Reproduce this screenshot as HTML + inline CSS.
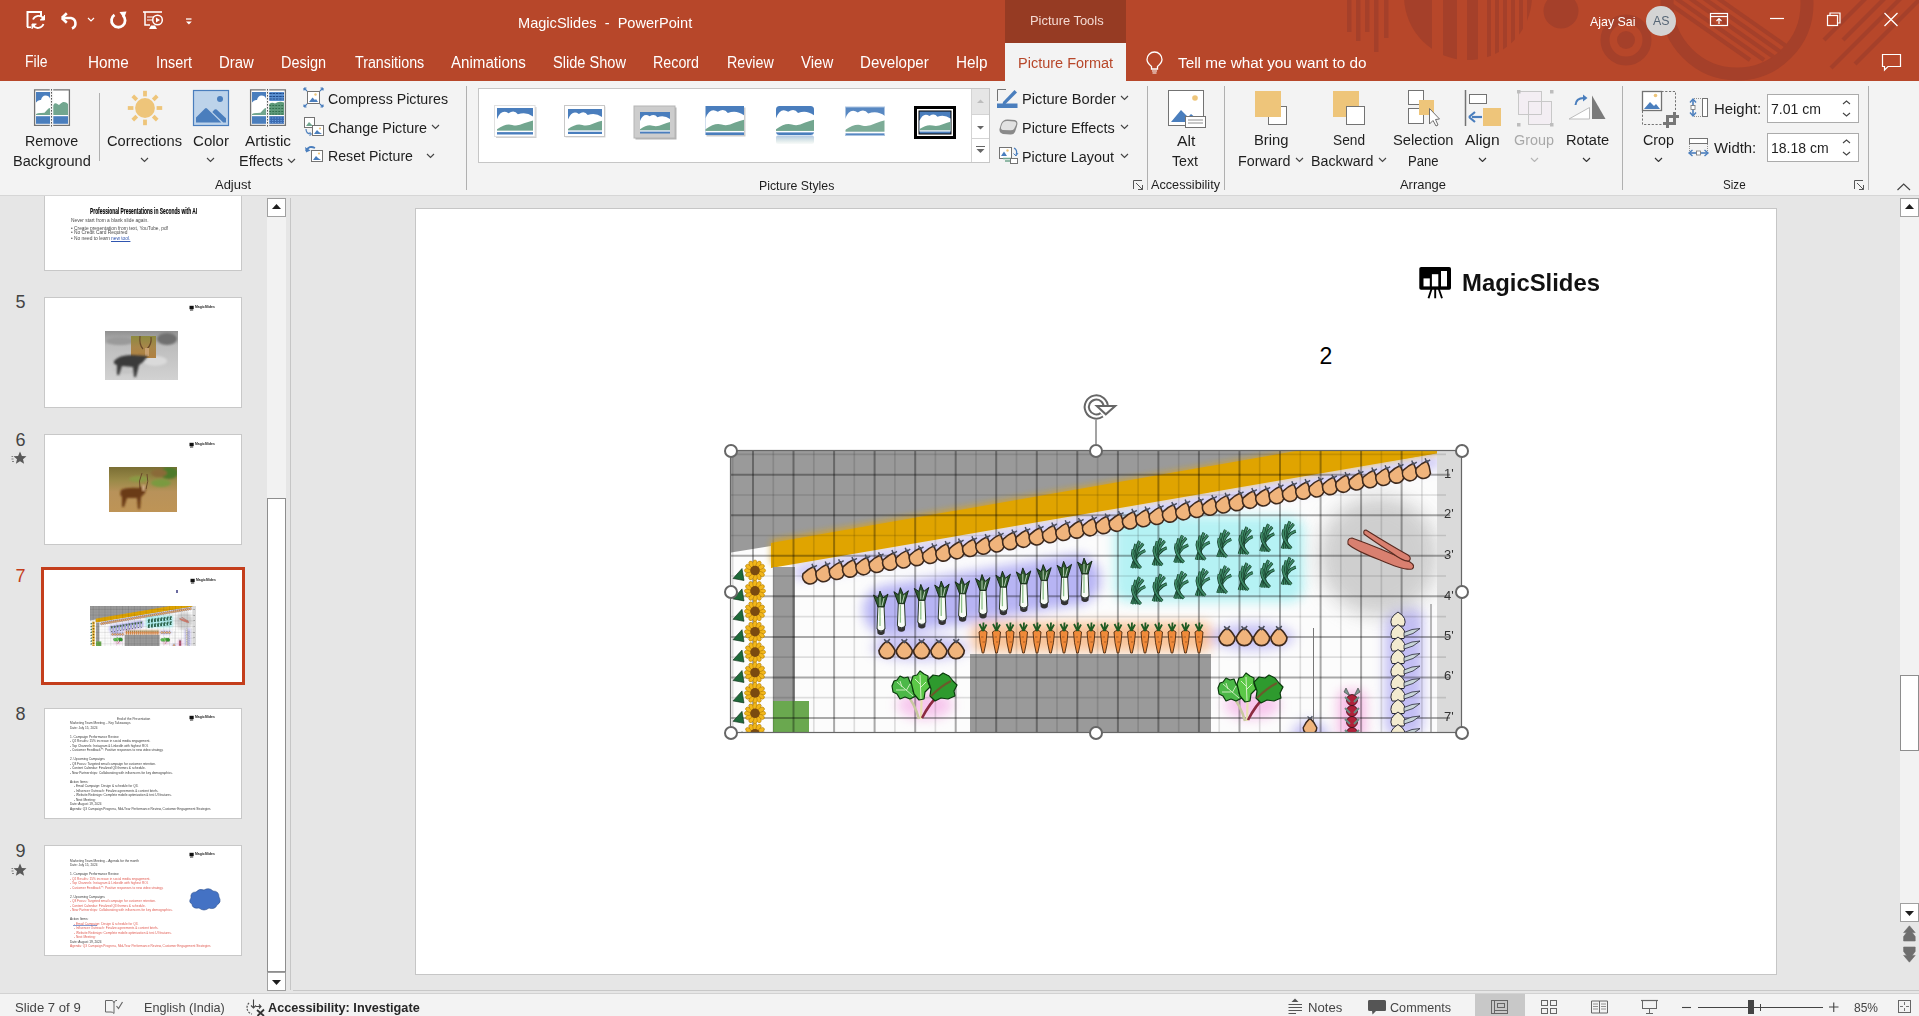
<!DOCTYPE html><html><head><meta charset="utf-8"><style>html,body{margin:0;padding:0;}body{width:1919px;height:1016px;position:relative;overflow:hidden;background:#E6E6E6;font-family:"Liberation Sans",sans-serif;}.t,.u{position:absolute;white-space:pre;font-family:"Liberation Sans",sans-serif;}</style></head><body><div style="position:absolute;left:0px;top:0px;width:1919px;height:81px;background:#B7472A;"></div><svg style="position:absolute;left:0px;top:0px;" width="1919" height="81" viewBox="0 0 1919 81"><rect x="1347" y="0" width="4.5" height="32" fill="#A5402A"/><rect x="1356" y="0" width="4.5" height="41" fill="#A5402A"/><rect x="1365" y="0" width="4.5" height="32" fill="#A5402A"/><rect x="1374" y="0" width="4.5" height="52" fill="#A5402A"/><rect x="1384" y="0" width="4.5" height="38" fill="#A5402A"/><clipPath id="semi"><circle cx="1468" cy="-4" r="64"/></clipPath><g clip-path="url(#semi)"><rect x="1400" y="0" width="32" height="70" fill="#A5402A"/><rect x="1443" y="0" width="14" height="70" fill="#A5402A"/><rect x="1467" y="0" width="11" height="70" fill="#A5402A"/><rect x="1487" y="0" width="4" height="70" fill="#A5402A"/><rect x="1495" y="0" width="4" height="70" fill="#A5402A"/><rect x="1503" y="0" width="4" height="70" fill="#A5402A"/><rect x="1511" y="0" width="4" height="70" fill="#A5402A"/><rect x="1519" y="0" width="4" height="70" fill="#A5402A"/><rect x="1527" y="0" width="5" height="70" fill="#A5402A"/></g><circle cx="1561" cy="11" r="17.5" fill="#A5402A"/><circle cx="1626" cy="40" r="21" fill="none" stroke="#A5402A" stroke-width="9"/><circle cx="1626" cy="40" r="9" fill="#A5402A"/><circle cx="1737" cy="4" r="70" fill="none" stroke="#A5402A" stroke-width="13"/><clipPath id="bigc"><circle cx="1737" cy="4" r="64"/></clipPath><g clip-path="url(#bigc)"><line x1="1650" y1="-10" x2="1750" y2="60" stroke="#A5402A" stroke-width="4.2"/><line x1="1664" y1="-10" x2="1764" y2="60" stroke="#A5402A" stroke-width="4.2"/><line x1="1678" y1="-10" x2="1778" y2="60" stroke="#A5402A" stroke-width="4.2"/><line x1="1692" y1="-10" x2="1792" y2="60" stroke="#A5402A" stroke-width="4.2"/><line x1="1706" y1="-10" x2="1806" y2="60" stroke="#A5402A" stroke-width="4.2"/></g><line x1="1824" y1="40" x2="1868" y2="-4" stroke="#A5402A" stroke-width="4.2"/><line x1="1843" y1="40" x2="1887" y2="-4" stroke="#A5402A" stroke-width="4.2"/><line x1="1831" y1="68" x2="1925" y2="-26" stroke="#A5402A" stroke-width="4.2"/><line x1="1855" y1="64" x2="1925" y2="-6" stroke="#A5402A" stroke-width="4.2"/></svg><div style="position:absolute;left:1005px;top:0px;width:121px;height:43px;background:#963B23;"></div><div style="position:absolute;left:1005px;top:43px;width:121px;height:38px;background:#F3F3F3;"></div><svg style="position:absolute;left:0px;top:0px;" width="240" height="40" viewBox="0 0 240 40"><path d="M27.5 27 V12 H41 V16" fill="none" stroke="#fff" stroke-width="2"/><path d="M27 27.3 H31" stroke="#fff" stroke-width="1.6"/><path d="M33 19.5 A6 6 0 0 1 43.5 18.5" fill="none" stroke="#fff" stroke-width="1.8"/><path d="M44.5 15 V20 H40" fill="#fff" stroke="#fff" stroke-width="1"/><path d="M43.5 24 A6 6 0 0 1 33 25.5" fill="none" stroke="#fff" stroke-width="1.8"/><path d="M32 29 V24 H36.5" fill="#fff" stroke="#fff" stroke-width="1"/><path d="M63.5 18 H71 A5.5 5.5 0 0 1 72 28.5" fill="none" stroke="#fff" stroke-width="2.6"/><path d="M61.8 18 L66.8 13.2 M61.8 18 L66.8 22.8" stroke="#fff" stroke-width="2.6" fill="none"/><path d="M88 18 L91 21 L94 18" fill="none" stroke="#fff" stroke-width="1.2"/><path d="M114.5 14.8 A6.8 6.8 0 1 0 123 15.5" fill="none" stroke="#fff" stroke-width="2.8"/><path d="M119.5 12 L126.5 11.5 L124 18.5 Z" fill="#fff"/><path d="M143 12 H162" stroke="#fff" stroke-width="1.6"/><path d="M145 12 V25 H150" fill="none" stroke="#fff" stroke-width="1.5"/><path d="M147 17 H154 M147 20 H152" stroke="#fff" stroke-width="1.2"/><circle cx="157.5" cy="20" r="4.8" fill="none" stroke="#fff" stroke-width="1.5"/><path d="M156 17.5 L160 20 L156 22.5Z" fill="#fff"/><path d="M149 29 L151 25.5 H155 L157 29 Z" fill="#fff"/><path d="M186 19 H191.5" stroke="#fff" stroke-width="1.3"/><path d="M186 21.5 H191.8 L188.9 24.5 Z" fill="#fff"/></svg><div class="t" style="left:517.50px;top:15.00px;font-size:15px;line-height:15px;color:#FFFFFF;font-weight:normal;transform:scaleX(0.9718);transform-origin:0 0;white-space:pre;">MagicSlides  -  PowerPoint</div><div class="t" style="left:1030.00px;top:14.00px;font-size:13px;line-height:13px;color:#F4DAD2;font-weight:normal;transform:scaleX(0.9921);transform-origin:0 0;">Picture Tools</div><div class="t" style="left:1590.00px;top:14.80px;font-size:13px;line-height:13px;color:#FFFFFF;font-weight:normal;transform:scaleX(0.9538);transform-origin:0 0;">Ajay Sai</div><div style="position:absolute;left:1646px;top:6px;width:30px;height:30px;border-radius:50%;background:#D4D4D4"></div><div class="t" style="left:1653.00px;top:14.72px;font-size:12.5px;line-height:12.5px;color:#556575;font-weight:normal;transform:scaleX(0.9888);transform-origin:0 0;">AS</div><svg style="position:absolute;left:0px;top:0px;" width="1919" height="81" viewBox="0 0 1919 81"><rect x="1710.5" y="13.5" width="17" height="12" fill="none" stroke="#fff" stroke-width="1.2"/><path d="M1710.5 16.5 H1727.5" stroke="#fff" stroke-width="1.2"/><path d="M1719 24 V18.5 M1716.5 21 L1719 18.5 L1721.5 21" fill="none" stroke="#fff" stroke-width="1.2"/><path d="M1770 18.5 H1784" stroke="#fff" stroke-width="1.2"/><rect x="1827.5" y="15.5" width="10" height="10" fill="none" stroke="#fff" stroke-width="1.2"/><path d="M1830 15.5 V13 H1840 V23 H1837.5" fill="none" stroke="#fff" stroke-width="1.2"/><path d="M1884.5 13 L1897.5 26 M1897.5 13 L1884.5 26" stroke="#fff" stroke-width="1.3"/><path d="M1882.5 54.5 H1900.5 V66.5 H1888 L1884.5 70 V66.5 H1882.5 Z" fill="none" stroke="#fff" stroke-width="1.2"/></svg><div class="t" style="left:25.00px;top:54.16px;font-size:16px;line-height:16px;color:#FFFFFF;font-weight:normal;transform:scaleX(0.8727);transform-origin:0 0;">File</div><div class="t" style="left:88.00px;top:54.66px;font-size:16px;line-height:16px;color:#FFFFFF;font-weight:normal;transform:scaleX(0.9546);transform-origin:0 0;">Home</div><div class="t" style="left:156.00px;top:54.66px;font-size:16px;line-height:16px;color:#FFFFFF;font-weight:normal;transform:scaleX(0.8996);transform-origin:0 0;">Insert</div><div class="t" style="left:219.00px;top:54.66px;font-size:16px;line-height:16px;color:#FFFFFF;font-weight:normal;transform:scaleX(0.9305);transform-origin:0 0;">Draw</div><div class="t" style="left:281.00px;top:54.66px;font-size:16px;line-height:16px;color:#FFFFFF;font-weight:normal;transform:scaleX(0.9034);transform-origin:0 0;">Design</div><div class="t" style="left:354.50px;top:54.66px;font-size:16px;line-height:16px;color:#FFFFFF;font-weight:normal;transform:scaleX(0.8918);transform-origin:0 0;">Transitions</div><div class="t" style="left:451.00px;top:54.66px;font-size:16px;line-height:16px;color:#FFFFFF;font-weight:normal;transform:scaleX(0.9443);transform-origin:0 0;">Animations</div><div class="t" style="left:553.00px;top:54.66px;font-size:16px;line-height:16px;color:#FFFFFF;font-weight:normal;transform:scaleX(0.9120);transform-origin:0 0;">Slide Show</div><div class="t" style="left:653.00px;top:54.66px;font-size:16px;line-height:16px;color:#FFFFFF;font-weight:normal;transform:scaleX(0.8919);transform-origin:0 0;">Record</div><div class="t" style="left:727.00px;top:54.66px;font-size:16px;line-height:16px;color:#FFFFFF;font-weight:normal;transform:scaleX(0.8910);transform-origin:0 0;">Review</div><div class="t" style="left:800.75px;top:54.66px;font-size:16px;line-height:16px;color:#FFFFFF;font-weight:normal;transform:scaleX(0.9378);transform-origin:0 0;">View</div><div class="t" style="left:860.00px;top:54.66px;font-size:16px;line-height:16px;color:#FFFFFF;font-weight:normal;transform:scaleX(0.9433);transform-origin:0 0;">Developer</div><div class="t" style="left:956.00px;top:54.66px;font-size:16px;line-height:16px;color:#FFFFFF;font-weight:normal;transform:scaleX(0.9573);transform-origin:0 0;">Help</div><div class="t" style="left:1017.60px;top:55.08px;font-size:15.5px;line-height:15.5px;color:#B7472A;font-weight:normal;transform:scaleX(0.9356);transform-origin:0 0;">Picture Format</div><svg style="position:absolute;left:1140px;top:50px;" width="30" height="28" viewBox="0 0 30 28"><path d="M11.5 16.5 C8.5 14 7 12 7 9.5 A7.5 7.5 0 0 1 22 9.5 C22 12 20.5 14 17.5 16.5 V19 H11.5 Z" fill="none" stroke="#fff" stroke-width="1.3"/><path d="M12 21 H17 M12.5 23 H16.5" stroke="#fff" stroke-width="1.2"/></svg><div class="t" style="left:1178.00px;top:54.88px;font-size:15.5px;line-height:15.5px;color:#FFFFFF;font-weight:normal;transform:scaleX(0.9860);transform-origin:0 0;">Tell me what you want to do</div><div style="position:absolute;left:0px;top:81px;width:1919px;height:114px;background:#F3F3F3;"></div><div style="position:absolute;left:0px;top:195px;width:1919px;height:1px;background:#D6D6D6;"></div><div style="position:absolute;left:99px;top:93px;width:1px;height:68px;background:#B0B0B0;"></div><div style="position:absolute;left:466px;top:86px;width:1px;height:104px;background:#B0B0B0;"></div><div style="position:absolute;left:1147px;top:86px;width:1px;height:104px;background:#B0B0B0;"></div><div style="position:absolute;left:1224px;top:86px;width:1px;height:104px;background:#B0B0B0;"></div><div style="position:absolute;left:1622px;top:86px;width:1px;height:104px;background:#B0B0B0;"></div><div style="position:absolute;left:1868px;top:86px;width:1px;height:104px;background:#B0B0B0;"></div><svg style="position:absolute;left:0px;top:81px;" width="470" height="114" viewBox="0 81 470 114"><path d="M49.8 89.9 H34.6 V125.3 H49.8 M53.2 89.9 H69.4 V125.3 H53.2" fill="#fff" stroke="#737373" stroke-width="1.3"/><rect x="36" y="92" width="14" height="23" fill="#4A7EBD"/><path d="M36 102.5 Q38 99.5 41 100 Q42 95.5 45.5 95.5 Q49 95.5 50 98.5 V115 H36 Z" fill="#fff"/><path d="M36 115 V114 Q38 112.8 41 113 L44.5 112.8 Q46 111 47 110 Q48.5 108 50 108 V115 Z" fill="#72A68F"/><rect x="36" y="116.2" width="14" height="7.6" fill="#4A7EBD"/><path d="M51.5 89 V127" stroke="#555" stroke-width="1" stroke-dasharray="1.6 1.4"/><path d="M53.3 115 V105.5 Q54 102.5 56.5 103.5 L59 105 Q61 103 63 102 Q66 101.5 68 104 V115 Z" fill="#72A68F"/><rect x="53.3" y="116.2" width="14.7" height="7.6" fill="#4A7EBD"/><circle cx="145" cy="108" r="9.9" fill="#EEC57A"/><line x1="156.6" y1="108.0" x2="162.2" y2="108.0" stroke="#EEC57A" stroke-width="3.8"/><line x1="153.2" y1="116.2" x2="157.2" y2="120.2" stroke="#EEC57A" stroke-width="3.8"/><line x1="145.0" y1="119.6" x2="145.0" y2="125.2" stroke="#EEC57A" stroke-width="3.8"/><line x1="136.8" y1="116.2" x2="132.8" y2="120.2" stroke="#EEC57A" stroke-width="3.8"/><line x1="133.4" y1="108.0" x2="127.8" y2="108.0" stroke="#EEC57A" stroke-width="3.8"/><line x1="136.8" y1="99.8" x2="132.8" y2="95.8" stroke="#EEC57A" stroke-width="3.8"/><line x1="145.0" y1="96.4" x2="145.0" y2="90.8" stroke="#EEC57A" stroke-width="3.8"/><line x1="153.2" y1="99.8" x2="157.2" y2="95.8" stroke="#EEC57A" stroke-width="3.8"/><rect x="193.5" y="90.5" width="35" height="35" fill="#BDD3EA" stroke="#4A7EBD" stroke-width="1.2"/><path d="M196 117.5 L205 108.5 Q206 107.5 207 108.5 L221.3 122.6 H196 Z" fill="#4A7EBD"/><path d="M212.3 112 L214.6 109.6 Q215.6 108.8 216.6 109.6 L226 118.2 V122.6 H223.2 Z" fill="#4A7EBD"/><circle cx="220" cy="99" r="3" fill="#4A7EBD"/><path d="M265.8 89.9 H250.6 V125.3 H265.8 M269.2 89.9 H285.4 V125.3 H269.2" fill="#fff" stroke="#737373" stroke-width="1.3"/><rect x="252" y="92" width="14" height="23" fill="#4A7EBD"/><path d="M252 102.5 Q254 99.5 257 100 Q258 95.5 261.5 95.5 Q265 95.5 266 98.5 V115 H252 Z" fill="#fff"/><path d="M252 115 V114 Q254 112.8 257 113 L260.5 112.8 Q262 111 263 110 Q264.5 108 266 108 V115 Z" fill="#72A68F"/><rect x="252" y="116.2" width="14" height="7.6" fill="#4A7EBD"/><path d="M267.5 89 V127" stroke="#555" stroke-width="1" stroke-dasharray="1.6 1.4"/><rect x="269.3" y="92" width="14.7" height="9" fill="#5A8FD0"/><path d="M269.3 93.5 H284" stroke="#1F4A8A" stroke-width="1" stroke-dasharray="2.5 0.8"/><path d="M269.3 96.5 H284" stroke="#1F4A8A" stroke-width="1" stroke-dasharray="2.5 0.8"/><path d="M269.3 99 H284" stroke="#1F4A8A" stroke-width="1" stroke-dasharray="2.5 0.8"/><path d="M269.3 115 V104 Q272 102 275 103.5 Q279 100.5 284 102.5 V115 Z" fill="#5E9A7A"/><path d="M269.3 105.5 H284" stroke="#2E6A4A" stroke-width="0.9" stroke-dasharray="1.8 1.2"/><path d="M269.3 108.5 H284" stroke="#2E6A4A" stroke-width="0.9" stroke-dasharray="1.8 1.2"/><path d="M269.3 111.5 H284" stroke="#2E6A4A" stroke-width="0.9" stroke-dasharray="1.8 1.2"/><path d="M269.3 114 H284" stroke="#2E6A4A" stroke-width="0.9" stroke-dasharray="1.8 1.2"/><rect x="269.3" y="116.2" width="14.7" height="7.6" fill="#3A6AB0"/><path d="M269.3 118 H284" stroke="#7AB0F0" stroke-width="0.8" stroke-dasharray="1.2 1.6"/><path d="M269.3 120.5 H284" stroke="#7AB0F0" stroke-width="0.8" stroke-dasharray="1.2 1.6"/><path d="M269.3 122.5 H284" stroke="#7AB0F0" stroke-width="0.8" stroke-dasharray="1.2 1.6"/><rect x="307.5" y="91.5" width="12" height="12" fill="#fff" stroke="#737373" stroke-width="1"/><path d="M309 102 L312.5 97.5 L315 100 L316 99 L318 102 Z" fill="#4A7EBD"/><circle cx="315.5" cy="94.5" r="1.2" fill="#EEC57A"/><path d="M304 88 L307 91 M304 88 V90.5 M304 88 H306.5" stroke="#4A7EBD" stroke-width="1.2"/><path d="M323 88 L320 91 M323 88 V90.5 M323 88 H320.5" stroke="#4A7EBD" stroke-width="1.2"/><path d="M304 107 L307 104 M304 107 V104.5 M304 107 H306.5" stroke="#4A7EBD" stroke-width="1.2"/><path d="M323 107 L320 104 M323 107 V104.5 M323 107 H320.5" stroke="#4A7EBD" stroke-width="1.2"/><rect x="304.5" y="117.5" width="10" height="10" fill="#fff" stroke="#737373" stroke-width="1"/><path d="M306 126 L309 122 L313 126 Z" fill="#72A68F"/><rect x="312.5" y="125.5" width="11" height="10" fill="#fff" stroke="#737373" stroke-width="1"/><path d="M314 134 L317 130 L319 132 L322 134 Z" fill="#4A7EBD"/><circle cx="320" cy="128.5" r="1.1" fill="#EEC57A"/><path d="M306 129 Q306 134 311 134" fill="none" stroke="#4A7EBD" stroke-width="1.2"/><path d="M309.5 132 L311.5 134 L309.5 136" fill="none" stroke="#4A7EBD" stroke-width="1"/><rect x="311.5" y="150.5" width="11" height="11" fill="#fff" stroke="#737373" stroke-width="1"/><path d="M313 160 L316 156 L318 158 L321 160 Z" fill="#4A7EBD"/><circle cx="319" cy="153.5" r="1.1" fill="#EEC57A"/><path d="M306 151 Q309 145 315 148" fill="none" stroke="#4A7EBD" stroke-width="1.8"/><path d="M305 147 L306 152.5 L310.5 150.5" fill="#4A7EBD"/></svg><div class="t" style="left:25.30px;top:133.28px;font-size:15.5px;line-height:15.5px;color:#1E1E1E;font-weight:normal;transform:scaleX(0.9200);transform-origin:0 0;">Remove</div><div class="t" style="left:12.50px;top:153.38px;font-size:15.5px;line-height:15.5px;color:#1E1E1E;font-weight:normal;transform:scaleX(0.9404);transform-origin:0 0;">Background</div><div class="t" style="left:107.00px;top:133.28px;font-size:15.5px;line-height:15.5px;color:#1E1E1E;font-weight:normal;transform:scaleX(0.9464);transform-origin:0 0;">Corrections</div><svg style="position:absolute;left:139.5px;top:157.25px;" width="9" height="5.5" viewBox="0 0 9 5.5"><path d="M1 1 L4.5 4.5 L8 1" fill="none" stroke="#444" stroke-width="1.15"/></svg><div class="t" style="left:193.00px;top:133.28px;font-size:15.5px;line-height:15.5px;color:#1E1E1E;font-weight:normal;transform:scaleX(0.9717);transform-origin:0 0;">Color</div><svg style="position:absolute;left:205.5px;top:157.25px;" width="9" height="5.5" viewBox="0 0 9 5.5"><path d="M1 1 L4.5 4.5 L8 1" fill="none" stroke="#444" stroke-width="1.15"/></svg><div class="t" style="left:245.00px;top:133.28px;font-size:15.5px;line-height:15.5px;color:#1E1E1E;font-weight:normal;transform:scaleX(0.9892);transform-origin:0 0;">Artistic</div><div class="t" style="left:239.00px;top:153.38px;font-size:15.5px;line-height:15.5px;color:#1E1E1E;font-weight:normal;transform:scaleX(0.9340);transform-origin:0 0;">Effects</div><svg style="position:absolute;left:286.5px;top:158.25px;" width="9" height="5.5" viewBox="0 0 9 5.5"><path d="M1 1 L4.5 4.5 L8 1" fill="none" stroke="#444" stroke-width="1.15"/></svg><div class="t" style="left:215.00px;top:178.40px;font-size:13px;line-height:13px;color:#1E1E1E;font-weight:normal;transform:scaleX(0.9961);transform-origin:0 0;">Adjust</div><div class="t" style="left:328.00px;top:91.08px;font-size:15.5px;line-height:15.5px;color:#1E1E1E;font-weight:normal;transform:scaleX(0.9165);transform-origin:0 0;">Compress Pictures</div><div class="t" style="left:328.00px;top:119.68px;font-size:15.5px;line-height:15.5px;color:#1E1E1E;font-weight:normal;transform:scaleX(0.9266);transform-origin:0 0;">Change Picture</div><svg style="position:absolute;left:430.5px;top:124.25px;" width="9" height="5.5" viewBox="0 0 9 5.5"><path d="M1 1 L4.5 4.5 L8 1" fill="none" stroke="#444" stroke-width="1.15"/></svg><div class="t" style="left:328.00px;top:148.38px;font-size:15.5px;line-height:15.5px;color:#1E1E1E;font-weight:normal;transform:scaleX(0.9135);transform-origin:0 0;">Reset Picture</div><svg style="position:absolute;left:425.5px;top:153.25px;" width="9" height="5.5" viewBox="0 0 9 5.5"><path d="M1 1 L4.5 4.5 L8 1" fill="none" stroke="#444" stroke-width="1.15"/></svg><div style="position:absolute;left:478px;top:88px;width:510px;height:73px;background:#fff;border:1px solid #C6C6C6"></div><div style="position:absolute;left:971px;top:89px;width:1px;height:73px;background:#D4D4D4;"></div><div style="position:absolute;left:972px;top:89px;width:17px;height:25px;background:#E6E6E6;"></div><div style="position:absolute;left:972px;top:114px;width:17px;height:1px;background:#D4D4D4;"></div><div style="position:absolute;left:972px;top:138px;width:17px;height:1px;background:#D4D4D4;"></div><svg style="position:absolute;left:470px;top:81px;" width="1449" height="114" viewBox="470 81 1449 114"><path d="M977 103 L980.5 99.5 L984 103 Z" fill="#BDBDBD"/><path d="M977 126 L980.5 129.5 L984 126 Z" fill="#666"/><path d="M976 146.5 H985" stroke="#666" stroke-width="1"/><path d="M976.5 149 L980.5 153 L984.5 149 Z" fill="#666"/><rect x="496" y="107" width="40.5" height="31" fill="#000" opacity="0.18"/><rect x="494.5" y="105.5" width="40.5" height="31" fill="#fff" stroke="#E0E0E0" stroke-width="1"/><rect x="497" y="108" width="36" height="26.5" fill="#4A7EBD"/><path d="M497 119.13 Q501.32 108.53 508.52 113.3 Q514.28 109.325 517.88 114.36 Q525.8 111.18 533 116.48 V130.79 H497 Z" fill="#fff"/><path d="M497 130.79 V129.2 Q506.0 122.84 512.12 124.96000000000001 Q517.88 126.55 524.0 123.37 Q529.4 121.25 533 120.455 V130.79 Z" fill="#72A68F"/><rect x="497" y="130.79" width="36" height="1.3250000000000002" fill="#fff"/><rect x="565.5" y="106.5" width="40" height="31" fill="#000" opacity="0.15"/><rect x="564.5" y="105.5" width="40" height="31" fill="#fff" stroke="#C8C8C8" stroke-width="1"/><rect x="568" y="109" width="34" height="25" fill="#4A7EBD"/><path d="M568 119.5 Q572.08 109.5 578.88 114.0 Q584.32 110.25 587.72 115.0 Q595.2 112.0 602 117.0 V130.5 H568 Z" fill="#fff"/><path d="M568 130.5 V129.0 Q576.5 123.0 582.28 125.0 Q587.72 126.5 593.5 123.5 Q598.6 121.5 602 120.75 V130.5 Z" fill="#72A68F"/><rect x="568" y="130.5" width="34" height="1.25" fill="#fff"/><rect x="635.5" y="107.5" width="41" height="32" fill="#000" opacity="0.3"/><rect x="634" y="106" width="41" height="32" fill="#CDCDCD" stroke="#B5B5B5" stroke-width="1"/><rect x="640" y="112" width="30" height="21.5" fill="#4A7EBD"/><path d="M640 121.03 Q643.6 112.43 649.6 116.3 Q654.4 113.075 657.4 117.16 Q664.0 114.58 670 118.88 V130.49 H640 Z" fill="#fff"/><path d="M640 130.49 V129.2 Q647.5 124.04 652.6 125.76 Q657.4 127.05 662.5 124.47 Q667.0 122.75 670 122.105 V130.49 Z" fill="#72A68F"/><rect x="640" y="130.49" width="30" height="1.075" fill="#fff"/><rect x="706.5" y="107.5" width="39" height="29" fill="#000" opacity="0.2"/><rect x="705.5" y="106" width="38.5" height="29" fill="#4A7EBD"/><path d="M705.5 118.18 Q710.12 106.58 717.82 111.8 Q723.98 107.45 727.83 112.96 Q736.3 109.48 744.0 115.28 V130.94 H705.5 Z" fill="#fff"/><path d="M705.5 130.94 V129.2 Q715.125 122.24000000000001 721.67 124.56 Q727.83 126.3 734.375 122.82 Q740.15 120.5 744.0 119.63 V130.94 Z" fill="#72A68F"/><rect x="705.5" y="130.94" width="38.5" height="1.4500000000000002" fill="#fff"/><clipPath id="r5"><rect x="776" y="106" width="38" height="29" rx="3.5"/></clipPath><g clip-path="url(#r5)"><rect x="776" y="106" width="38" height="29" fill="#4A7EBD"/><path d="M776 118.18 Q780.56 106.58 788.16 111.8 Q794.24 107.45 798.04 112.96 Q806.4 109.48 814 115.28 V130.94 H776 Z" fill="#fff"/><path d="M776 130.94 V129.2 Q785.5 122.24000000000001 791.96 124.56 Q798.04 126.3 804.5 122.82 Q810.2 120.5 814 119.63 V130.94 Z" fill="#72A68F"/><rect x="776" y="130.94" width="38" height="1.4500000000000002" fill="#fff"/></g><defs><linearGradient id="refl" x1="0" y1="0" x2="0" y2="1"><stop offset="0" stop-color="#4A7EBD" stop-opacity="0.45"/><stop offset="1" stop-color="#72A68F" stop-opacity="0.05"/></linearGradient></defs><rect x="776" y="135.5" width="38" height="8.5" fill="url(#refl)" rx="2"/><g opacity="0.92"><rect x="845" y="106.5" width="40" height="29.5" fill="#4A7EBD"/><path d="M845 118.89 Q849.8 107.09 857.8 112.4 Q864.2 107.975 868.2 113.58 Q877.0 110.04 885 115.94 V131.87 H845 Z" fill="#fff"/><path d="M845 131.87 V130.1 Q855.0 123.02000000000001 861.8 125.38 Q868.2 127.15 875.0 123.61 Q881.0 121.25 885 120.365 V131.87 Z" fill="#72A68F"/><rect x="845" y="131.87" width="40" height="1.475" fill="#fff"/></g><rect x="845" y="106.5" width="40" height="29.5" fill="none" stroke="#fff" stroke-opacity="0.5" stroke-width="2"/><rect x="914" y="106" width="42" height="33" fill="#000"/><rect x="917" y="109" width="36" height="27" fill="#fff"/><rect x="918.5" y="110.5" width="33" height="24" fill="#000"/><rect x="919.5" y="111.5" width="31" height="22" fill="#4A7EBD"/><path d="M919.5 120.74 Q923.22 111.94 929.42 115.9 Q934.38 112.6 937.48 116.78 Q944.3 114.14 950.5 118.54 V130.42 H919.5 Z" fill="#fff"/><path d="M919.5 130.42 V129.1 Q927.25 123.82 932.52 125.58 Q937.48 126.9 942.75 124.26 Q947.4 122.5 950.5 121.84 V130.42 Z" fill="#72A68F"/><rect x="919.5" y="130.42" width="31" height="1.1" fill="#fff"/><path d="M997.5 101 V89.5 H1006" fill="none" stroke="#737373" stroke-width="1"/><path d="M1003 102 L1014.5 90 L1017 92.5 L1005.5 104 L1002.5 104.8 Z" fill="#4A7EBD"/><rect x="997" y="103.5" width="20.5" height="4.5" fill="#4A7EBD"/><path d="M1001 124 Q1003 119 1008 119.5 L1015 120 Q1018.5 121 1017 126 L1015 132 Q1013.5 135 1010 134.5 L1003 134 Q999 133 999.5 129 Z" fill="#8A8A8A"/><path d="M1002 124 Q1003.5 120.5 1008 121 L1014.5 121.5 Q1017 122 1016 125 L1014 129 Q1013 130.5 1010 130.3 L1003 130 Q1000.5 129.5 1001 127 Z" fill="#E2E2E2"/><rect x="999.5" y="147.5" width="12" height="11" fill="#fff" stroke="#737373" stroke-width="1"/><path d="M1001 156 L1004 151.5 L1007 156 Z" fill="#4A7EBD"/><circle cx="1007.5" cy="150.5" r="1.2" fill="#EEC57A"/><path d="M1003 158.5 H1011 M1005 161 H1010" stroke="#72A68F" stroke-width="1.6"/><rect x="1010.5" y="158.5" width="7" height="5" fill="#fff" stroke="#737373" stroke-width="1"/><path d="M1014 148 Q1018 150 1016 155" fill="none" stroke="#4A7EBD" stroke-width="1.2"/><path d="M1013.5 153.5 L1016 156 L1018 153" fill="none" stroke="#4A7EBD" stroke-width="1"/><rect x="1168.5" y="90.5" width="35" height="35" fill="#fff" stroke="#737373" stroke-width="1"/><path d="M1171 122 L1181 110 L1188 117 L1191 114 L1197 119 V122 Z" fill="#4A7EBD"/><circle cx="1195" cy="98" r="2.8" fill="#EEC57A"/><rect x="1185.5" y="116.5" width="20" height="11" fill="#fff" stroke="#737373" stroke-width="1"/><path d="M1188 120 H1203 M1188 123 H1203" stroke="#737373" stroke-width="0.8"/><rect x="1268.5" y="106.5" width="18" height="18" fill="#fff" stroke="#737373" stroke-width="1"/><rect x="1255" y="91" width="26" height="26" fill="#EEC57A"/><rect x="1333" y="91" width="26" height="26" fill="#EEC57A"/><rect x="1346.5" y="106.5" width="18" height="18" fill="#fff" stroke="#737373" stroke-width="1"/><rect x="1408.5" y="90.5" width="15" height="14" fill="#fff" stroke="#737373" stroke-width="1"/><rect x="1408.5" y="108.5" width="15" height="15" fill="#fff" stroke="#737373" stroke-width="1"/><rect x="1419" y="100" width="15" height="15" fill="#EEC57A"/><path d="M1429.5 108.5 V124 L1433 120.5 L1436 126 L1438 125 L1435.5 119.5 L1439.5 119 Z" fill="#fff" stroke="#6E6E6E" stroke-width="1"/><path d="M1465.5 90 V126" stroke="#737373" stroke-width="1.5"/><rect x="1469.5" y="94.5" width="17" height="9" fill="#fff" stroke="#737373" stroke-width="1"/><rect x="1483" y="108" width="18" height="18" fill="#EEC57A"/><path d="M1482 117 H1472" stroke="#4A7EBD" stroke-width="2.2"/><path d="M1469 117 L1475 112 M1469 117 L1475 122" stroke="#4A7EBD" stroke-width="2.2"/><rect x="1518.5" y="91.5" width="23" height="23" fill="#F3EEF3" stroke="#C8C8C8" stroke-width="1"/><rect x="1528.5" y="101.5" width="23" height="23" fill="#F3EEF3" stroke="#C8C8C8" stroke-width="1"/><path d="M1528.5 101.5 H1541.5 V114.5 H1528.5 Z" fill="none" stroke="#C8C8C8" stroke-width="1"/><rect x="1517" y="90" width="3.5" height="3.5" fill="#BDBDBD"/><rect x="1550" y="90" width="3.5" height="3.5" fill="#BDBDBD"/><rect x="1517" y="123" width="3.5" height="3.5" fill="#BDBDBD"/><rect x="1550" y="123" width="3.5" height="3.5" fill="#BDBDBD"/><path d="M1569 119 L1589.5 107.5 V119 Z" fill="#fff" stroke="#BDBDBD" stroke-width="1"/><path d="M1592 95.5 L1605.5 119 H1592 Z" fill="#7A7A7A"/><path d="M1575.5 105 Q1576 97.5 1585 98" fill="none" stroke="#4A7EBD" stroke-width="2"/><path d="M1583 94.5 L1587.5 98 L1583 101.5 Z" fill="#4A7EBD"/><path d="M1661.5 124.5 H1642.5 V110 M1675.5 110 V91.5 H1661" fill="none" stroke="#737373" stroke-width="1" stroke-dasharray="2.2 1.6"/><rect x="1642.5" y="91.5" width="19" height="19" fill="#fff" stroke="#737373" stroke-width="1.3"/><path d="M1644 109 L1650 102 L1654 106 L1656 104 L1660 109 Z" fill="#4A7EBD"/><circle cx="1655.5" cy="95.5" r="1.8" fill="#EEC57A"/><path fill-rule="evenodd" d="M1666 115 H1676 V125 H1666 Z M1669 118 V122 H1673 V118 Z" fill="#777"/><path d="M1673 112 h3 v3 h-3 Z M1676 115 h3 v3 h-3 Z M1663 122 h3 v3 h-3 Z M1666 125 h3 v3 h-3 Z" fill="#777"/><path d="M1693 100 V115" stroke="#4A7EBD" stroke-width="1.6"/><path d="M1690 102.5 L1693 99 L1696 102.5 M1690 112.5 L1693 116 L1696 112.5" fill="none" stroke="#4A7EBD" stroke-width="1.4"/><rect x="1691" y="105.5" width="4" height="4" fill="#fff" stroke="#737373" stroke-width="0.8"/><path d="M1694 98.5 H1702 M1694 116.5 H1702" stroke="#777" stroke-width="0.8" stroke-dasharray="1 1"/><rect x="1702.5" y="98.5" width="5" height="18" fill="#fff" stroke="#737373" stroke-width="1"/><rect x="1689.5" y="138.5" width="18" height="5" fill="#fff" stroke="#737373" stroke-width="1"/><path d="M1689.5 144 V153 M1707.5 144 V153" stroke="#777" stroke-width="0.8" stroke-dasharray="1 1"/><path d="M1690 153 H1707" stroke="#4A7EBD" stroke-width="1.6"/><path d="M1692.5 150 L1689 153 L1692.5 156 M1704.5 150 L1708 153 L1704.5 156" fill="none" stroke="#4A7EBD" stroke-width="1.4"/><rect x="1696.5" y="151" width="4" height="4" fill="#fff" stroke="#737373" stroke-width="0.8"/><path d="M1133.5 189 V180.5 H1142" fill="none" stroke="#555" stroke-width="1"/><path d="M1136 183 L1142.5 189.5 M1142.5 185 V189.5 H1138" fill="none" stroke="#555" stroke-width="1"/><path d="M1854.5 189 V180.5 H1863" fill="none" stroke="#555" stroke-width="1"/><path d="M1857 183 L1863.5 189.5 M1863.5 185 V189.5 H1859" fill="none" stroke="#555" stroke-width="1"/><path d="M1897.5 190 L1903.7 184 L1910 190" fill="none" stroke="#444" stroke-width="1.2"/></svg><div class="t" style="left:759.00px;top:179.00px;font-size:13px;line-height:13px;color:#1E1E1E;font-weight:normal;transform:scaleX(0.9474);transform-origin:0 0;">Picture Styles</div><div class="t" style="left:1022.00px;top:91.08px;font-size:15.5px;line-height:15.5px;color:#1E1E1E;font-weight:normal;transform:scaleX(0.9467);transform-origin:0 0;">Picture Border</div><svg style="position:absolute;left:1120.0px;top:95.25px;" width="9" height="5.5" viewBox="0 0 9 5.5"><path d="M1 1 L4.5 4.5 L8 1" fill="none" stroke="#444" stroke-width="1.15"/></svg><div class="t" style="left:1022.00px;top:119.88px;font-size:15.5px;line-height:15.5px;color:#1E1E1E;font-weight:normal;transform:scaleX(0.9312);transform-origin:0 0;">Picture Effects</div><svg style="position:absolute;left:1119.7px;top:124.25px;" width="9" height="5.5" viewBox="0 0 9 5.5"><path d="M1 1 L4.5 4.5 L8 1" fill="none" stroke="#444" stroke-width="1.15"/></svg><div class="t" style="left:1022.00px;top:148.88px;font-size:15.5px;line-height:15.5px;color:#1E1E1E;font-weight:normal;transform:scaleX(0.9284);transform-origin:0 0;">Picture Layout</div><svg style="position:absolute;left:1119.7px;top:153.25px;" width="9" height="5.5" viewBox="0 0 9 5.5"><path d="M1 1 L4.5 4.5 L8 1" fill="none" stroke="#444" stroke-width="1.15"/></svg><div class="t" style="left:1176.50px;top:132.58px;font-size:15.5px;line-height:15.5px;color:#1E1E1E;font-weight:normal;transform:scaleX(1.0114);transform-origin:0 0;">Alt</div><div class="t" style="left:1172.40px;top:152.88px;font-size:15.5px;line-height:15.5px;color:#1E1E1E;font-weight:normal;transform:scaleX(0.9143);transform-origin:0 0;">Text</div><div class="t" style="left:1151.00px;top:178.40px;font-size:13px;line-height:13px;color:#1E1E1E;font-weight:normal;transform:scaleX(0.9746);transform-origin:0 0;">Accessibility</div><div class="t" style="left:1254.00px;top:132.48px;font-size:15.5px;line-height:15.5px;color:#1E1E1E;font-weight:normal;transform:scaleX(0.9534);transform-origin:0 0;">Bring</div><div class="t" style="left:1237.50px;top:152.98px;font-size:15.5px;line-height:15.5px;color:#1E1E1E;font-weight:normal;transform:scaleX(0.9233);transform-origin:0 0;">Forward</div><svg style="position:absolute;left:1294.5px;top:157.25px;" width="9" height="5.5" viewBox="0 0 9 5.5"><path d="M1 1 L4.5 4.5 L8 1" fill="none" stroke="#444" stroke-width="1.15"/></svg><div class="t" style="left:1333.00px;top:132.48px;font-size:15.5px;line-height:15.5px;color:#1E1E1E;font-weight:normal;transform:scaleX(0.8839);transform-origin:0 0;">Send</div><div class="t" style="left:1310.60px;top:152.98px;font-size:15.5px;line-height:15.5px;color:#1E1E1E;font-weight:normal;transform:scaleX(0.9168);transform-origin:0 0;">Backward</div><svg style="position:absolute;left:1378.0px;top:157.25px;" width="9" height="5.5" viewBox="0 0 9 5.5"><path d="M1 1 L4.5 4.5 L8 1" fill="none" stroke="#444" stroke-width="1.15"/></svg><div class="t" style="left:1393.00px;top:132.48px;font-size:15.5px;line-height:15.5px;color:#1E1E1E;font-weight:normal;transform:scaleX(0.9488);transform-origin:0 0;">Selection</div><div class="t" style="left:1408.00px;top:152.98px;font-size:15.5px;line-height:15.5px;color:#1E1E1E;font-weight:normal;transform:scaleX(0.8425);transform-origin:0 0;">Pane</div><div class="t" style="left:1400.00px;top:178.40px;font-size:13px;line-height:13px;color:#1E1E1E;font-weight:normal;transform:scaleX(0.9946);transform-origin:0 0;">Arrange</div><div class="t" style="left:1465.00px;top:132.48px;font-size:15.5px;line-height:15.5px;color:#1E1E1E;font-weight:normal;transform:scaleX(1.0082);transform-origin:0 0;">Align</div><svg style="position:absolute;left:1477.5px;top:156.75px;" width="9" height="5.5" viewBox="0 0 9 5.5"><path d="M1 1 L4.5 4.5 L8 1" fill="none" stroke="#333" stroke-width="1.15"/></svg><div class="t" style="left:1514.00px;top:132.48px;font-size:15.5px;line-height:15.5px;color:#A8A8A8;font-weight:normal;transform:scaleX(0.9282);transform-origin:0 0;">Group</div><svg style="position:absolute;left:1529.5px;top:156.75px;" width="9" height="5.5" viewBox="0 0 9 5.5"><path d="M1 1 L4.5 4.5 L8 1" fill="none" stroke="#B5B5B5" stroke-width="1.15"/></svg><div class="t" style="left:1565.60px;top:132.48px;font-size:15.5px;line-height:15.5px;color:#1E1E1E;font-weight:normal;transform:scaleX(0.9437);transform-origin:0 0;">Rotate</div><svg style="position:absolute;left:1581.5px;top:156.75px;" width="9" height="5.5" viewBox="0 0 9 5.5"><path d="M1 1 L4.5 4.5 L8 1" fill="none" stroke="#333" stroke-width="1.15"/></svg><div class="t" style="left:1643.00px;top:132.48px;font-size:15.5px;line-height:15.5px;color:#1E1E1E;font-weight:normal;transform:scaleX(0.9224);transform-origin:0 0;">Crop</div><svg style="position:absolute;left:1653.5px;top:156.75px;" width="9" height="5.5" viewBox="0 0 9 5.5"><path d="M1 1 L4.5 4.5 L8 1" fill="none" stroke="#333" stroke-width="1.15"/></svg><div class="t" style="left:1713.75px;top:100.63px;font-size:15.5px;line-height:15.5px;color:#1E1E1E;font-weight:normal;transform:scaleX(0.9618);transform-origin:0 0;">Height:</div><div class="t" style="left:1713.75px;top:139.63px;font-size:15.5px;line-height:15.5px;color:#1E1E1E;font-weight:normal;transform:scaleX(0.9616);transform-origin:0 0;">Width:</div><div style="position:absolute;left:1767px;top:94px;width:90px;height:27px;background:#fff;border:1px solid #ABABAB"></div><div style="position:absolute;left:1767px;top:133px;width:90px;height:27px;background:#fff;border:1px solid #ABABAB"></div><div class="t" style="left:1770.60px;top:100.63px;font-size:15.5px;line-height:15.5px;color:#1E1E1E;font-weight:normal;transform:scaleX(0.9068);transform-origin:0 0;">7.01 cm</div><div class="t" style="left:1771.25px;top:139.63px;font-size:15.5px;line-height:15.5px;color:#1E1E1E;font-weight:normal;transform:scaleX(0.9057);transform-origin:0 0;">18.18 cm</div><svg style="position:absolute;left:1760px;top:81px;" width="159" height="114" viewBox="1760 81 159 114"><path d="M1843 104 L1846.5 101 L1850 104" fill="none" stroke="#444" stroke-width="1.1"/><path d="M1843 113 L1846.5 116 L1850 113" fill="none" stroke="#444" stroke-width="1.1"/><path d="M1843 143 L1846.5 140 L1850 143" fill="none" stroke="#444" stroke-width="1.1"/><path d="M1843 152 L1846.5 155 L1850 152" fill="none" stroke="#444" stroke-width="1.1"/></svg><div class="t" style="left:1723.00px;top:178.40px;font-size:13px;line-height:13px;color:#1E1E1E;font-weight:normal;transform:scaleX(0.8934);transform-origin:0 0;">Size</div><div style="position:absolute;left:0px;top:196px;width:291px;height:794px;background:#E6E6E6;"></div><div style="position:absolute;left:291px;top:196px;width:1609px;height:794px;background:#E6E6E6;"></div><div style="position:absolute;left:44px;top:196px;width:196px;height:74px;background:#fff;border:1px solid #C8C8C8;border-top:none"></div><div class="t" style="left:89.50px;top:205.76px;font-size:9.5px;line-height:9.5px;color:#0A0A0A;font-weight:bold;transform:scaleX(0.5123);transform-origin:0 0;-webkit-text-stroke:0.2px #0A0A0A;">Professional Presentations in Seconds with AI</div><div class="u" style="left:71.00px;top:217.57px;font-size:5px;line-height:5px;color:#4A4A4A;font-weight:normal;transform:scaleX(0.9700);transform-origin:0 0;">Never start from a blank slide again.</div><div class="u" style="left:71.00px;top:225.57px;font-size:5px;line-height:5px;color:#4A4A4A;font-weight:normal;transform:scaleX(0.9700);transform-origin:0 0;">• Create presentation from text, YouTube, pdf</div><div class="u" style="left:71.00px;top:230.47px;font-size:5px;line-height:5px;color:#4A4A4A;font-weight:normal;transform:scaleX(0.9700);transform-origin:0 0;">• No Credit Card Required</div><div class="u" style="left:71.00px;top:236.47px;font-size:5px;line-height:5px;color:#4A4A4A;font-weight:normal;transform:scaleX(0.9700);transform-origin:0 0;">• No need to learn</div><div class="u" style="left:111.00px;top:236.47px;font-size:5px;line-height:5px;color:#2F55B0;font-weight:normal;transform:scaleX(0.9700);transform-origin:0 0;text-decoration:underline;">new tool.</div><div style="position:absolute;left:44px;top:297px;width:196px;height:109px;background:#fff;border:1px solid #C8C8C8"></div><svg style="position:absolute;left:189px;top:305px;" width="6" height="7" viewBox="0 0 6 7"><rect x="0.5" y="0.8" width="4.2" height="3.4" fill="#111"/><path d="M1.8 4.2 L1.4 6 M2.6 4.2 V6 M3.4 4.2 L3.8 6" stroke="#111" stroke-width="0.5"/></svg><div class="u" style="left:194.5px;top:305.2px;font-size:4.4px;line-height:4.4px;font-weight:bold;color:#222;transform:scaleX(0.78);transform-origin:0 0">MagicSlides</div><svg style="position:absolute;left:105px;top:331px;" width="73" height="49" viewBox="0 0 73 49"><defs><linearGradient id="g5" x1="0" y1="0" x2="0" y2="1"><stop offset="0" stop-color="#909090"/><stop offset="0.3" stop-color="#BDBDBD"/><stop offset="1" stop-color="#D2D2D2"/></linearGradient><filter id="fb5"><feGaussianBlur stdDeviation="1.2"/></filter><linearGradient id="o5" x1="0" y1="0" x2="0" y2="1"><stop offset="0" stop-color="#8C8A40"/><stop offset="0.5" stop-color="#A8864A"/><stop offset="1" stop-color="#B08040"/></linearGradient></defs><rect width="73" height="49" fill="url(#g5)"/><g filter="url(#fb5)"><ellipse cx="62" cy="8" rx="10" ry="6" fill="#707070"/><ellipse cx="15" cy="10" rx="14" ry="4" fill="#9a9a9a"/><ellipse cx="50" cy="30" rx="12" ry="5" fill="#DADADA"/><ellipse cx="20" cy="38" rx="12" ry="5" fill="#C4C4C4"/></g><rect x="26" y="5" width="25" height="22" fill="url(#o5)"/><path d="M35 5 Q34 14 38 18 M46 6 Q47 13 42 18" stroke="#6A4A2A" stroke-width="1.2" fill="none"/><rect x="40" y="17" width="4" height="8" fill="#C8A070"/><path d="M9 30 Q14 24 26 24 L43 25 L38 31 L34 34 L31 46 L29 46 L28 36 L17 35 L14 44 L12 44 L12 34 Q8 33 9 30Z" fill="#3A3A3A" filter="url(#fb5)"/></svg><div style="position:absolute;left:44px;top:434px;width:196px;height:109px;background:#fff;border:1px solid #C8C8C8"></div><svg style="position:absolute;left:11px;top:451px;" width="16" height="14" viewBox="0 0 16 14"><path d="M9 0.5 L10.9 4.9 L15.5 5.2 L12 8.2 L13.1 12.8 L9 10.3 L4.9 12.8 L6 8.2 L2.5 5.2 L7.1 4.9 Z" fill="#595959"/><path d="M0.5 5.5 H2 M0.5 8 H2.5 M1 10.5 H3" stroke="#777" stroke-width="0.9"/></svg><svg style="position:absolute;left:189px;top:442px;" width="6" height="7" viewBox="0 0 6 7"><rect x="0.5" y="0.8" width="4.2" height="3.4" fill="#111"/><path d="M1.8 4.2 L1.4 6 M2.6 4.2 V6 M3.4 4.2 L3.8 6" stroke="#111" stroke-width="0.5"/></svg><div class="u" style="left:194.5px;top:442.2px;font-size:4.4px;line-height:4.4px;font-weight:bold;color:#222;transform:scaleX(0.78);transform-origin:0 0">MagicSlides</div><svg style="position:absolute;left:109px;top:467px;" width="68" height="45" viewBox="0 0 68 45"><defs><linearGradient id="g6" x1="0" y1="0" x2="0" y2="1"><stop offset="0" stop-color="#7A6E34"/><stop offset="0.3" stop-color="#9A8A48"/><stop offset="0.55" stop-color="#B8925A"/><stop offset="1" stop-color="#BE9456"/></linearGradient><filter id="fb6"><feGaussianBlur stdDeviation="1.3"/></filter></defs><rect width="68" height="45" fill="url(#g6)"/><g filter="url(#fb6)"><ellipse cx="60" cy="6" rx="9" ry="6" fill="#4E7A2A"/><ellipse cx="52" cy="16" rx="10" ry="4" fill="#7A9A40"/><ellipse cx="30" cy="12" rx="10" ry="3" fill="#8A9A45"/><ellipse cx="50" cy="6" rx="8" ry="4" fill="#8A6A38"/></g><path d="M31 22 Q29 14 33 6 M37 22 Q40 14 38 7" stroke="#6A4A2A" stroke-width="1" fill="none"/><path d="M12 23 Q18 20 30 21 L34 19 L37 21 L36 26 L32 30 L31 42 L29 42 L28 31 L18 31 L15 40 L13 40 L13 30 Q10 28 12 23Z" fill="#6B3A18" filter="url(#fb6)"/><rect x="33" y="18" width="3" height="6" fill="#D8B890" filter="url(#fb6)"/></svg><div style="position:absolute;left:41px;top:567px;width:204px;height:118px;background:#C43E1C;"></div><div style="position:absolute;left:44px;top:570px;width:198px;height:112px;background:#fff;"></div><svg style="position:absolute;left:190px;top:578px;" width="6" height="7" viewBox="0 0 6 7"><rect x="0.5" y="0.8" width="4.2" height="3.4" fill="#111"/><path d="M1.8 4.2 L1.4 6 M2.6 4.2 V6 M3.4 4.2 L3.8 6" stroke="#111" stroke-width="0.5"/></svg><div class="u" style="left:195.5px;top:578.2px;font-size:4.4px;line-height:4.4px;font-weight:bold;color:#222;transform:scaleX(0.78);transform-origin:0 0">MagicSlides</div><div style="position:absolute;left:176px;top:590px;width:1.5px;height:3px;background:#6a6aa0;"></div><svg style="position:absolute;left:90px;top:606px" width="106" height="40" viewBox="731 451 731 282" preserveAspectRatio="none"><defs><filter id="tblur6" x="-50%" y="-50%" width="200%" height="200%"><feGaussianBlur stdDeviation="6"/></filter><filter id="tblur3" x="-50%" y="-50%" width="200%" height="200%"><feGaussianBlur stdDeviation="3"/></filter><filter id="tblur10" x="-50%" y="-50%" width="200%" height="200%"><feGaussianBlur stdDeviation="10"/></filter><clipPath id="tpicclip"><rect x="731" y="451" width="731" height="282"/></clipPath></defs><g clip-path="url(#tpicclip)"><rect x="731" y="451" width="731" height="282" fill="#FCFCFC"/><g filter="url(#tblur6)" opacity="0.75"><polygon points="795,565.872 1440,454.932 1440,466.932 795,579.872" fill="#B8B0F4"/><rect x="862" y="570" width="240" height="50" rx="25" transform="rotate(-9.3 982 595)" fill="#A09CF2"/><rect x="1114" y="516" width="190" height="86" rx="14" fill="#9EEFF2"/><rect x="972" y="622" width="240" height="30" rx="8" fill="#F8B27A"/><ellipse cx="920" cy="648" rx="48" ry="12" fill="#B5AEF2"/><ellipse cx="1252" cy="637" rx="42" ry="13" fill="#B5AEF2"/><ellipse cx="925" cy="705" rx="28" ry="14" fill="#F5B5E8"/><ellipse cx="1252" cy="705" rx="28" ry="14" fill="#F5B5E8"/><rect x="1385" y="606" width="38" height="130" rx="12" fill="#B0AAF2"/><rect x="1338" y="690" width="28" height="50" rx="8" fill="#F5A8E0"/><ellipse cx="1310" cy="735" rx="18" ry="14" fill="#B5AEF2"/></g><circle cx="1379" cy="556" r="60" fill="#CACACA" filter="url(#tblur10)" opacity="0.9"/><polygon points="731,451 1445,451 1445,452.1 771,562.0 771,546 731,552.5" fill="#9A9A9A"/><polygon points="771,540.0 1296,450 1445,450 1445,452.1 771,564.0" fill="#D9A31A" filter="url(#tblur3)" opacity="0.8"/><polygon points="771,543.0 1296,451 1445,451 1445,452.1 771,568.0" fill="#E0A400"/><rect x="773" y="567.0" width="22" height="166.0" fill="#9A9A9A"/><rect x="773" y="701" width="36" height="33" fill="#6AA84F"/><rect x="970" y="654" width="241" height="80" fill="#9A9A9A"/><rect x="1437" y="451" width="26" height="282" fill="#DADADA"/><path d="M732.7 451 V733" stroke="#000" stroke-opacity="0.12" stroke-width="1.7"/><path d="M753.0 451 V733" stroke="#000" stroke-opacity="0.33" stroke-width="2"/><path d="M773.3 451 V733" stroke="#000" stroke-opacity="0.12" stroke-width="1.7"/><path d="M793.5 451 V733" stroke="#000" stroke-opacity="0.33" stroke-width="2"/><path d="M813.8 451 V733" stroke="#000" stroke-opacity="0.12" stroke-width="1.7"/><path d="M834.1 451 V733" stroke="#000" stroke-opacity="0.33" stroke-width="2"/><path d="M854.3 451 V733" stroke="#000" stroke-opacity="0.12" stroke-width="1.7"/><path d="M874.6 451 V733" stroke="#000" stroke-opacity="0.33" stroke-width="2"/><path d="M894.9 451 V733" stroke="#000" stroke-opacity="0.12" stroke-width="1.7"/><path d="M915.2 451 V733" stroke="#000" stroke-opacity="0.33" stroke-width="2"/><path d="M935.4 451 V733" stroke="#000" stroke-opacity="0.12" stroke-width="1.7"/><path d="M955.7 451 V733" stroke="#000" stroke-opacity="0.33" stroke-width="2"/><path d="M976.0 451 V733" stroke="#000" stroke-opacity="0.12" stroke-width="1.7"/><path d="M996.2 451 V733" stroke="#000" stroke-opacity="0.33" stroke-width="2"/><path d="M1016.5 451 V733" stroke="#000" stroke-opacity="0.12" stroke-width="1.7"/><path d="M1036.8 451 V733" stroke="#000" stroke-opacity="0.33" stroke-width="2"/><path d="M1057.0 451 V733" stroke="#000" stroke-opacity="0.12" stroke-width="1.7"/><path d="M1077.3 451 V733" stroke="#000" stroke-opacity="0.33" stroke-width="2"/><path d="M1097.6 451 V733" stroke="#000" stroke-opacity="0.12" stroke-width="1.7"/><path d="M1117.9 451 V733" stroke="#000" stroke-opacity="0.33" stroke-width="2"/><path d="M1138.1 451 V733" stroke="#000" stroke-opacity="0.12" stroke-width="1.7"/><path d="M1158.4 451 V733" stroke="#000" stroke-opacity="0.33" stroke-width="2"/><path d="M1178.7 451 V733" stroke="#000" stroke-opacity="0.12" stroke-width="1.7"/><path d="M1198.9 451 V733" stroke="#000" stroke-opacity="0.33" stroke-width="2"/><path d="M1219.2 451 V733" stroke="#000" stroke-opacity="0.12" stroke-width="1.7"/><path d="M1239.5 451 V733" stroke="#000" stroke-opacity="0.33" stroke-width="2"/><path d="M1259.7 451 V733" stroke="#000" stroke-opacity="0.12" stroke-width="1.7"/><path d="M1280.0 451 V733" stroke="#000" stroke-opacity="0.33" stroke-width="2"/><path d="M1300.3 451 V733" stroke="#000" stroke-opacity="0.12" stroke-width="1.7"/><path d="M1320.6 451 V733" stroke="#000" stroke-opacity="0.33" stroke-width="2"/><path d="M1340.8 451 V733" stroke="#000" stroke-opacity="0.12" stroke-width="1.7"/><path d="M1361.1 451 V733" stroke="#000" stroke-opacity="0.33" stroke-width="2"/><path d="M1381.4 451 V733" stroke="#000" stroke-opacity="0.12" stroke-width="1.7"/><path d="M1401.6 451 V733" stroke="#000" stroke-opacity="0.33" stroke-width="2"/><path d="M1421.9 451 V733" stroke="#000" stroke-opacity="0.12" stroke-width="1.7"/><path d="M731 454.4 H1446" stroke="#000" stroke-opacity="0.12" stroke-width="1.7"/><path d="M731 474.7 H1450" stroke="#000" stroke-opacity="0.33" stroke-width="2"/><path d="M731 495.0 H1446" stroke="#000" stroke-opacity="0.12" stroke-width="1.7"/><path d="M731 515.2 H1450" stroke="#000" stroke-opacity="0.33" stroke-width="2"/><path d="M731 535.5 H1446" stroke="#000" stroke-opacity="0.12" stroke-width="1.7"/><path d="M731 555.8 H1450" stroke="#000" stroke-opacity="0.33" stroke-width="2"/><path d="M731 576.0 H1446" stroke="#000" stroke-opacity="0.12" stroke-width="1.7"/><path d="M731 596.3 H1450" stroke="#000" stroke-opacity="0.33" stroke-width="2"/><path d="M731 616.6 H1446" stroke="#000" stroke-opacity="0.12" stroke-width="1.7"/><path d="M731 636.9 H1450" stroke="#000" stroke-opacity="0.33" stroke-width="2"/><path d="M731 657.1 H1446" stroke="#000" stroke-opacity="0.12" stroke-width="1.7"/><path d="M731 677.4 H1450" stroke="#000" stroke-opacity="0.33" stroke-width="2"/><path d="M731 697.7 H1446" stroke="#000" stroke-opacity="0.12" stroke-width="1.7"/><path d="M731 717.9 H1450" stroke="#000" stroke-opacity="0.33" stroke-width="2"/><path d="M1431 604 V733 M1313.5 628 V733" stroke="#777" stroke-width="1"/><path d="M733 578.5 L742 568.5 L744 580.5 Z" fill="#1F6A3A" stroke="#0B2A14" stroke-width="0.6"/><path d="M733 598.9 L742 588.9 L744 600.9 Z" fill="#1F6A3A" stroke="#0B2A14" stroke-width="0.6"/><path d="M733 619.3 L742 609.3 L744 621.3 Z" fill="#1F6A3A" stroke="#0B2A14" stroke-width="0.6"/><path d="M733 639.7 L742 629.7 L744 641.7 Z" fill="#1F6A3A" stroke="#0B2A14" stroke-width="0.6"/><path d="M733 660.1 L742 650.1 L744 662.1 Z" fill="#1F6A3A" stroke="#0B2A14" stroke-width="0.6"/><path d="M733 680.5 L742 670.5 L744 682.5 Z" fill="#1F6A3A" stroke="#0B2A14" stroke-width="0.6"/><path d="M733 700.9 L742 690.9 L744 702.9 Z" fill="#1F6A3A" stroke="#0B2A14" stroke-width="0.6"/><path d="M733 721.3 L742 711.3 L744 723.3 Z" fill="#1F6A3A" stroke="#0B2A14" stroke-width="0.6"/><path d="M733 741.7 L742 731.7 L744 743.7 Z" fill="#1F6A3A" stroke="#0B2A14" stroke-width="0.6"/><ellipse cx="762.0" cy="570.5" rx="3.6" ry="2.2" transform="rotate(0,762.0,570.5)" fill="#F2B71B" stroke="#A87400" stroke-width="0.5"/><ellipse cx="761.1" cy="574.0" rx="3.6" ry="2.2" transform="rotate(30,761.1,574.0)" fill="#F2B71B" stroke="#A87400" stroke-width="0.5"/><ellipse cx="758.5" cy="576.6" rx="3.6" ry="2.2" transform="rotate(60,758.5,576.6)" fill="#F2B71B" stroke="#A87400" stroke-width="0.5"/><ellipse cx="755.0" cy="577.5" rx="3.6" ry="2.2" transform="rotate(90,755.0,577.5)" fill="#F2B71B" stroke="#A87400" stroke-width="0.5"/><ellipse cx="751.5" cy="576.6" rx="3.6" ry="2.2" transform="rotate(120,751.5,576.6)" fill="#F2B71B" stroke="#A87400" stroke-width="0.5"/><ellipse cx="748.9" cy="574.0" rx="3.6" ry="2.2" transform="rotate(150,748.9,574.0)" fill="#F2B71B" stroke="#A87400" stroke-width="0.5"/><ellipse cx="748.0" cy="570.5" rx="3.6" ry="2.2" transform="rotate(180,748.0,570.5)" fill="#F2B71B" stroke="#A87400" stroke-width="0.5"/><ellipse cx="748.9" cy="567.0" rx="3.6" ry="2.2" transform="rotate(210,748.9,567.0)" fill="#F2B71B" stroke="#A87400" stroke-width="0.5"/><ellipse cx="751.5" cy="564.4" rx="3.6" ry="2.2" transform="rotate(240,751.5,564.4)" fill="#F2B71B" stroke="#A87400" stroke-width="0.5"/><ellipse cx="755.0" cy="563.5" rx="3.6" ry="2.2" transform="rotate(270,755.0,563.5)" fill="#F2B71B" stroke="#A87400" stroke-width="0.5"/><ellipse cx="758.5" cy="564.4" rx="3.6" ry="2.2" transform="rotate(300,758.5,564.4)" fill="#F2B71B" stroke="#A87400" stroke-width="0.5"/><ellipse cx="761.1" cy="567.0" rx="3.6" ry="2.2" transform="rotate(330,761.1,567.0)" fill="#F2B71B" stroke="#A87400" stroke-width="0.5"/><circle cx="755" cy="570.5" r="4.8" fill="#7A4A10"/><ellipse cx="762.0" cy="590.9" rx="3.6" ry="2.2" transform="rotate(0,762.0,590.9)" fill="#F2B71B" stroke="#A87400" stroke-width="0.5"/><ellipse cx="761.1" cy="594.4" rx="3.6" ry="2.2" transform="rotate(30,761.1,594.4)" fill="#F2B71B" stroke="#A87400" stroke-width="0.5"/><ellipse cx="758.5" cy="597.0" rx="3.6" ry="2.2" transform="rotate(60,758.5,597.0)" fill="#F2B71B" stroke="#A87400" stroke-width="0.5"/><ellipse cx="755.0" cy="597.9" rx="3.6" ry="2.2" transform="rotate(90,755.0,597.9)" fill="#F2B71B" stroke="#A87400" stroke-width="0.5"/><ellipse cx="751.5" cy="597.0" rx="3.6" ry="2.2" transform="rotate(120,751.5,597.0)" fill="#F2B71B" stroke="#A87400" stroke-width="0.5"/><ellipse cx="748.9" cy="594.4" rx="3.6" ry="2.2" transform="rotate(150,748.9,594.4)" fill="#F2B71B" stroke="#A87400" stroke-width="0.5"/><ellipse cx="748.0" cy="590.9" rx="3.6" ry="2.2" transform="rotate(180,748.0,590.9)" fill="#F2B71B" stroke="#A87400" stroke-width="0.5"/><ellipse cx="748.9" cy="587.4" rx="3.6" ry="2.2" transform="rotate(210,748.9,587.4)" fill="#F2B71B" stroke="#A87400" stroke-width="0.5"/><ellipse cx="751.5" cy="584.8" rx="3.6" ry="2.2" transform="rotate(240,751.5,584.8)" fill="#F2B71B" stroke="#A87400" stroke-width="0.5"/><ellipse cx="755.0" cy="583.9" rx="3.6" ry="2.2" transform="rotate(270,755.0,583.9)" fill="#F2B71B" stroke="#A87400" stroke-width="0.5"/><ellipse cx="758.5" cy="584.8" rx="3.6" ry="2.2" transform="rotate(300,758.5,584.8)" fill="#F2B71B" stroke="#A87400" stroke-width="0.5"/><ellipse cx="761.1" cy="587.4" rx="3.6" ry="2.2" transform="rotate(330,761.1,587.4)" fill="#F2B71B" stroke="#A87400" stroke-width="0.5"/><circle cx="755" cy="590.9" r="4.8" fill="#7A4A10"/><ellipse cx="762.0" cy="611.3" rx="3.6" ry="2.2" transform="rotate(0,762.0,611.3)" fill="#F2B71B" stroke="#A87400" stroke-width="0.5"/><ellipse cx="761.1" cy="614.8" rx="3.6" ry="2.2" transform="rotate(30,761.1,614.8)" fill="#F2B71B" stroke="#A87400" stroke-width="0.5"/><ellipse cx="758.5" cy="617.4" rx="3.6" ry="2.2" transform="rotate(60,758.5,617.4)" fill="#F2B71B" stroke="#A87400" stroke-width="0.5"/><ellipse cx="755.0" cy="618.3" rx="3.6" ry="2.2" transform="rotate(90,755.0,618.3)" fill="#F2B71B" stroke="#A87400" stroke-width="0.5"/><ellipse cx="751.5" cy="617.4" rx="3.6" ry="2.2" transform="rotate(120,751.5,617.4)" fill="#F2B71B" stroke="#A87400" stroke-width="0.5"/><ellipse cx="748.9" cy="614.8" rx="3.6" ry="2.2" transform="rotate(150,748.9,614.8)" fill="#F2B71B" stroke="#A87400" stroke-width="0.5"/><ellipse cx="748.0" cy="611.3" rx="3.6" ry="2.2" transform="rotate(180,748.0,611.3)" fill="#F2B71B" stroke="#A87400" stroke-width="0.5"/><ellipse cx="748.9" cy="607.8" rx="3.6" ry="2.2" transform="rotate(210,748.9,607.8)" fill="#F2B71B" stroke="#A87400" stroke-width="0.5"/><ellipse cx="751.5" cy="605.2" rx="3.6" ry="2.2" transform="rotate(240,751.5,605.2)" fill="#F2B71B" stroke="#A87400" stroke-width="0.5"/><ellipse cx="755.0" cy="604.3" rx="3.6" ry="2.2" transform="rotate(270,755.0,604.3)" fill="#F2B71B" stroke="#A87400" stroke-width="0.5"/><ellipse cx="758.5" cy="605.2" rx="3.6" ry="2.2" transform="rotate(300,758.5,605.2)" fill="#F2B71B" stroke="#A87400" stroke-width="0.5"/><ellipse cx="761.1" cy="607.8" rx="3.6" ry="2.2" transform="rotate(330,761.1,607.8)" fill="#F2B71B" stroke="#A87400" stroke-width="0.5"/><circle cx="755" cy="611.3" r="4.8" fill="#7A4A10"/><ellipse cx="762.0" cy="631.7" rx="3.6" ry="2.2" transform="rotate(0,762.0,631.7)" fill="#F2B71B" stroke="#A87400" stroke-width="0.5"/><ellipse cx="761.1" cy="635.2" rx="3.6" ry="2.2" transform="rotate(30,761.1,635.2)" fill="#F2B71B" stroke="#A87400" stroke-width="0.5"/><ellipse cx="758.5" cy="637.8" rx="3.6" ry="2.2" transform="rotate(60,758.5,637.8)" fill="#F2B71B" stroke="#A87400" stroke-width="0.5"/><ellipse cx="755.0" cy="638.7" rx="3.6" ry="2.2" transform="rotate(90,755.0,638.7)" fill="#F2B71B" stroke="#A87400" stroke-width="0.5"/><ellipse cx="751.5" cy="637.8" rx="3.6" ry="2.2" transform="rotate(120,751.5,637.8)" fill="#F2B71B" stroke="#A87400" stroke-width="0.5"/><ellipse cx="748.9" cy="635.2" rx="3.6" ry="2.2" transform="rotate(150,748.9,635.2)" fill="#F2B71B" stroke="#A87400" stroke-width="0.5"/><ellipse cx="748.0" cy="631.7" rx="3.6" ry="2.2" transform="rotate(180,748.0,631.7)" fill="#F2B71B" stroke="#A87400" stroke-width="0.5"/><ellipse cx="748.9" cy="628.2" rx="3.6" ry="2.2" transform="rotate(210,748.9,628.2)" fill="#F2B71B" stroke="#A87400" stroke-width="0.5"/><ellipse cx="751.5" cy="625.6" rx="3.6" ry="2.2" transform="rotate(240,751.5,625.6)" fill="#F2B71B" stroke="#A87400" stroke-width="0.5"/><ellipse cx="755.0" cy="624.7" rx="3.6" ry="2.2" transform="rotate(270,755.0,624.7)" fill="#F2B71B" stroke="#A87400" stroke-width="0.5"/><ellipse cx="758.5" cy="625.6" rx="3.6" ry="2.2" transform="rotate(300,758.5,625.6)" fill="#F2B71B" stroke="#A87400" stroke-width="0.5"/><ellipse cx="761.1" cy="628.2" rx="3.6" ry="2.2" transform="rotate(330,761.1,628.2)" fill="#F2B71B" stroke="#A87400" stroke-width="0.5"/><circle cx="755" cy="631.7" r="4.8" fill="#7A4A10"/><ellipse cx="762.0" cy="652.1" rx="3.6" ry="2.2" transform="rotate(0,762.0,652.1)" fill="#F2B71B" stroke="#A87400" stroke-width="0.5"/><ellipse cx="761.1" cy="655.6" rx="3.6" ry="2.2" transform="rotate(30,761.1,655.6)" fill="#F2B71B" stroke="#A87400" stroke-width="0.5"/><ellipse cx="758.5" cy="658.2" rx="3.6" ry="2.2" transform="rotate(60,758.5,658.2)" fill="#F2B71B" stroke="#A87400" stroke-width="0.5"/><ellipse cx="755.0" cy="659.1" rx="3.6" ry="2.2" transform="rotate(90,755.0,659.1)" fill="#F2B71B" stroke="#A87400" stroke-width="0.5"/><ellipse cx="751.5" cy="658.2" rx="3.6" ry="2.2" transform="rotate(120,751.5,658.2)" fill="#F2B71B" stroke="#A87400" stroke-width="0.5"/><ellipse cx="748.9" cy="655.6" rx="3.6" ry="2.2" transform="rotate(150,748.9,655.6)" fill="#F2B71B" stroke="#A87400" stroke-width="0.5"/><ellipse cx="748.0" cy="652.1" rx="3.6" ry="2.2" transform="rotate(180,748.0,652.1)" fill="#F2B71B" stroke="#A87400" stroke-width="0.5"/><ellipse cx="748.9" cy="648.6" rx="3.6" ry="2.2" transform="rotate(210,748.9,648.6)" fill="#F2B71B" stroke="#A87400" stroke-width="0.5"/><ellipse cx="751.5" cy="646.0" rx="3.6" ry="2.2" transform="rotate(240,751.5,646.0)" fill="#F2B71B" stroke="#A87400" stroke-width="0.5"/><ellipse cx="755.0" cy="645.1" rx="3.6" ry="2.2" transform="rotate(270,755.0,645.1)" fill="#F2B71B" stroke="#A87400" stroke-width="0.5"/><ellipse cx="758.5" cy="646.0" rx="3.6" ry="2.2" transform="rotate(300,758.5,646.0)" fill="#F2B71B" stroke="#A87400" stroke-width="0.5"/><ellipse cx="761.1" cy="648.6" rx="3.6" ry="2.2" transform="rotate(330,761.1,648.6)" fill="#F2B71B" stroke="#A87400" stroke-width="0.5"/><circle cx="755" cy="652.1" r="4.8" fill="#7A4A10"/><ellipse cx="762.0" cy="672.5" rx="3.6" ry="2.2" transform="rotate(0,762.0,672.5)" fill="#F2B71B" stroke="#A87400" stroke-width="0.5"/><ellipse cx="761.1" cy="676.0" rx="3.6" ry="2.2" transform="rotate(30,761.1,676.0)" fill="#F2B71B" stroke="#A87400" stroke-width="0.5"/><ellipse cx="758.5" cy="678.6" rx="3.6" ry="2.2" transform="rotate(60,758.5,678.6)" fill="#F2B71B" stroke="#A87400" stroke-width="0.5"/><ellipse cx="755.0" cy="679.5" rx="3.6" ry="2.2" transform="rotate(90,755.0,679.5)" fill="#F2B71B" stroke="#A87400" stroke-width="0.5"/><ellipse cx="751.5" cy="678.6" rx="3.6" ry="2.2" transform="rotate(120,751.5,678.6)" fill="#F2B71B" stroke="#A87400" stroke-width="0.5"/><ellipse cx="748.9" cy="676.0" rx="3.6" ry="2.2" transform="rotate(150,748.9,676.0)" fill="#F2B71B" stroke="#A87400" stroke-width="0.5"/><ellipse cx="748.0" cy="672.5" rx="3.6" ry="2.2" transform="rotate(180,748.0,672.5)" fill="#F2B71B" stroke="#A87400" stroke-width="0.5"/><ellipse cx="748.9" cy="669.0" rx="3.6" ry="2.2" transform="rotate(210,748.9,669.0)" fill="#F2B71B" stroke="#A87400" stroke-width="0.5"/><ellipse cx="751.5" cy="666.4" rx="3.6" ry="2.2" transform="rotate(240,751.5,666.4)" fill="#F2B71B" stroke="#A87400" stroke-width="0.5"/><ellipse cx="755.0" cy="665.5" rx="3.6" ry="2.2" transform="rotate(270,755.0,665.5)" fill="#F2B71B" stroke="#A87400" stroke-width="0.5"/><ellipse cx="758.5" cy="666.4" rx="3.6" ry="2.2" transform="rotate(300,758.5,666.4)" fill="#F2B71B" stroke="#A87400" stroke-width="0.5"/><ellipse cx="761.1" cy="669.0" rx="3.6" ry="2.2" transform="rotate(330,761.1,669.0)" fill="#F2B71B" stroke="#A87400" stroke-width="0.5"/><circle cx="755" cy="672.5" r="4.8" fill="#7A4A10"/><ellipse cx="762.0" cy="692.9" rx="3.6" ry="2.2" transform="rotate(0,762.0,692.9)" fill="#F2B71B" stroke="#A87400" stroke-width="0.5"/><ellipse cx="761.1" cy="696.4" rx="3.6" ry="2.2" transform="rotate(30,761.1,696.4)" fill="#F2B71B" stroke="#A87400" stroke-width="0.5"/><ellipse cx="758.5" cy="699.0" rx="3.6" ry="2.2" transform="rotate(60,758.5,699.0)" fill="#F2B71B" stroke="#A87400" stroke-width="0.5"/><ellipse cx="755.0" cy="699.9" rx="3.6" ry="2.2" transform="rotate(90,755.0,699.9)" fill="#F2B71B" stroke="#A87400" stroke-width="0.5"/><ellipse cx="751.5" cy="699.0" rx="3.6" ry="2.2" transform="rotate(120,751.5,699.0)" fill="#F2B71B" stroke="#A87400" stroke-width="0.5"/><ellipse cx="748.9" cy="696.4" rx="3.6" ry="2.2" transform="rotate(150,748.9,696.4)" fill="#F2B71B" stroke="#A87400" stroke-width="0.5"/><ellipse cx="748.0" cy="692.9" rx="3.6" ry="2.2" transform="rotate(180,748.0,692.9)" fill="#F2B71B" stroke="#A87400" stroke-width="0.5"/><ellipse cx="748.9" cy="689.4" rx="3.6" ry="2.2" transform="rotate(210,748.9,689.4)" fill="#F2B71B" stroke="#A87400" stroke-width="0.5"/><ellipse cx="751.5" cy="686.8" rx="3.6" ry="2.2" transform="rotate(240,751.5,686.8)" fill="#F2B71B" stroke="#A87400" stroke-width="0.5"/><ellipse cx="755.0" cy="685.9" rx="3.6" ry="2.2" transform="rotate(270,755.0,685.9)" fill="#F2B71B" stroke="#A87400" stroke-width="0.5"/><ellipse cx="758.5" cy="686.8" rx="3.6" ry="2.2" transform="rotate(300,758.5,686.8)" fill="#F2B71B" stroke="#A87400" stroke-width="0.5"/><ellipse cx="761.1" cy="689.4" rx="3.6" ry="2.2" transform="rotate(330,761.1,689.4)" fill="#F2B71B" stroke="#A87400" stroke-width="0.5"/><circle cx="755" cy="692.9" r="4.8" fill="#7A4A10"/><ellipse cx="762.0" cy="713.3" rx="3.6" ry="2.2" transform="rotate(0,762.0,713.3)" fill="#F2B71B" stroke="#A87400" stroke-width="0.5"/><ellipse cx="761.1" cy="716.8" rx="3.6" ry="2.2" transform="rotate(30,761.1,716.8)" fill="#F2B71B" stroke="#A87400" stroke-width="0.5"/><ellipse cx="758.5" cy="719.4" rx="3.6" ry="2.2" transform="rotate(60,758.5,719.4)" fill="#F2B71B" stroke="#A87400" stroke-width="0.5"/><ellipse cx="755.0" cy="720.3" rx="3.6" ry="2.2" transform="rotate(90,755.0,720.3)" fill="#F2B71B" stroke="#A87400" stroke-width="0.5"/><ellipse cx="751.5" cy="719.4" rx="3.6" ry="2.2" transform="rotate(120,751.5,719.4)" fill="#F2B71B" stroke="#A87400" stroke-width="0.5"/><ellipse cx="748.9" cy="716.8" rx="3.6" ry="2.2" transform="rotate(150,748.9,716.8)" fill="#F2B71B" stroke="#A87400" stroke-width="0.5"/><ellipse cx="748.0" cy="713.3" rx="3.6" ry="2.2" transform="rotate(180,748.0,713.3)" fill="#F2B71B" stroke="#A87400" stroke-width="0.5"/><ellipse cx="748.9" cy="709.8" rx="3.6" ry="2.2" transform="rotate(210,748.9,709.8)" fill="#F2B71B" stroke="#A87400" stroke-width="0.5"/><ellipse cx="751.5" cy="707.2" rx="3.6" ry="2.2" transform="rotate(240,751.5,707.2)" fill="#F2B71B" stroke="#A87400" stroke-width="0.5"/><ellipse cx="755.0" cy="706.3" rx="3.6" ry="2.2" transform="rotate(270,755.0,706.3)" fill="#F2B71B" stroke="#A87400" stroke-width="0.5"/><ellipse cx="758.5" cy="707.2" rx="3.6" ry="2.2" transform="rotate(300,758.5,707.2)" fill="#F2B71B" stroke="#A87400" stroke-width="0.5"/><ellipse cx="761.1" cy="709.8" rx="3.6" ry="2.2" transform="rotate(330,761.1,709.8)" fill="#F2B71B" stroke="#A87400" stroke-width="0.5"/><circle cx="755" cy="713.3" r="4.8" fill="#7A4A10"/><ellipse cx="762.0" cy="733.7" rx="3.6" ry="2.2" transform="rotate(0,762.0,733.7)" fill="#F2B71B" stroke="#A87400" stroke-width="0.5"/><ellipse cx="761.1" cy="737.2" rx="3.6" ry="2.2" transform="rotate(30,761.1,737.2)" fill="#F2B71B" stroke="#A87400" stroke-width="0.5"/><ellipse cx="758.5" cy="739.8" rx="3.6" ry="2.2" transform="rotate(60,758.5,739.8)" fill="#F2B71B" stroke="#A87400" stroke-width="0.5"/><ellipse cx="755.0" cy="740.7" rx="3.6" ry="2.2" transform="rotate(90,755.0,740.7)" fill="#F2B71B" stroke="#A87400" stroke-width="0.5"/><ellipse cx="751.5" cy="739.8" rx="3.6" ry="2.2" transform="rotate(120,751.5,739.8)" fill="#F2B71B" stroke="#A87400" stroke-width="0.5"/><ellipse cx="748.9" cy="737.2" rx="3.6" ry="2.2" transform="rotate(150,748.9,737.2)" fill="#F2B71B" stroke="#A87400" stroke-width="0.5"/><ellipse cx="748.0" cy="733.7" rx="3.6" ry="2.2" transform="rotate(180,748.0,733.7)" fill="#F2B71B" stroke="#A87400" stroke-width="0.5"/><ellipse cx="748.9" cy="730.2" rx="3.6" ry="2.2" transform="rotate(210,748.9,730.2)" fill="#F2B71B" stroke="#A87400" stroke-width="0.5"/><ellipse cx="751.5" cy="727.6" rx="3.6" ry="2.2" transform="rotate(240,751.5,727.6)" fill="#F2B71B" stroke="#A87400" stroke-width="0.5"/><ellipse cx="755.0" cy="726.7" rx="3.6" ry="2.2" transform="rotate(270,755.0,726.7)" fill="#F2B71B" stroke="#A87400" stroke-width="0.5"/><ellipse cx="758.5" cy="727.6" rx="3.6" ry="2.2" transform="rotate(300,758.5,727.6)" fill="#F2B71B" stroke="#A87400" stroke-width="0.5"/><ellipse cx="761.1" cy="730.2" rx="3.6" ry="2.2" transform="rotate(330,761.1,730.2)" fill="#F2B71B" stroke="#A87400" stroke-width="0.5"/><circle cx="755" cy="733.7" r="4.8" fill="#7A4A10"/><g transform="translate(810.0,576.8) rotate(20)"><path d="M0 -11.0 Q4.2 -7.2 7.6 -0.4 A7.6 7.6 0 1 1 -7.6 -0.4 Q-4.2 -7.2 0 -11.0Z" fill="#F0B47C" stroke="#3E2A1E" stroke-width="1.59"/><path d="M-2.6 -12.9 L0 -9.8 L2.6 -13.2" stroke="#4A5060" stroke-width="1.46" fill="none"/></g><g transform="translate(823.3,574.5) rotate(20)"><path d="M0 -11.0 Q4.2 -7.2 7.6 -0.4 A7.6 7.6 0 1 1 -7.6 -0.4 Q-4.2 -7.2 0 -11.0Z" fill="#F0B47C" stroke="#3E2A1E" stroke-width="1.59"/><path d="M-2.6 -12.9 L0 -9.8 L2.6 -13.2" stroke="#4A5060" stroke-width="1.46" fill="none"/></g><g transform="translate(836.7,572.2) rotate(20)"><path d="M0 -11.0 Q4.2 -7.2 7.6 -0.4 A7.6 7.6 0 1 1 -7.6 -0.4 Q-4.2 -7.2 0 -11.0Z" fill="#F0B47C" stroke="#3E2A1E" stroke-width="1.59"/><path d="M-2.6 -12.9 L0 -9.8 L2.6 -13.2" stroke="#4A5060" stroke-width="1.46" fill="none"/></g><g transform="translate(850.0,569.9) rotate(20)"><path d="M0 -11.0 Q4.2 -7.2 7.6 -0.4 A7.6 7.6 0 1 1 -7.6 -0.4 Q-4.2 -7.2 0 -11.0Z" fill="#F0B47C" stroke="#3E2A1E" stroke-width="1.59"/><path d="M-2.6 -12.9 L0 -9.8 L2.6 -13.2" stroke="#4A5060" stroke-width="1.46" fill="none"/></g><g transform="translate(863.3,567.6) rotate(20)"><path d="M0 -11.0 Q4.2 -7.2 7.6 -0.4 A7.6 7.6 0 1 1 -7.6 -0.4 Q-4.2 -7.2 0 -11.0Z" fill="#F0B47C" stroke="#3E2A1E" stroke-width="1.59"/><path d="M-2.6 -12.9 L0 -9.8 L2.6 -13.2" stroke="#4A5060" stroke-width="1.46" fill="none"/></g><g transform="translate(876.6,565.3) rotate(20)"><path d="M0 -11.0 Q4.2 -7.2 7.6 -0.4 A7.6 7.6 0 1 1 -7.6 -0.4 Q-4.2 -7.2 0 -11.0Z" fill="#F0B47C" stroke="#3E2A1E" stroke-width="1.59"/><path d="M-2.6 -12.9 L0 -9.8 L2.6 -13.2" stroke="#4A5060" stroke-width="1.46" fill="none"/></g><g transform="translate(890.0,563.0) rotate(20)"><path d="M0 -11.0 Q4.2 -7.2 7.6 -0.4 A7.6 7.6 0 1 1 -7.6 -0.4 Q-4.2 -7.2 0 -11.0Z" fill="#F0B47C" stroke="#3E2A1E" stroke-width="1.59"/><path d="M-2.6 -12.9 L0 -9.8 L2.6 -13.2" stroke="#4A5060" stroke-width="1.46" fill="none"/></g><g transform="translate(903.3,560.7) rotate(20)"><path d="M0 -11.0 Q4.2 -7.2 7.6 -0.4 A7.6 7.6 0 1 1 -7.6 -0.4 Q-4.2 -7.2 0 -11.0Z" fill="#F0B47C" stroke="#3E2A1E" stroke-width="1.59"/><path d="M-2.6 -12.9 L0 -9.8 L2.6 -13.2" stroke="#4A5060" stroke-width="1.46" fill="none"/></g><g transform="translate(916.6,558.4) rotate(20)"><path d="M0 -11.0 Q4.2 -7.2 7.6 -0.4 A7.6 7.6 0 1 1 -7.6 -0.4 Q-4.2 -7.2 0 -11.0Z" fill="#F0B47C" stroke="#3E2A1E" stroke-width="1.59"/><path d="M-2.6 -12.9 L0 -9.8 L2.6 -13.2" stroke="#4A5060" stroke-width="1.46" fill="none"/></g><g transform="translate(930.0,556.2) rotate(20)"><path d="M0 -11.0 Q4.2 -7.2 7.6 -0.4 A7.6 7.6 0 1 1 -7.6 -0.4 Q-4.2 -7.2 0 -11.0Z" fill="#F0B47C" stroke="#3E2A1E" stroke-width="1.59"/><path d="M-2.6 -12.9 L0 -9.8 L2.6 -13.2" stroke="#4A5060" stroke-width="1.46" fill="none"/></g><g transform="translate(943.3,553.9) rotate(20)"><path d="M0 -11.0 Q4.2 -7.2 7.6 -0.4 A7.6 7.6 0 1 1 -7.6 -0.4 Q-4.2 -7.2 0 -11.0Z" fill="#F0B47C" stroke="#3E2A1E" stroke-width="1.59"/><path d="M-2.6 -12.9 L0 -9.8 L2.6 -13.2" stroke="#4A5060" stroke-width="1.46" fill="none"/></g><g transform="translate(956.6,551.6) rotate(20)"><path d="M0 -11.0 Q4.2 -7.2 7.6 -0.4 A7.6 7.6 0 1 1 -7.6 -0.4 Q-4.2 -7.2 0 -11.0Z" fill="#F0B47C" stroke="#3E2A1E" stroke-width="1.59"/><path d="M-2.6 -12.9 L0 -9.8 L2.6 -13.2" stroke="#4A5060" stroke-width="1.46" fill="none"/></g><g transform="translate(970.0,549.3) rotate(20)"><path d="M0 -11.0 Q4.2 -7.2 7.6 -0.4 A7.6 7.6 0 1 1 -7.6 -0.4 Q-4.2 -7.2 0 -11.0Z" fill="#F0B47C" stroke="#3E2A1E" stroke-width="1.59"/><path d="M-2.6 -12.9 L0 -9.8 L2.6 -13.2" stroke="#4A5060" stroke-width="1.46" fill="none"/></g><g transform="translate(983.3,547.0) rotate(20)"><path d="M0 -11.0 Q4.2 -7.2 7.6 -0.4 A7.6 7.6 0 1 1 -7.6 -0.4 Q-4.2 -7.2 0 -11.0Z" fill="#F0B47C" stroke="#3E2A1E" stroke-width="1.59"/><path d="M-2.6 -12.9 L0 -9.8 L2.6 -13.2" stroke="#4A5060" stroke-width="1.46" fill="none"/></g><g transform="translate(996.6,544.7) rotate(20)"><path d="M0 -11.0 Q4.2 -7.2 7.6 -0.4 A7.6 7.6 0 1 1 -7.6 -0.4 Q-4.2 -7.2 0 -11.0Z" fill="#F0B47C" stroke="#3E2A1E" stroke-width="1.59"/><path d="M-2.6 -12.9 L0 -9.8 L2.6 -13.2" stroke="#4A5060" stroke-width="1.46" fill="none"/></g><g transform="translate(1010.0,542.4) rotate(20)"><path d="M0 -11.0 Q4.2 -7.2 7.6 -0.4 A7.6 7.6 0 1 1 -7.6 -0.4 Q-4.2 -7.2 0 -11.0Z" fill="#F0B47C" stroke="#3E2A1E" stroke-width="1.59"/><path d="M-2.6 -12.9 L0 -9.8 L2.6 -13.2" stroke="#4A5060" stroke-width="1.46" fill="none"/></g><g transform="translate(1023.3,540.1) rotate(20)"><path d="M0 -11.0 Q4.2 -7.2 7.6 -0.4 A7.6 7.6 0 1 1 -7.6 -0.4 Q-4.2 -7.2 0 -11.0Z" fill="#F0B47C" stroke="#3E2A1E" stroke-width="1.59"/><path d="M-2.6 -12.9 L0 -9.8 L2.6 -13.2" stroke="#4A5060" stroke-width="1.46" fill="none"/></g><g transform="translate(1036.6,537.8) rotate(20)"><path d="M0 -11.0 Q4.2 -7.2 7.6 -0.4 A7.6 7.6 0 1 1 -7.6 -0.4 Q-4.2 -7.2 0 -11.0Z" fill="#F0B47C" stroke="#3E2A1E" stroke-width="1.59"/><path d="M-2.6 -12.9 L0 -9.8 L2.6 -13.2" stroke="#4A5060" stroke-width="1.46" fill="none"/></g><g transform="translate(1049.9,535.5) rotate(20)"><path d="M0 -11.0 Q4.2 -7.2 7.6 -0.4 A7.6 7.6 0 1 1 -7.6 -0.4 Q-4.2 -7.2 0 -11.0Z" fill="#F0B47C" stroke="#3E2A1E" stroke-width="1.59"/><path d="M-2.6 -12.9 L0 -9.8 L2.6 -13.2" stroke="#4A5060" stroke-width="1.46" fill="none"/></g><g transform="translate(1063.3,533.2) rotate(20)"><path d="M0 -11.0 Q4.2 -7.2 7.6 -0.4 A7.6 7.6 0 1 1 -7.6 -0.4 Q-4.2 -7.2 0 -11.0Z" fill="#F0B47C" stroke="#3E2A1E" stroke-width="1.59"/><path d="M-2.6 -12.9 L0 -9.8 L2.6 -13.2" stroke="#4A5060" stroke-width="1.46" fill="none"/></g><g transform="translate(1076.6,530.9) rotate(20)"><path d="M0 -11.0 Q4.2 -7.2 7.6 -0.4 A7.6 7.6 0 1 1 -7.6 -0.4 Q-4.2 -7.2 0 -11.0Z" fill="#F0B47C" stroke="#3E2A1E" stroke-width="1.59"/><path d="M-2.6 -12.9 L0 -9.8 L2.6 -13.2" stroke="#4A5060" stroke-width="1.46" fill="none"/></g><g transform="translate(1089.9,528.6) rotate(20)"><path d="M0 -11.0 Q4.2 -7.2 7.6 -0.4 A7.6 7.6 0 1 1 -7.6 -0.4 Q-4.2 -7.2 0 -11.0Z" fill="#F0B47C" stroke="#3E2A1E" stroke-width="1.59"/><path d="M-2.6 -12.9 L0 -9.8 L2.6 -13.2" stroke="#4A5060" stroke-width="1.46" fill="none"/></g><g transform="translate(1103.3,526.4) rotate(20)"><path d="M0 -11.0 Q4.2 -7.2 7.6 -0.4 A7.6 7.6 0 1 1 -7.6 -0.4 Q-4.2 -7.2 0 -11.0Z" fill="#F0B47C" stroke="#3E2A1E" stroke-width="1.59"/><path d="M-2.6 -12.9 L0 -9.8 L2.6 -13.2" stroke="#4A5060" stroke-width="1.46" fill="none"/></g><g transform="translate(1116.6,524.1) rotate(20)"><path d="M0 -11.0 Q4.2 -7.2 7.6 -0.4 A7.6 7.6 0 1 1 -7.6 -0.4 Q-4.2 -7.2 0 -11.0Z" fill="#F0B47C" stroke="#3E2A1E" stroke-width="1.59"/><path d="M-2.6 -12.9 L0 -9.8 L2.6 -13.2" stroke="#4A5060" stroke-width="1.46" fill="none"/></g><g transform="translate(1129.9,521.8) rotate(20)"><path d="M0 -11.0 Q4.2 -7.2 7.6 -0.4 A7.6 7.6 0 1 1 -7.6 -0.4 Q-4.2 -7.2 0 -11.0Z" fill="#F0B47C" stroke="#3E2A1E" stroke-width="1.59"/><path d="M-2.6 -12.9 L0 -9.8 L2.6 -13.2" stroke="#4A5060" stroke-width="1.46" fill="none"/></g><g transform="translate(1143.2,519.5) rotate(20)"><path d="M0 -11.0 Q4.2 -7.2 7.6 -0.4 A7.6 7.6 0 1 1 -7.6 -0.4 Q-4.2 -7.2 0 -11.0Z" fill="#F0B47C" stroke="#3E2A1E" stroke-width="1.59"/><path d="M-2.6 -12.9 L0 -9.8 L2.6 -13.2" stroke="#4A5060" stroke-width="1.46" fill="none"/></g><g transform="translate(1156.6,517.2) rotate(20)"><path d="M0 -11.0 Q4.2 -7.2 7.6 -0.4 A7.6 7.6 0 1 1 -7.6 -0.4 Q-4.2 -7.2 0 -11.0Z" fill="#F0B47C" stroke="#3E2A1E" stroke-width="1.59"/><path d="M-2.6 -12.9 L0 -9.8 L2.6 -13.2" stroke="#4A5060" stroke-width="1.46" fill="none"/></g><g transform="translate(1169.9,514.9) rotate(20)"><path d="M0 -11.0 Q4.2 -7.2 7.6 -0.4 A7.6 7.6 0 1 1 -7.6 -0.4 Q-4.2 -7.2 0 -11.0Z" fill="#F0B47C" stroke="#3E2A1E" stroke-width="1.59"/><path d="M-2.6 -12.9 L0 -9.8 L2.6 -13.2" stroke="#4A5060" stroke-width="1.46" fill="none"/></g><g transform="translate(1183.2,512.6) rotate(20)"><path d="M0 -11.0 Q4.2 -7.2 7.6 -0.4 A7.6 7.6 0 1 1 -7.6 -0.4 Q-4.2 -7.2 0 -11.0Z" fill="#F0B47C" stroke="#3E2A1E" stroke-width="1.59"/><path d="M-2.6 -12.9 L0 -9.8 L2.6 -13.2" stroke="#4A5060" stroke-width="1.46" fill="none"/></g><g transform="translate(1196.6,510.3) rotate(20)"><path d="M0 -11.0 Q4.2 -7.2 7.6 -0.4 A7.6 7.6 0 1 1 -7.6 -0.4 Q-4.2 -7.2 0 -11.0Z" fill="#F0B47C" stroke="#3E2A1E" stroke-width="1.59"/><path d="M-2.6 -12.9 L0 -9.8 L2.6 -13.2" stroke="#4A5060" stroke-width="1.46" fill="none"/></g><g transform="translate(1209.9,508.0) rotate(20)"><path d="M0 -11.0 Q4.2 -7.2 7.6 -0.4 A7.6 7.6 0 1 1 -7.6 -0.4 Q-4.2 -7.2 0 -11.0Z" fill="#F0B47C" stroke="#3E2A1E" stroke-width="1.59"/><path d="M-2.6 -12.9 L0 -9.8 L2.6 -13.2" stroke="#4A5060" stroke-width="1.46" fill="none"/></g><g transform="translate(1223.2,505.7) rotate(20)"><path d="M0 -11.0 Q4.2 -7.2 7.6 -0.4 A7.6 7.6 0 1 1 -7.6 -0.4 Q-4.2 -7.2 0 -11.0Z" fill="#F0B47C" stroke="#3E2A1E" stroke-width="1.59"/><path d="M-2.6 -12.9 L0 -9.8 L2.6 -13.2" stroke="#4A5060" stroke-width="1.46" fill="none"/></g><g transform="translate(1236.6,503.4) rotate(20)"><path d="M0 -11.0 Q4.2 -7.2 7.6 -0.4 A7.6 7.6 0 1 1 -7.6 -0.4 Q-4.2 -7.2 0 -11.0Z" fill="#F0B47C" stroke="#3E2A1E" stroke-width="1.59"/><path d="M-2.6 -12.9 L0 -9.8 L2.6 -13.2" stroke="#4A5060" stroke-width="1.46" fill="none"/></g><g transform="translate(1249.9,501.1) rotate(20)"><path d="M0 -11.0 Q4.2 -7.2 7.6 -0.4 A7.6 7.6 0 1 1 -7.6 -0.4 Q-4.2 -7.2 0 -11.0Z" fill="#F0B47C" stroke="#3E2A1E" stroke-width="1.59"/><path d="M-2.6 -12.9 L0 -9.8 L2.6 -13.2" stroke="#4A5060" stroke-width="1.46" fill="none"/></g><g transform="translate(1263.2,498.8) rotate(20)"><path d="M0 -11.0 Q4.2 -7.2 7.6 -0.4 A7.6 7.6 0 1 1 -7.6 -0.4 Q-4.2 -7.2 0 -11.0Z" fill="#F0B47C" stroke="#3E2A1E" stroke-width="1.59"/><path d="M-2.6 -12.9 L0 -9.8 L2.6 -13.2" stroke="#4A5060" stroke-width="1.46" fill="none"/></g><g transform="translate(1276.5,496.5) rotate(20)"><path d="M0 -11.0 Q4.2 -7.2 7.6 -0.4 A7.6 7.6 0 1 1 -7.6 -0.4 Q-4.2 -7.2 0 -11.0Z" fill="#F0B47C" stroke="#3E2A1E" stroke-width="1.59"/><path d="M-2.6 -12.9 L0 -9.8 L2.6 -13.2" stroke="#4A5060" stroke-width="1.46" fill="none"/></g><g transform="translate(1289.9,494.3) rotate(20)"><path d="M0 -11.0 Q4.2 -7.2 7.6 -0.4 A7.6 7.6 0 1 1 -7.6 -0.4 Q-4.2 -7.2 0 -11.0Z" fill="#F0B47C" stroke="#3E2A1E" stroke-width="1.59"/><path d="M-2.6 -12.9 L0 -9.8 L2.6 -13.2" stroke="#4A5060" stroke-width="1.46" fill="none"/></g><g transform="translate(1303.2,492.0) rotate(20)"><path d="M0 -11.0 Q4.2 -7.2 7.6 -0.4 A7.6 7.6 0 1 1 -7.6 -0.4 Q-4.2 -7.2 0 -11.0Z" fill="#F0B47C" stroke="#3E2A1E" stroke-width="1.59"/><path d="M-2.6 -12.9 L0 -9.8 L2.6 -13.2" stroke="#4A5060" stroke-width="1.46" fill="none"/></g><g transform="translate(1316.5,489.7) rotate(20)"><path d="M0 -11.0 Q4.2 -7.2 7.6 -0.4 A7.6 7.6 0 1 1 -7.6 -0.4 Q-4.2 -7.2 0 -11.0Z" fill="#F0B47C" stroke="#3E2A1E" stroke-width="1.59"/><path d="M-2.6 -12.9 L0 -9.8 L2.6 -13.2" stroke="#4A5060" stroke-width="1.46" fill="none"/></g><g transform="translate(1329.9,487.4) rotate(20)"><path d="M0 -11.0 Q4.2 -7.2 7.6 -0.4 A7.6 7.6 0 1 1 -7.6 -0.4 Q-4.2 -7.2 0 -11.0Z" fill="#F0B47C" stroke="#3E2A1E" stroke-width="1.59"/><path d="M-2.6 -12.9 L0 -9.8 L2.6 -13.2" stroke="#4A5060" stroke-width="1.46" fill="none"/></g><g transform="translate(1343.2,485.1) rotate(20)"><path d="M0 -11.0 Q4.2 -7.2 7.6 -0.4 A7.6 7.6 0 1 1 -7.6 -0.4 Q-4.2 -7.2 0 -11.0Z" fill="#F0B47C" stroke="#3E2A1E" stroke-width="1.59"/><path d="M-2.6 -12.9 L0 -9.8 L2.6 -13.2" stroke="#4A5060" stroke-width="1.46" fill="none"/></g><g transform="translate(1356.5,482.8) rotate(20)"><path d="M0 -11.0 Q4.2 -7.2 7.6 -0.4 A7.6 7.6 0 1 1 -7.6 -0.4 Q-4.2 -7.2 0 -11.0Z" fill="#F0B47C" stroke="#3E2A1E" stroke-width="1.59"/><path d="M-2.6 -12.9 L0 -9.8 L2.6 -13.2" stroke="#4A5060" stroke-width="1.46" fill="none"/></g><g transform="translate(1369.9,480.5) rotate(20)"><path d="M0 -11.0 Q4.2 -7.2 7.6 -0.4 A7.6 7.6 0 1 1 -7.6 -0.4 Q-4.2 -7.2 0 -11.0Z" fill="#F0B47C" stroke="#3E2A1E" stroke-width="1.59"/><path d="M-2.6 -12.9 L0 -9.8 L2.6 -13.2" stroke="#4A5060" stroke-width="1.46" fill="none"/></g><g transform="translate(1383.2,478.2) rotate(20)"><path d="M0 -11.0 Q4.2 -7.2 7.6 -0.4 A7.6 7.6 0 1 1 -7.6 -0.4 Q-4.2 -7.2 0 -11.0Z" fill="#F0B47C" stroke="#3E2A1E" stroke-width="1.59"/><path d="M-2.6 -12.9 L0 -9.8 L2.6 -13.2" stroke="#4A5060" stroke-width="1.46" fill="none"/></g><g transform="translate(1396.5,475.9) rotate(20)"><path d="M0 -11.0 Q4.2 -7.2 7.6 -0.4 A7.6 7.6 0 1 1 -7.6 -0.4 Q-4.2 -7.2 0 -11.0Z" fill="#F0B47C" stroke="#3E2A1E" stroke-width="1.59"/><path d="M-2.6 -12.9 L0 -9.8 L2.6 -13.2" stroke="#4A5060" stroke-width="1.46" fill="none"/></g><g transform="translate(1409.8,473.6) rotate(20)"><path d="M0 -11.0 Q4.2 -7.2 7.6 -0.4 A7.6 7.6 0 1 1 -7.6 -0.4 Q-4.2 -7.2 0 -11.0Z" fill="#F0B47C" stroke="#3E2A1E" stroke-width="1.59"/><path d="M-2.6 -12.9 L0 -9.8 L2.6 -13.2" stroke="#4A5060" stroke-width="1.46" fill="none"/></g><g transform="translate(1423.2,471.3) rotate(20)"><path d="M0 -11.0 Q4.2 -7.2 7.6 -0.4 A7.6 7.6 0 1 1 -7.6 -0.4 Q-4.2 -7.2 0 -11.0Z" fill="#F0B47C" stroke="#3E2A1E" stroke-width="1.59"/><path d="M-2.6 -12.9 L0 -9.8 L2.6 -13.2" stroke="#4A5060" stroke-width="1.46" fill="none"/></g><path d="M878.0 605.0 L877.0 629.0 Q881.0 633.0 885.0 629.0 L884.0 605.0 Z" fill="#F8FCF6" stroke="#2B3A2B" stroke-width="1"/><path d="M880.0 608.0 V626.0" stroke="#8CC08A" stroke-width="1.3"/><path d="M877.0 628.0 Q881.0 635.0 885.0 628.0 L884.5 633.5 Q881.0 636.5 877.5 633.5Z" fill="#333"/><path d="M878.0 607.0 L873.5 595.0 L878.0 598.0 L880.0 591.0 L883.0 598.0 L888.0 594.0 L884.0 607.0 Z" fill="#2F5A2F" stroke="#102010" stroke-width="0.9"/><path d="M880.0 606.0 L880.0 597.0 M882.0 606.0 L884.0 598.0" stroke="#DDEEDD" stroke-width="0.8"/><path d="M898.4 601.7 L897.4 625.7 Q901.4 629.7 905.4 625.7 L904.4 601.7 Z" fill="#F8FCF6" stroke="#2B3A2B" stroke-width="1"/><path d="M900.4 604.7 V622.7" stroke="#8CC08A" stroke-width="1.3"/><path d="M897.4 624.7 Q901.4 631.7 905.4 624.7 L904.9 630.2 Q901.4 633.2 897.9 630.2Z" fill="#333"/><path d="M898.4 603.7 L893.9 591.7 L898.4 594.7 L900.4 587.7 L903.4 594.7 L908.4 590.7 L904.4 603.7 Z" fill="#2F5A2F" stroke="#102010" stroke-width="0.9"/><path d="M900.4 602.7 L900.4 593.7 M902.4 602.7 L904.4 594.7" stroke="#DDEEDD" stroke-width="0.8"/><path d="M918.8 598.4 L917.8 622.4 Q921.8 626.4 925.8 622.4 L924.8 598.4 Z" fill="#F8FCF6" stroke="#2B3A2B" stroke-width="1"/><path d="M920.8 601.4 V619.4" stroke="#8CC08A" stroke-width="1.3"/><path d="M917.8 621.4 Q921.8 628.4 925.8 621.4 L925.3 626.9 Q921.8 629.9 918.3 626.9Z" fill="#333"/><path d="M918.8 600.4 L914.3 588.4 L918.8 591.4 L920.8 584.4 L923.8 591.4 L928.8 587.4 L924.8 600.4 Z" fill="#2F5A2F" stroke="#102010" stroke-width="0.9"/><path d="M920.8 599.4 L920.8 590.4 M922.8 599.4 L924.8 591.4" stroke="#DDEEDD" stroke-width="0.8"/><path d="M939.2 595.1 L938.2 619.1 Q942.2 623.1 946.2 619.1 L945.2 595.1 Z" fill="#F8FCF6" stroke="#2B3A2B" stroke-width="1"/><path d="M941.2 598.1 V616.1" stroke="#8CC08A" stroke-width="1.3"/><path d="M938.2 618.1 Q942.2 625.1 946.2 618.1 L945.7 623.6 Q942.2 626.6 938.7 623.6Z" fill="#333"/><path d="M939.2 597.1 L934.7 585.1 L939.2 588.1 L941.2 581.1 L944.2 588.1 L949.2 584.1 L945.2 597.1 Z" fill="#2F5A2F" stroke="#102010" stroke-width="0.9"/><path d="M941.2 596.1 L941.2 587.1 M943.2 596.1 L945.2 588.1" stroke="#DDEEDD" stroke-width="0.8"/><path d="M959.6 591.8 L958.6 615.8 Q962.6 619.8 966.6 615.8 L965.6 591.8 Z" fill="#F8FCF6" stroke="#2B3A2B" stroke-width="1"/><path d="M961.6 594.8 V612.8" stroke="#8CC08A" stroke-width="1.3"/><path d="M958.6 614.8 Q962.6 621.8 966.6 614.8 L966.1 620.3 Q962.6 623.3 959.1 620.3Z" fill="#333"/><path d="M959.6 593.8 L955.1 581.8 L959.6 584.8 L961.6 577.8 L964.6 584.8 L969.6 580.8 L965.6 593.8 Z" fill="#2F5A2F" stroke="#102010" stroke-width="0.9"/><path d="M961.6 592.8 L961.6 583.8 M963.6 592.8 L965.6 584.8" stroke="#DDEEDD" stroke-width="0.8"/><path d="M980.0 588.5 L979.0 612.5 Q983.0 616.5 987.0 612.5 L986.0 588.5 Z" fill="#F8FCF6" stroke="#2B3A2B" stroke-width="1"/><path d="M982.0 591.5 V609.5" stroke="#8CC08A" stroke-width="1.3"/><path d="M979.0 611.5 Q983.0 618.5 987.0 611.5 L986.5 617.0 Q983.0 620.0 979.5 617.0Z" fill="#333"/><path d="M980.0 590.5 L975.5 578.5 L980.0 581.5 L982.0 574.5 L985.0 581.5 L990.0 577.5 L986.0 590.5 Z" fill="#2F5A2F" stroke="#102010" stroke-width="0.9"/><path d="M982.0 589.5 L982.0 580.5 M984.0 589.5 L986.0 581.5" stroke="#DDEEDD" stroke-width="0.8"/><path d="M1000.4 585.2 L999.4 609.2 Q1003.4 613.2 1007.4 609.2 L1006.4 585.2 Z" fill="#F8FCF6" stroke="#2B3A2B" stroke-width="1"/><path d="M1002.4 588.2 V606.2" stroke="#8CC08A" stroke-width="1.3"/><path d="M999.4 608.2 Q1003.4 615.2 1007.4 608.2 L1006.9 613.7 Q1003.4 616.7 999.9 613.7Z" fill="#333"/><path d="M1000.4 587.2 L995.9 575.2 L1000.4 578.2 L1002.4 571.2 L1005.4 578.2 L1010.4 574.2 L1006.4 587.2 Z" fill="#2F5A2F" stroke="#102010" stroke-width="0.9"/><path d="M1002.4 586.2 L1002.4 577.2 M1004.4 586.2 L1006.4 578.2" stroke="#DDEEDD" stroke-width="0.8"/><path d="M1020.8 581.9 L1019.8 605.9 Q1023.8 609.9 1027.8 605.9 L1026.8 581.9 Z" fill="#F8FCF6" stroke="#2B3A2B" stroke-width="1"/><path d="M1022.8 584.9 V602.9" stroke="#8CC08A" stroke-width="1.3"/><path d="M1019.8 604.9 Q1023.8 611.9 1027.8 604.9 L1027.3 610.4 Q1023.8 613.4 1020.3 610.4Z" fill="#333"/><path d="M1020.8 583.9 L1016.3 571.9 L1020.8 574.9 L1022.8 567.9 L1025.8 574.9 L1030.8 570.9 L1026.8 583.9 Z" fill="#2F5A2F" stroke="#102010" stroke-width="0.9"/><path d="M1022.8 582.9 L1022.8 573.9 M1024.8 582.9 L1026.8 574.9" stroke="#DDEEDD" stroke-width="0.8"/><path d="M1041.2 578.6 L1040.2 602.6 Q1044.2 606.6 1048.2 602.6 L1047.2 578.6 Z" fill="#F8FCF6" stroke="#2B3A2B" stroke-width="1"/><path d="M1043.2 581.6 V599.6" stroke="#8CC08A" stroke-width="1.3"/><path d="M1040.2 601.6 Q1044.2 608.6 1048.2 601.6 L1047.7 607.1 Q1044.2 610.1 1040.7 607.1Z" fill="#333"/><path d="M1041.2 580.6 L1036.7 568.6 L1041.2 571.6 L1043.2 564.6 L1046.2 571.6 L1051.2 567.6 L1047.2 580.6 Z" fill="#2F5A2F" stroke="#102010" stroke-width="0.9"/><path d="M1043.2 579.6 L1043.2 570.6 M1045.2 579.6 L1047.2 571.6" stroke="#DDEEDD" stroke-width="0.8"/><path d="M1061.6 575.3 L1060.6 599.3 Q1064.6 603.3 1068.6 599.3 L1067.6 575.3 Z" fill="#F8FCF6" stroke="#2B3A2B" stroke-width="1"/><path d="M1063.6 578.3 V596.3" stroke="#8CC08A" stroke-width="1.3"/><path d="M1060.6 598.3 Q1064.6 605.3 1068.6 598.3 L1068.1 603.8 Q1064.6 606.8 1061.1 603.8Z" fill="#333"/><path d="M1061.6 577.3 L1057.1 565.3 L1061.6 568.3 L1063.6 561.3 L1066.6 568.3 L1071.6 564.3 L1067.6 577.3 Z" fill="#2F5A2F" stroke="#102010" stroke-width="0.9"/><path d="M1063.6 576.3 L1063.6 567.3 M1065.6 576.3 L1067.6 568.3" stroke="#DDEEDD" stroke-width="0.8"/><path d="M1082.0 572.0 L1081.0 596.0 Q1085.0 600.0 1089.0 596.0 L1088.0 572.0 Z" fill="#F8FCF6" stroke="#2B3A2B" stroke-width="1"/><path d="M1084.0 575.0 V593.0" stroke="#8CC08A" stroke-width="1.3"/><path d="M1081.0 595.0 Q1085.0 602.0 1089.0 595.0 L1088.5 600.5 Q1085.0 603.5 1081.5 600.5Z" fill="#333"/><path d="M1082.0 574.0 L1077.5 562.0 L1082.0 565.0 L1084.0 558.0 L1087.0 565.0 L1092.0 561.0 L1088.0 574.0 Z" fill="#2F5A2F" stroke="#102010" stroke-width="0.9"/><path d="M1084.0 573.0 L1084.0 564.0 M1086.0 573.0 L1088.0 565.0" stroke="#DDEEDD" stroke-width="0.8"/><g transform="translate(887.0,651.0) rotate(0)"><path d="M0 -9.7 Q4.4 -7.7 8.1 -0.4 A8.1 8.1 0 1 1 -8.1 -0.4 Q-4.4 -7.7 0 -9.7Z" fill="#F0B47C" stroke="#3E2A1E" stroke-width="1.69"/><path d="M-2.8 -11.7 L0 -8.5 L2.8 -12.1" stroke="#4A5060" stroke-width="1.56" fill="none"/></g><g transform="translate(904.3,651.0) rotate(0)"><path d="M0 -9.7 Q4.4 -7.7 8.1 -0.4 A8.1 8.1 0 1 1 -8.1 -0.4 Q-4.4 -7.7 0 -9.7Z" fill="#F0B47C" stroke="#3E2A1E" stroke-width="1.69"/><path d="M-2.8 -11.7 L0 -8.5 L2.8 -12.1" stroke="#4A5060" stroke-width="1.56" fill="none"/></g><g transform="translate(921.6,651.0) rotate(0)"><path d="M0 -9.7 Q4.4 -7.7 8.1 -0.4 A8.1 8.1 0 1 1 -8.1 -0.4 Q-4.4 -7.7 0 -9.7Z" fill="#F0B47C" stroke="#3E2A1E" stroke-width="1.69"/><path d="M-2.8 -11.7 L0 -8.5 L2.8 -12.1" stroke="#4A5060" stroke-width="1.56" fill="none"/></g><g transform="translate(938.9,651.0) rotate(0)"><path d="M0 -9.7 Q4.4 -7.7 8.1 -0.4 A8.1 8.1 0 1 1 -8.1 -0.4 Q-4.4 -7.7 0 -9.7Z" fill="#F0B47C" stroke="#3E2A1E" stroke-width="1.69"/><path d="M-2.8 -11.7 L0 -8.5 L2.8 -12.1" stroke="#4A5060" stroke-width="1.56" fill="none"/></g><g transform="translate(956.2,651.0) rotate(0)"><path d="M0 -9.7 Q4.4 -7.7 8.1 -0.4 A8.1 8.1 0 1 1 -8.1 -0.4 Q-4.4 -7.7 0 -9.7Z" fill="#F0B47C" stroke="#3E2A1E" stroke-width="1.69"/><path d="M-2.8 -11.7 L0 -8.5 L2.8 -12.1" stroke="#4A5060" stroke-width="1.56" fill="none"/></g><g transform="translate(1227.0,638.0) rotate(0)"><path d="M0 -9.7 Q4.4 -7.7 8.1 -0.4 A8.1 8.1 0 1 1 -8.1 -0.4 Q-4.4 -7.7 0 -9.7Z" fill="#F0B47C" stroke="#3E2A1E" stroke-width="1.69"/><path d="M-2.8 -11.7 L0 -8.5 L2.8 -12.1" stroke="#4A5060" stroke-width="1.56" fill="none"/></g><g transform="translate(1244.3,638.0) rotate(0)"><path d="M0 -9.7 Q4.4 -7.7 8.1 -0.4 A8.1 8.1 0 1 1 -8.1 -0.4 Q-4.4 -7.7 0 -9.7Z" fill="#F0B47C" stroke="#3E2A1E" stroke-width="1.69"/><path d="M-2.8 -11.7 L0 -8.5 L2.8 -12.1" stroke="#4A5060" stroke-width="1.56" fill="none"/></g><g transform="translate(1261.6,638.0) rotate(0)"><path d="M0 -9.7 Q4.4 -7.7 8.1 -0.4 A8.1 8.1 0 1 1 -8.1 -0.4 Q-4.4 -7.7 0 -9.7Z" fill="#F0B47C" stroke="#3E2A1E" stroke-width="1.69"/><path d="M-2.8 -11.7 L0 -8.5 L2.8 -12.1" stroke="#4A5060" stroke-width="1.56" fill="none"/></g><g transform="translate(1278.9,638.0) rotate(0)"><path d="M0 -9.7 Q4.4 -7.7 8.1 -0.4 A8.1 8.1 0 1 1 -8.1 -0.4 Q-4.4 -7.7 0 -9.7Z" fill="#F0B47C" stroke="#3E2A1E" stroke-width="1.69"/><path d="M-2.8 -11.7 L0 -8.5 L2.8 -12.1" stroke="#4A5060" stroke-width="1.56" fill="none"/></g><g transform="translate(1310.0,728.0) rotate(0)"><path d="M0 -9.9 Q3.8 -6.5 6.8 -0.3 A6.8 6.8 0 1 1 -6.8 -0.3 Q-3.8 -6.5 0 -9.9Z" fill="#F0B47C" stroke="#3E2A1E" stroke-width="1.43"/><path d="M-2.4 -11.6 L0 -8.9 L2.4 -11.9" stroke="#4A5060" stroke-width="1.32" fill="none"/></g><path d="M979.0 632 Q983.0 628.5 987.0 632 Q986.5 643 983.8 653 L982.2 653 Q979.5 643 979.0 632 Z" fill="#F08A3A" stroke="#4A2810" stroke-width="0.9"/><path d="M981.0 637 H983.5 M982.5 642 H985.0" stroke="#8A4A20" stroke-width="0.7"/><path d="M983.0 631 L979.5 624 M983.0 631 L983.5 622.5 M983.0 631 L986.5 624.5" stroke="#1E5A22" stroke-width="1.8"/><path d="M992.5 632 Q996.5 628.5 1000.5 632 Q1000.0 643 997.3 653 L995.7 653 Q993.0 643 992.5 632 Z" fill="#F08A3A" stroke="#4A2810" stroke-width="0.9"/><path d="M994.5 637 H997.0 M996.0 642 H998.5" stroke="#8A4A20" stroke-width="0.7"/><path d="M996.5 631 L993.0 624 M996.5 631 L997.0 622.5 M996.5 631 L1000.0 624.5" stroke="#1E5A22" stroke-width="1.8"/><path d="M1006.0 632 Q1010.0 628.5 1014.0 632 Q1013.5 643 1010.8 653 L1009.2 653 Q1006.5 643 1006.0 632 Z" fill="#F08A3A" stroke="#4A2810" stroke-width="0.9"/><path d="M1008.0 637 H1010.5 M1009.5 642 H1012.0" stroke="#8A4A20" stroke-width="0.7"/><path d="M1010.0 631 L1006.5 624 M1010.0 631 L1010.5 622.5 M1010.0 631 L1013.5 624.5" stroke="#1E5A22" stroke-width="1.8"/><path d="M1019.5 632 Q1023.5 628.5 1027.5 632 Q1027.0 643 1024.3 653 L1022.7 653 Q1020.0 643 1019.5 632 Z" fill="#F08A3A" stroke="#4A2810" stroke-width="0.9"/><path d="M1021.5 637 H1024.0 M1023.0 642 H1025.5" stroke="#8A4A20" stroke-width="0.7"/><path d="M1023.5 631 L1020.0 624 M1023.5 631 L1024.0 622.5 M1023.5 631 L1027.0 624.5" stroke="#1E5A22" stroke-width="1.8"/><path d="M1033.0 632 Q1037.0 628.5 1041.0 632 Q1040.5 643 1037.8 653 L1036.2 653 Q1033.5 643 1033.0 632 Z" fill="#F08A3A" stroke="#4A2810" stroke-width="0.9"/><path d="M1035.0 637 H1037.5 M1036.5 642 H1039.0" stroke="#8A4A20" stroke-width="0.7"/><path d="M1037.0 631 L1033.5 624 M1037.0 631 L1037.5 622.5 M1037.0 631 L1040.5 624.5" stroke="#1E5A22" stroke-width="1.8"/><path d="M1046.5 632 Q1050.5 628.5 1054.5 632 Q1054.0 643 1051.3 653 L1049.7 653 Q1047.0 643 1046.5 632 Z" fill="#F08A3A" stroke="#4A2810" stroke-width="0.9"/><path d="M1048.5 637 H1051.0 M1050.0 642 H1052.5" stroke="#8A4A20" stroke-width="0.7"/><path d="M1050.5 631 L1047.0 624 M1050.5 631 L1051.0 622.5 M1050.5 631 L1054.0 624.5" stroke="#1E5A22" stroke-width="1.8"/><path d="M1060.0 632 Q1064.0 628.5 1068.0 632 Q1067.5 643 1064.8 653 L1063.2 653 Q1060.5 643 1060.0 632 Z" fill="#F08A3A" stroke="#4A2810" stroke-width="0.9"/><path d="M1062.0 637 H1064.5 M1063.5 642 H1066.0" stroke="#8A4A20" stroke-width="0.7"/><path d="M1064.0 631 L1060.5 624 M1064.0 631 L1064.5 622.5 M1064.0 631 L1067.5 624.5" stroke="#1E5A22" stroke-width="1.8"/><path d="M1073.5 632 Q1077.5 628.5 1081.5 632 Q1081.0 643 1078.3 653 L1076.7 653 Q1074.0 643 1073.5 632 Z" fill="#F08A3A" stroke="#4A2810" stroke-width="0.9"/><path d="M1075.5 637 H1078.0 M1077.0 642 H1079.5" stroke="#8A4A20" stroke-width="0.7"/><path d="M1077.5 631 L1074.0 624 M1077.5 631 L1078.0 622.5 M1077.5 631 L1081.0 624.5" stroke="#1E5A22" stroke-width="1.8"/><path d="M1087.0 632 Q1091.0 628.5 1095.0 632 Q1094.5 643 1091.8 653 L1090.2 653 Q1087.5 643 1087.0 632 Z" fill="#F08A3A" stroke="#4A2810" stroke-width="0.9"/><path d="M1089.0 637 H1091.5 M1090.5 642 H1093.0" stroke="#8A4A20" stroke-width="0.7"/><path d="M1091.0 631 L1087.5 624 M1091.0 631 L1091.5 622.5 M1091.0 631 L1094.5 624.5" stroke="#1E5A22" stroke-width="1.8"/><path d="M1100.5 632 Q1104.5 628.5 1108.5 632 Q1108.0 643 1105.3 653 L1103.7 653 Q1101.0 643 1100.5 632 Z" fill="#F08A3A" stroke="#4A2810" stroke-width="0.9"/><path d="M1102.5 637 H1105.0 M1104.0 642 H1106.5" stroke="#8A4A20" stroke-width="0.7"/><path d="M1104.5 631 L1101.0 624 M1104.5 631 L1105.0 622.5 M1104.5 631 L1108.0 624.5" stroke="#1E5A22" stroke-width="1.8"/><path d="M1114.0 632 Q1118.0 628.5 1122.0 632 Q1121.5 643 1118.8 653 L1117.2 653 Q1114.5 643 1114.0 632 Z" fill="#F08A3A" stroke="#4A2810" stroke-width="0.9"/><path d="M1116.0 637 H1118.5 M1117.5 642 H1120.0" stroke="#8A4A20" stroke-width="0.7"/><path d="M1118.0 631 L1114.5 624 M1118.0 631 L1118.5 622.5 M1118.0 631 L1121.5 624.5" stroke="#1E5A22" stroke-width="1.8"/><path d="M1127.5 632 Q1131.5 628.5 1135.5 632 Q1135.0 643 1132.3 653 L1130.7 653 Q1128.0 643 1127.5 632 Z" fill="#F08A3A" stroke="#4A2810" stroke-width="0.9"/><path d="M1129.5 637 H1132.0 M1131.0 642 H1133.5" stroke="#8A4A20" stroke-width="0.7"/><path d="M1131.5 631 L1128.0 624 M1131.5 631 L1132.0 622.5 M1131.5 631 L1135.0 624.5" stroke="#1E5A22" stroke-width="1.8"/><path d="M1141.0 632 Q1145.0 628.5 1149.0 632 Q1148.5 643 1145.8 653 L1144.2 653 Q1141.5 643 1141.0 632 Z" fill="#F08A3A" stroke="#4A2810" stroke-width="0.9"/><path d="M1143.0 637 H1145.5 M1144.5 642 H1147.0" stroke="#8A4A20" stroke-width="0.7"/><path d="M1145.0 631 L1141.5 624 M1145.0 631 L1145.5 622.5 M1145.0 631 L1148.5 624.5" stroke="#1E5A22" stroke-width="1.8"/><path d="M1154.5 632 Q1158.5 628.5 1162.5 632 Q1162.0 643 1159.3 653 L1157.7 653 Q1155.0 643 1154.5 632 Z" fill="#F08A3A" stroke="#4A2810" stroke-width="0.9"/><path d="M1156.5 637 H1159.0 M1158.0 642 H1160.5" stroke="#8A4A20" stroke-width="0.7"/><path d="M1158.5 631 L1155.0 624 M1158.5 631 L1159.0 622.5 M1158.5 631 L1162.0 624.5" stroke="#1E5A22" stroke-width="1.8"/><path d="M1168.0 632 Q1172.0 628.5 1176.0 632 Q1175.5 643 1172.8 653 L1171.2 653 Q1168.5 643 1168.0 632 Z" fill="#F08A3A" stroke="#4A2810" stroke-width="0.9"/><path d="M1170.0 637 H1172.5 M1171.5 642 H1174.0" stroke="#8A4A20" stroke-width="0.7"/><path d="M1172.0 631 L1168.5 624 M1172.0 631 L1172.5 622.5 M1172.0 631 L1175.5 624.5" stroke="#1E5A22" stroke-width="1.8"/><path d="M1181.5 632 Q1185.5 628.5 1189.5 632 Q1189.0 643 1186.3 653 L1184.7 653 Q1182.0 643 1181.5 632 Z" fill="#F08A3A" stroke="#4A2810" stroke-width="0.9"/><path d="M1183.5 637 H1186.0 M1185.0 642 H1187.5" stroke="#8A4A20" stroke-width="0.7"/><path d="M1185.5 631 L1182.0 624 M1185.5 631 L1186.0 622.5 M1185.5 631 L1189.0 624.5" stroke="#1E5A22" stroke-width="1.8"/><path d="M1195.0 632 Q1199.0 628.5 1203.0 632 Q1202.5 643 1199.8 653 L1198.2 653 Q1195.5 643 1195.0 632 Z" fill="#F08A3A" stroke="#4A2810" stroke-width="0.9"/><path d="M1197.0 637 H1199.5 M1198.5 642 H1201.0" stroke="#8A4A20" stroke-width="0.7"/><path d="M1199.0 631 L1195.5 624 M1199.0 631 L1199.5 622.5 M1199.0 631 L1202.5 624.5" stroke="#1E5A22" stroke-width="1.8"/><path d="M1131.8 568.0 Q1126.8 554.0 1132.8 546.0" stroke="#173E2C" stroke-width="3.2" fill="none" transform="rotate(35 1131.8 568.0)"/><path d="M1131.8 568.0 Q1126.8 554.0 1132.8 546.0" stroke="#3E8A66" stroke-width="1.8" fill="none" transform="rotate(35 1131.8 568.0)"/><path d="M1134.2 568.0 Q1129.2 554.0 1135.2 542.0" stroke="#173E2C" stroke-width="3.2" fill="none" transform="rotate(18 1134.2 568.0)"/><path d="M1134.2 568.0 Q1129.2 554.0 1135.2 542.0" stroke="#3E8A66" stroke-width="1.8" fill="none" transform="rotate(18 1134.2 568.0)"/><path d="M1136.6 568.0 Q1131.6 554.0 1137.6 541.0" stroke="#173E2C" stroke-width="3.2" fill="none" transform="rotate(4 1136.6 568.0)"/><path d="M1136.6 568.0 Q1131.6 554.0 1137.6 541.0" stroke="#3E8A66" stroke-width="1.8" fill="none" transform="rotate(4 1136.6 568.0)"/><path d="M1139.0 568.0 Q1134.0 554.0 1140.0 544.0" stroke="#173E2C" stroke-width="3.2" fill="none" transform="rotate(-10 1139.0 568.0)"/><path d="M1139.0 568.0 Q1134.0 554.0 1140.0 544.0" stroke="#3E8A66" stroke-width="1.8" fill="none" transform="rotate(-10 1139.0 568.0)"/><path d="M1140.8 568.0 Q1135.8 554.0 1141.8 548.0" stroke="#173E2C" stroke-width="3.2" fill="none" transform="rotate(-25 1140.8 568.0)"/><path d="M1140.8 568.0 Q1135.8 554.0 1141.8 548.0" stroke="#3E8A66" stroke-width="1.8" fill="none" transform="rotate(-25 1140.8 568.0)"/><path d="M1153.3 565.2 Q1148.3 551.2 1154.3 543.2" stroke="#173E2C" stroke-width="3.2" fill="none" transform="rotate(35 1153.3 565.2)"/><path d="M1153.3 565.2 Q1148.3 551.2 1154.3 543.2" stroke="#3E8A66" stroke-width="1.8" fill="none" transform="rotate(35 1153.3 565.2)"/><path d="M1155.7 565.2 Q1150.7 551.2 1156.7 539.2" stroke="#173E2C" stroke-width="3.2" fill="none" transform="rotate(18 1155.7 565.2)"/><path d="M1155.7 565.2 Q1150.7 551.2 1156.7 539.2" stroke="#3E8A66" stroke-width="1.8" fill="none" transform="rotate(18 1155.7 565.2)"/><path d="M1158.1 565.2 Q1153.1 551.2 1159.1 538.2" stroke="#173E2C" stroke-width="3.2" fill="none" transform="rotate(4 1158.1 565.2)"/><path d="M1158.1 565.2 Q1153.1 551.2 1159.1 538.2" stroke="#3E8A66" stroke-width="1.8" fill="none" transform="rotate(4 1158.1 565.2)"/><path d="M1160.5 565.2 Q1155.5 551.2 1161.5 541.2" stroke="#173E2C" stroke-width="3.2" fill="none" transform="rotate(-10 1160.5 565.2)"/><path d="M1160.5 565.2 Q1155.5 551.2 1161.5 541.2" stroke="#3E8A66" stroke-width="1.8" fill="none" transform="rotate(-10 1160.5 565.2)"/><path d="M1162.3 565.2 Q1157.3 551.2 1163.3 545.2" stroke="#173E2C" stroke-width="3.2" fill="none" transform="rotate(-25 1162.3 565.2)"/><path d="M1162.3 565.2 Q1157.3 551.2 1163.3 545.2" stroke="#3E8A66" stroke-width="1.8" fill="none" transform="rotate(-25 1162.3 565.2)"/><path d="M1174.8 562.4 Q1169.8 548.4 1175.8 540.4" stroke="#173E2C" stroke-width="3.2" fill="none" transform="rotate(35 1174.8 562.4)"/><path d="M1174.8 562.4 Q1169.8 548.4 1175.8 540.4" stroke="#3E8A66" stroke-width="1.8" fill="none" transform="rotate(35 1174.8 562.4)"/><path d="M1177.2 562.4 Q1172.2 548.4 1178.2 536.4" stroke="#173E2C" stroke-width="3.2" fill="none" transform="rotate(18 1177.2 562.4)"/><path d="M1177.2 562.4 Q1172.2 548.4 1178.2 536.4" stroke="#3E8A66" stroke-width="1.8" fill="none" transform="rotate(18 1177.2 562.4)"/><path d="M1179.6 562.4 Q1174.6 548.4 1180.6 535.4" stroke="#173E2C" stroke-width="3.2" fill="none" transform="rotate(4 1179.6 562.4)"/><path d="M1179.6 562.4 Q1174.6 548.4 1180.6 535.4" stroke="#3E8A66" stroke-width="1.8" fill="none" transform="rotate(4 1179.6 562.4)"/><path d="M1182.0 562.4 Q1177.0 548.4 1183.0 538.4" stroke="#173E2C" stroke-width="3.2" fill="none" transform="rotate(-10 1182.0 562.4)"/><path d="M1182.0 562.4 Q1177.0 548.4 1183.0 538.4" stroke="#3E8A66" stroke-width="1.8" fill="none" transform="rotate(-10 1182.0 562.4)"/><path d="M1183.8 562.4 Q1178.8 548.4 1184.8 542.4" stroke="#173E2C" stroke-width="3.2" fill="none" transform="rotate(-25 1183.8 562.4)"/><path d="M1183.8 562.4 Q1178.8 548.4 1184.8 542.4" stroke="#3E8A66" stroke-width="1.8" fill="none" transform="rotate(-25 1183.8 562.4)"/><path d="M1196.3 559.6 Q1191.3 545.6 1197.3 537.6" stroke="#173E2C" stroke-width="3.2" fill="none" transform="rotate(35 1196.3 559.6)"/><path d="M1196.3 559.6 Q1191.3 545.6 1197.3 537.6" stroke="#3E8A66" stroke-width="1.8" fill="none" transform="rotate(35 1196.3 559.6)"/><path d="M1198.7 559.6 Q1193.7 545.6 1199.7 533.6" stroke="#173E2C" stroke-width="3.2" fill="none" transform="rotate(18 1198.7 559.6)"/><path d="M1198.7 559.6 Q1193.7 545.6 1199.7 533.6" stroke="#3E8A66" stroke-width="1.8" fill="none" transform="rotate(18 1198.7 559.6)"/><path d="M1201.1 559.6 Q1196.1 545.6 1202.1 532.6" stroke="#173E2C" stroke-width="3.2" fill="none" transform="rotate(4 1201.1 559.6)"/><path d="M1201.1 559.6 Q1196.1 545.6 1202.1 532.6" stroke="#3E8A66" stroke-width="1.8" fill="none" transform="rotate(4 1201.1 559.6)"/><path d="M1203.5 559.6 Q1198.5 545.6 1204.5 535.6" stroke="#173E2C" stroke-width="3.2" fill="none" transform="rotate(-10 1203.5 559.6)"/><path d="M1203.5 559.6 Q1198.5 545.6 1204.5 535.6" stroke="#3E8A66" stroke-width="1.8" fill="none" transform="rotate(-10 1203.5 559.6)"/><path d="M1205.3 559.6 Q1200.3 545.6 1206.3 539.6" stroke="#173E2C" stroke-width="3.2" fill="none" transform="rotate(-25 1205.3 559.6)"/><path d="M1205.3 559.6 Q1200.3 545.6 1206.3 539.6" stroke="#3E8A66" stroke-width="1.8" fill="none" transform="rotate(-25 1205.3 559.6)"/><path d="M1217.8 556.8 Q1212.8 542.8 1218.8 534.8" stroke="#173E2C" stroke-width="3.2" fill="none" transform="rotate(35 1217.8 556.8)"/><path d="M1217.8 556.8 Q1212.8 542.8 1218.8 534.8" stroke="#3E8A66" stroke-width="1.8" fill="none" transform="rotate(35 1217.8 556.8)"/><path d="M1220.2 556.8 Q1215.2 542.8 1221.2 530.8" stroke="#173E2C" stroke-width="3.2" fill="none" transform="rotate(18 1220.2 556.8)"/><path d="M1220.2 556.8 Q1215.2 542.8 1221.2 530.8" stroke="#3E8A66" stroke-width="1.8" fill="none" transform="rotate(18 1220.2 556.8)"/><path d="M1222.6 556.8 Q1217.6 542.8 1223.6 529.8" stroke="#173E2C" stroke-width="3.2" fill="none" transform="rotate(4 1222.6 556.8)"/><path d="M1222.6 556.8 Q1217.6 542.8 1223.6 529.8" stroke="#3E8A66" stroke-width="1.8" fill="none" transform="rotate(4 1222.6 556.8)"/><path d="M1225.0 556.8 Q1220.0 542.8 1226.0 532.8" stroke="#173E2C" stroke-width="3.2" fill="none" transform="rotate(-10 1225.0 556.8)"/><path d="M1225.0 556.8 Q1220.0 542.8 1226.0 532.8" stroke="#3E8A66" stroke-width="1.8" fill="none" transform="rotate(-10 1225.0 556.8)"/><path d="M1226.8 556.8 Q1221.8 542.8 1227.8 536.8" stroke="#173E2C" stroke-width="3.2" fill="none" transform="rotate(-25 1226.8 556.8)"/><path d="M1226.8 556.8 Q1221.8 542.8 1227.8 536.8" stroke="#3E8A66" stroke-width="1.8" fill="none" transform="rotate(-25 1226.8 556.8)"/><path d="M1239.3 554.0 Q1234.3 540.0 1240.3 532.0" stroke="#173E2C" stroke-width="3.2" fill="none" transform="rotate(35 1239.3 554.0)"/><path d="M1239.3 554.0 Q1234.3 540.0 1240.3 532.0" stroke="#3E8A66" stroke-width="1.8" fill="none" transform="rotate(35 1239.3 554.0)"/><path d="M1241.7 554.0 Q1236.7 540.0 1242.7 528.0" stroke="#173E2C" stroke-width="3.2" fill="none" transform="rotate(18 1241.7 554.0)"/><path d="M1241.7 554.0 Q1236.7 540.0 1242.7 528.0" stroke="#3E8A66" stroke-width="1.8" fill="none" transform="rotate(18 1241.7 554.0)"/><path d="M1244.1 554.0 Q1239.1 540.0 1245.1 527.0" stroke="#173E2C" stroke-width="3.2" fill="none" transform="rotate(4 1244.1 554.0)"/><path d="M1244.1 554.0 Q1239.1 540.0 1245.1 527.0" stroke="#3E8A66" stroke-width="1.8" fill="none" transform="rotate(4 1244.1 554.0)"/><path d="M1246.5 554.0 Q1241.5 540.0 1247.5 530.0" stroke="#173E2C" stroke-width="3.2" fill="none" transform="rotate(-10 1246.5 554.0)"/><path d="M1246.5 554.0 Q1241.5 540.0 1247.5 530.0" stroke="#3E8A66" stroke-width="1.8" fill="none" transform="rotate(-10 1246.5 554.0)"/><path d="M1248.3 554.0 Q1243.3 540.0 1249.3 534.0" stroke="#173E2C" stroke-width="3.2" fill="none" transform="rotate(-25 1248.3 554.0)"/><path d="M1248.3 554.0 Q1243.3 540.0 1249.3 534.0" stroke="#3E8A66" stroke-width="1.8" fill="none" transform="rotate(-25 1248.3 554.0)"/><path d="M1260.8 551.2 Q1255.8 537.2 1261.8 529.2" stroke="#173E2C" stroke-width="3.2" fill="none" transform="rotate(35 1260.8 551.2)"/><path d="M1260.8 551.2 Q1255.8 537.2 1261.8 529.2" stroke="#3E8A66" stroke-width="1.8" fill="none" transform="rotate(35 1260.8 551.2)"/><path d="M1263.2 551.2 Q1258.2 537.2 1264.2 525.2" stroke="#173E2C" stroke-width="3.2" fill="none" transform="rotate(18 1263.2 551.2)"/><path d="M1263.2 551.2 Q1258.2 537.2 1264.2 525.2" stroke="#3E8A66" stroke-width="1.8" fill="none" transform="rotate(18 1263.2 551.2)"/><path d="M1265.6 551.2 Q1260.6 537.2 1266.6 524.2" stroke="#173E2C" stroke-width="3.2" fill="none" transform="rotate(4 1265.6 551.2)"/><path d="M1265.6 551.2 Q1260.6 537.2 1266.6 524.2" stroke="#3E8A66" stroke-width="1.8" fill="none" transform="rotate(4 1265.6 551.2)"/><path d="M1268.0 551.2 Q1263.0 537.2 1269.0 527.2" stroke="#173E2C" stroke-width="3.2" fill="none" transform="rotate(-10 1268.0 551.2)"/><path d="M1268.0 551.2 Q1263.0 537.2 1269.0 527.2" stroke="#3E8A66" stroke-width="1.8" fill="none" transform="rotate(-10 1268.0 551.2)"/><path d="M1269.8 551.2 Q1264.8 537.2 1270.8 531.2" stroke="#173E2C" stroke-width="3.2" fill="none" transform="rotate(-25 1269.8 551.2)"/><path d="M1269.8 551.2 Q1264.8 537.2 1270.8 531.2" stroke="#3E8A66" stroke-width="1.8" fill="none" transform="rotate(-25 1269.8 551.2)"/><path d="M1282.3 548.4 Q1277.3 534.4 1283.3 526.4" stroke="#173E2C" stroke-width="3.2" fill="none" transform="rotate(35 1282.3 548.4)"/><path d="M1282.3 548.4 Q1277.3 534.4 1283.3 526.4" stroke="#3E8A66" stroke-width="1.8" fill="none" transform="rotate(35 1282.3 548.4)"/><path d="M1284.7 548.4 Q1279.7 534.4 1285.7 522.4" stroke="#173E2C" stroke-width="3.2" fill="none" transform="rotate(18 1284.7 548.4)"/><path d="M1284.7 548.4 Q1279.7 534.4 1285.7 522.4" stroke="#3E8A66" stroke-width="1.8" fill="none" transform="rotate(18 1284.7 548.4)"/><path d="M1287.1 548.4 Q1282.1 534.4 1288.1 521.4" stroke="#173E2C" stroke-width="3.2" fill="none" transform="rotate(4 1287.1 548.4)"/><path d="M1287.1 548.4 Q1282.1 534.4 1288.1 521.4" stroke="#3E8A66" stroke-width="1.8" fill="none" transform="rotate(4 1287.1 548.4)"/><path d="M1289.5 548.4 Q1284.5 534.4 1290.5 524.4" stroke="#173E2C" stroke-width="3.2" fill="none" transform="rotate(-10 1289.5 548.4)"/><path d="M1289.5 548.4 Q1284.5 534.4 1290.5 524.4" stroke="#3E8A66" stroke-width="1.8" fill="none" transform="rotate(-10 1289.5 548.4)"/><path d="M1291.3 548.4 Q1286.3 534.4 1292.3 528.4" stroke="#173E2C" stroke-width="3.2" fill="none" transform="rotate(-25 1291.3 548.4)"/><path d="M1291.3 548.4 Q1286.3 534.4 1292.3 528.4" stroke="#3E8A66" stroke-width="1.8" fill="none" transform="rotate(-25 1291.3 548.4)"/><path d="M1131.8 604.0 Q1126.8 590.0 1132.8 582.0" stroke="#173E2C" stroke-width="3.2" fill="none" transform="rotate(35 1131.8 604.0)"/><path d="M1131.8 604.0 Q1126.8 590.0 1132.8 582.0" stroke="#3E8A66" stroke-width="1.8" fill="none" transform="rotate(35 1131.8 604.0)"/><path d="M1134.2 604.0 Q1129.2 590.0 1135.2 578.0" stroke="#173E2C" stroke-width="3.2" fill="none" transform="rotate(18 1134.2 604.0)"/><path d="M1134.2 604.0 Q1129.2 590.0 1135.2 578.0" stroke="#3E8A66" stroke-width="1.8" fill="none" transform="rotate(18 1134.2 604.0)"/><path d="M1136.6 604.0 Q1131.6 590.0 1137.6 577.0" stroke="#173E2C" stroke-width="3.2" fill="none" transform="rotate(4 1136.6 604.0)"/><path d="M1136.6 604.0 Q1131.6 590.0 1137.6 577.0" stroke="#3E8A66" stroke-width="1.8" fill="none" transform="rotate(4 1136.6 604.0)"/><path d="M1139.0 604.0 Q1134.0 590.0 1140.0 580.0" stroke="#173E2C" stroke-width="3.2" fill="none" transform="rotate(-10 1139.0 604.0)"/><path d="M1139.0 604.0 Q1134.0 590.0 1140.0 580.0" stroke="#3E8A66" stroke-width="1.8" fill="none" transform="rotate(-10 1139.0 604.0)"/><path d="M1140.8 604.0 Q1135.8 590.0 1141.8 584.0" stroke="#173E2C" stroke-width="3.2" fill="none" transform="rotate(-25 1140.8 604.0)"/><path d="M1140.8 604.0 Q1135.8 590.0 1141.8 584.0" stroke="#3E8A66" stroke-width="1.8" fill="none" transform="rotate(-25 1140.8 604.0)"/><path d="M1153.3 601.2 Q1148.3 587.2 1154.3 579.2" stroke="#173E2C" stroke-width="3.2" fill="none" transform="rotate(35 1153.3 601.2)"/><path d="M1153.3 601.2 Q1148.3 587.2 1154.3 579.2" stroke="#3E8A66" stroke-width="1.8" fill="none" transform="rotate(35 1153.3 601.2)"/><path d="M1155.7 601.2 Q1150.7 587.2 1156.7 575.2" stroke="#173E2C" stroke-width="3.2" fill="none" transform="rotate(18 1155.7 601.2)"/><path d="M1155.7 601.2 Q1150.7 587.2 1156.7 575.2" stroke="#3E8A66" stroke-width="1.8" fill="none" transform="rotate(18 1155.7 601.2)"/><path d="M1158.1 601.2 Q1153.1 587.2 1159.1 574.2" stroke="#173E2C" stroke-width="3.2" fill="none" transform="rotate(4 1158.1 601.2)"/><path d="M1158.1 601.2 Q1153.1 587.2 1159.1 574.2" stroke="#3E8A66" stroke-width="1.8" fill="none" transform="rotate(4 1158.1 601.2)"/><path d="M1160.5 601.2 Q1155.5 587.2 1161.5 577.2" stroke="#173E2C" stroke-width="3.2" fill="none" transform="rotate(-10 1160.5 601.2)"/><path d="M1160.5 601.2 Q1155.5 587.2 1161.5 577.2" stroke="#3E8A66" stroke-width="1.8" fill="none" transform="rotate(-10 1160.5 601.2)"/><path d="M1162.3 601.2 Q1157.3 587.2 1163.3 581.2" stroke="#173E2C" stroke-width="3.2" fill="none" transform="rotate(-25 1162.3 601.2)"/><path d="M1162.3 601.2 Q1157.3 587.2 1163.3 581.2" stroke="#3E8A66" stroke-width="1.8" fill="none" transform="rotate(-25 1162.3 601.2)"/><path d="M1174.8 598.4 Q1169.8 584.4 1175.8 576.4" stroke="#173E2C" stroke-width="3.2" fill="none" transform="rotate(35 1174.8 598.4)"/><path d="M1174.8 598.4 Q1169.8 584.4 1175.8 576.4" stroke="#3E8A66" stroke-width="1.8" fill="none" transform="rotate(35 1174.8 598.4)"/><path d="M1177.2 598.4 Q1172.2 584.4 1178.2 572.4" stroke="#173E2C" stroke-width="3.2" fill="none" transform="rotate(18 1177.2 598.4)"/><path d="M1177.2 598.4 Q1172.2 584.4 1178.2 572.4" stroke="#3E8A66" stroke-width="1.8" fill="none" transform="rotate(18 1177.2 598.4)"/><path d="M1179.6 598.4 Q1174.6 584.4 1180.6 571.4" stroke="#173E2C" stroke-width="3.2" fill="none" transform="rotate(4 1179.6 598.4)"/><path d="M1179.6 598.4 Q1174.6 584.4 1180.6 571.4" stroke="#3E8A66" stroke-width="1.8" fill="none" transform="rotate(4 1179.6 598.4)"/><path d="M1182.0 598.4 Q1177.0 584.4 1183.0 574.4" stroke="#173E2C" stroke-width="3.2" fill="none" transform="rotate(-10 1182.0 598.4)"/><path d="M1182.0 598.4 Q1177.0 584.4 1183.0 574.4" stroke="#3E8A66" stroke-width="1.8" fill="none" transform="rotate(-10 1182.0 598.4)"/><path d="M1183.8 598.4 Q1178.8 584.4 1184.8 578.4" stroke="#173E2C" stroke-width="3.2" fill="none" transform="rotate(-25 1183.8 598.4)"/><path d="M1183.8 598.4 Q1178.8 584.4 1184.8 578.4" stroke="#3E8A66" stroke-width="1.8" fill="none" transform="rotate(-25 1183.8 598.4)"/><path d="M1196.3 595.6 Q1191.3 581.6 1197.3 573.6" stroke="#173E2C" stroke-width="3.2" fill="none" transform="rotate(35 1196.3 595.6)"/><path d="M1196.3 595.6 Q1191.3 581.6 1197.3 573.6" stroke="#3E8A66" stroke-width="1.8" fill="none" transform="rotate(35 1196.3 595.6)"/><path d="M1198.7 595.6 Q1193.7 581.6 1199.7 569.6" stroke="#173E2C" stroke-width="3.2" fill="none" transform="rotate(18 1198.7 595.6)"/><path d="M1198.7 595.6 Q1193.7 581.6 1199.7 569.6" stroke="#3E8A66" stroke-width="1.8" fill="none" transform="rotate(18 1198.7 595.6)"/><path d="M1201.1 595.6 Q1196.1 581.6 1202.1 568.6" stroke="#173E2C" stroke-width="3.2" fill="none" transform="rotate(4 1201.1 595.6)"/><path d="M1201.1 595.6 Q1196.1 581.6 1202.1 568.6" stroke="#3E8A66" stroke-width="1.8" fill="none" transform="rotate(4 1201.1 595.6)"/><path d="M1203.5 595.6 Q1198.5 581.6 1204.5 571.6" stroke="#173E2C" stroke-width="3.2" fill="none" transform="rotate(-10 1203.5 595.6)"/><path d="M1203.5 595.6 Q1198.5 581.6 1204.5 571.6" stroke="#3E8A66" stroke-width="1.8" fill="none" transform="rotate(-10 1203.5 595.6)"/><path d="M1205.3 595.6 Q1200.3 581.6 1206.3 575.6" stroke="#173E2C" stroke-width="3.2" fill="none" transform="rotate(-25 1205.3 595.6)"/><path d="M1205.3 595.6 Q1200.3 581.6 1206.3 575.6" stroke="#3E8A66" stroke-width="1.8" fill="none" transform="rotate(-25 1205.3 595.6)"/><path d="M1217.8 592.8 Q1212.8 578.8 1218.8 570.8" stroke="#173E2C" stroke-width="3.2" fill="none" transform="rotate(35 1217.8 592.8)"/><path d="M1217.8 592.8 Q1212.8 578.8 1218.8 570.8" stroke="#3E8A66" stroke-width="1.8" fill="none" transform="rotate(35 1217.8 592.8)"/><path d="M1220.2 592.8 Q1215.2 578.8 1221.2 566.8" stroke="#173E2C" stroke-width="3.2" fill="none" transform="rotate(18 1220.2 592.8)"/><path d="M1220.2 592.8 Q1215.2 578.8 1221.2 566.8" stroke="#3E8A66" stroke-width="1.8" fill="none" transform="rotate(18 1220.2 592.8)"/><path d="M1222.6 592.8 Q1217.6 578.8 1223.6 565.8" stroke="#173E2C" stroke-width="3.2" fill="none" transform="rotate(4 1222.6 592.8)"/><path d="M1222.6 592.8 Q1217.6 578.8 1223.6 565.8" stroke="#3E8A66" stroke-width="1.8" fill="none" transform="rotate(4 1222.6 592.8)"/><path d="M1225.0 592.8 Q1220.0 578.8 1226.0 568.8" stroke="#173E2C" stroke-width="3.2" fill="none" transform="rotate(-10 1225.0 592.8)"/><path d="M1225.0 592.8 Q1220.0 578.8 1226.0 568.8" stroke="#3E8A66" stroke-width="1.8" fill="none" transform="rotate(-10 1225.0 592.8)"/><path d="M1226.8 592.8 Q1221.8 578.8 1227.8 572.8" stroke="#173E2C" stroke-width="3.2" fill="none" transform="rotate(-25 1226.8 592.8)"/><path d="M1226.8 592.8 Q1221.8 578.8 1227.8 572.8" stroke="#3E8A66" stroke-width="1.8" fill="none" transform="rotate(-25 1226.8 592.8)"/><path d="M1239.3 590.0 Q1234.3 576.0 1240.3 568.0" stroke="#173E2C" stroke-width="3.2" fill="none" transform="rotate(35 1239.3 590.0)"/><path d="M1239.3 590.0 Q1234.3 576.0 1240.3 568.0" stroke="#3E8A66" stroke-width="1.8" fill="none" transform="rotate(35 1239.3 590.0)"/><path d="M1241.7 590.0 Q1236.7 576.0 1242.7 564.0" stroke="#173E2C" stroke-width="3.2" fill="none" transform="rotate(18 1241.7 590.0)"/><path d="M1241.7 590.0 Q1236.7 576.0 1242.7 564.0" stroke="#3E8A66" stroke-width="1.8" fill="none" transform="rotate(18 1241.7 590.0)"/><path d="M1244.1 590.0 Q1239.1 576.0 1245.1 563.0" stroke="#173E2C" stroke-width="3.2" fill="none" transform="rotate(4 1244.1 590.0)"/><path d="M1244.1 590.0 Q1239.1 576.0 1245.1 563.0" stroke="#3E8A66" stroke-width="1.8" fill="none" transform="rotate(4 1244.1 590.0)"/><path d="M1246.5 590.0 Q1241.5 576.0 1247.5 566.0" stroke="#173E2C" stroke-width="3.2" fill="none" transform="rotate(-10 1246.5 590.0)"/><path d="M1246.5 590.0 Q1241.5 576.0 1247.5 566.0" stroke="#3E8A66" stroke-width="1.8" fill="none" transform="rotate(-10 1246.5 590.0)"/><path d="M1248.3 590.0 Q1243.3 576.0 1249.3 570.0" stroke="#173E2C" stroke-width="3.2" fill="none" transform="rotate(-25 1248.3 590.0)"/><path d="M1248.3 590.0 Q1243.3 576.0 1249.3 570.0" stroke="#3E8A66" stroke-width="1.8" fill="none" transform="rotate(-25 1248.3 590.0)"/><path d="M1260.8 587.2 Q1255.8 573.2 1261.8 565.2" stroke="#173E2C" stroke-width="3.2" fill="none" transform="rotate(35 1260.8 587.2)"/><path d="M1260.8 587.2 Q1255.8 573.2 1261.8 565.2" stroke="#3E8A66" stroke-width="1.8" fill="none" transform="rotate(35 1260.8 587.2)"/><path d="M1263.2 587.2 Q1258.2 573.2 1264.2 561.2" stroke="#173E2C" stroke-width="3.2" fill="none" transform="rotate(18 1263.2 587.2)"/><path d="M1263.2 587.2 Q1258.2 573.2 1264.2 561.2" stroke="#3E8A66" stroke-width="1.8" fill="none" transform="rotate(18 1263.2 587.2)"/><path d="M1265.6 587.2 Q1260.6 573.2 1266.6 560.2" stroke="#173E2C" stroke-width="3.2" fill="none" transform="rotate(4 1265.6 587.2)"/><path d="M1265.6 587.2 Q1260.6 573.2 1266.6 560.2" stroke="#3E8A66" stroke-width="1.8" fill="none" transform="rotate(4 1265.6 587.2)"/><path d="M1268.0 587.2 Q1263.0 573.2 1269.0 563.2" stroke="#173E2C" stroke-width="3.2" fill="none" transform="rotate(-10 1268.0 587.2)"/><path d="M1268.0 587.2 Q1263.0 573.2 1269.0 563.2" stroke="#3E8A66" stroke-width="1.8" fill="none" transform="rotate(-10 1268.0 587.2)"/><path d="M1269.8 587.2 Q1264.8 573.2 1270.8 567.2" stroke="#173E2C" stroke-width="3.2" fill="none" transform="rotate(-25 1269.8 587.2)"/><path d="M1269.8 587.2 Q1264.8 573.2 1270.8 567.2" stroke="#3E8A66" stroke-width="1.8" fill="none" transform="rotate(-25 1269.8 587.2)"/><path d="M1282.3 584.4 Q1277.3 570.4 1283.3 562.4" stroke="#173E2C" stroke-width="3.2" fill="none" transform="rotate(35 1282.3 584.4)"/><path d="M1282.3 584.4 Q1277.3 570.4 1283.3 562.4" stroke="#3E8A66" stroke-width="1.8" fill="none" transform="rotate(35 1282.3 584.4)"/><path d="M1284.7 584.4 Q1279.7 570.4 1285.7 558.4" stroke="#173E2C" stroke-width="3.2" fill="none" transform="rotate(18 1284.7 584.4)"/><path d="M1284.7 584.4 Q1279.7 570.4 1285.7 558.4" stroke="#3E8A66" stroke-width="1.8" fill="none" transform="rotate(18 1284.7 584.4)"/><path d="M1287.1 584.4 Q1282.1 570.4 1288.1 557.4" stroke="#173E2C" stroke-width="3.2" fill="none" transform="rotate(4 1287.1 584.4)"/><path d="M1287.1 584.4 Q1282.1 570.4 1288.1 557.4" stroke="#3E8A66" stroke-width="1.8" fill="none" transform="rotate(4 1287.1 584.4)"/><path d="M1289.5 584.4 Q1284.5 570.4 1290.5 560.4" stroke="#173E2C" stroke-width="3.2" fill="none" transform="rotate(-10 1289.5 584.4)"/><path d="M1289.5 584.4 Q1284.5 570.4 1290.5 560.4" stroke="#3E8A66" stroke-width="1.8" fill="none" transform="rotate(-10 1289.5 584.4)"/><path d="M1291.3 584.4 Q1286.3 570.4 1292.3 564.4" stroke="#173E2C" stroke-width="3.2" fill="none" transform="rotate(-25 1291.3 584.4)"/><path d="M1291.3 584.4 Q1286.3 570.4 1292.3 564.4" stroke="#3E8A66" stroke-width="1.8" fill="none" transform="rotate(-25 1291.3 584.4)"/><path d="M1352 538 Q1380 548 1410 562 Q1416 566 1412 569 Q1405 571 1380 560 Q1354 550 1348 544 Q1347 538 1352 538Z" fill="#D98070" stroke="#5A2A20" stroke-width="1.1"/><path d="M1366 530 Q1390 545 1408 555 Q1412 558 1409 561 Q1404 562 1392 553 Q1372 540 1364 534 Q1363 530 1366 530Z" fill="#D98070" stroke="#5A2A20" stroke-width="1.1"/><path d="M919 719 Q915 704 905 692" stroke="#C8C8A0" stroke-width="2.6" fill="none"/><path d="M921 719 Q922 702 921 684" stroke="#E8E0B0" stroke-width="2.2" fill="none"/><path d="M922 718 Q929 704 941 692" stroke="#8B2A40" stroke-width="2.6" fill="none"/><path d="M892 686 L894 681 L897 680 L900 676 L904 678 L908 677 L910 682 L914 686 L913 691 L916 696 L910 699 L905 697 L900 699 L897 694 L893 692 Z" fill="#4CB848" stroke="#0A3A0C" stroke-width="1.2" stroke-linejoin="round"/><path d="M913 696 L897 682 M902 687 L900 681 M906 691 L910 684 M905 690 L896 690" stroke="#D8F0C8" stroke-width="0.9"/><path d="M911 682 L913 676 L917 675 L920 671 L924 674 L928 676 L928 682 L930 687 L925 692 L924 699 L919 700 L914 694 Z" fill="#5CC848" stroke="#0A3A0C" stroke-width="1.2" stroke-linejoin="round"/><path d="M921 699 L920 675 M920 684 L915 679 M920 688 L926 682" stroke="#E0F4D0" stroke-width="0.9"/><path d="M928 680 L933 675 L939 676 L943 673 L949 676 L953 681 L957 685 L954 691 L955 696 L948 699 L941 698 L935 701 L930 696 L931 689 Z" fill="#2E9A2E" stroke="#0A3A0C" stroke-width="1.2" stroke-linejoin="round"/><path d="M931 696 Q941 686 951 681" stroke="#7A4A2A" stroke-width="2" fill="none" opacity="0.8"/><path d="M1245 721 Q1241 706 1231 694" stroke="#C8C8A0" stroke-width="2.6" fill="none"/><path d="M1247 721 Q1248 704 1247 686" stroke="#E8E0B0" stroke-width="2.2" fill="none"/><path d="M1248 720 Q1255 706 1267 694" stroke="#8B2A40" stroke-width="2.6" fill="none"/><path d="M1218 688 L1220 683 L1223 682 L1226 678 L1230 680 L1234 679 L1236 684 L1240 688 L1239 693 L1242 698 L1236 701 L1231 699 L1226 701 L1223 696 L1219 694 Z" fill="#4CB848" stroke="#0A3A0C" stroke-width="1.2" stroke-linejoin="round"/><path d="M1239 698 L1223 684 M1228 689 L1226 683 M1232 693 L1236 686 M1231 692 L1222 692" stroke="#D8F0C8" stroke-width="0.9"/><path d="M1237 684 L1239 678 L1243 677 L1246 673 L1250 676 L1254 678 L1254 684 L1256 689 L1251 694 L1250 701 L1245 702 L1240 696 Z" fill="#5CC848" stroke="#0A3A0C" stroke-width="1.2" stroke-linejoin="round"/><path d="M1247 701 L1246 677 M1246 686 L1241 681 M1246 690 L1252 684" stroke="#E0F4D0" stroke-width="0.9"/><path d="M1254 682 L1259 677 L1265 678 L1269 675 L1275 678 L1279 683 L1283 687 L1280 693 L1281 698 L1274 701 L1267 700 L1261 703 L1256 698 L1257 691 Z" fill="#2E9A2E" stroke="#0A3A0C" stroke-width="1.2" stroke-linejoin="round"/><path d="M1257 698 Q1267 688 1277 683" stroke="#7A4A2A" stroke-width="2" fill="none" opacity="0.8"/><circle cx="1352" cy="700" r="5.5" fill="#B0203A" stroke="#3A0A14" stroke-width="0.8"/><path d="M1345 697 L1350 702 M1359 697 L1354 702" stroke="#6A8A80" stroke-width="2"/><circle cx="1352" cy="711" r="5.5" fill="#B0203A" stroke="#3A0A14" stroke-width="0.8"/><path d="M1345 708 L1350 713 M1359 708 L1354 713" stroke="#6A8A80" stroke-width="2"/><circle cx="1352" cy="722" r="5.5" fill="#B0203A" stroke="#3A0A14" stroke-width="0.8"/><path d="M1345 719 L1350 724 M1359 719 L1354 724" stroke="#6A8A80" stroke-width="2"/><circle cx="1352" cy="733" r="5.5" fill="#B0203A" stroke="#3A0A14" stroke-width="0.8"/><path d="M1345 730 L1350 735 M1359 730 L1354 735" stroke="#6A8A80" stroke-width="2"/><path d="M1344 692 L1350 696 L1346 688 Z M1360 692 L1354 696 L1358 688Z" fill="#7A9A90" stroke="#333" stroke-width="0.6"/><path d="M1392 626.0 Q1388 618.0 1398 612.0 Q1408 618.0 1404 626.0 Z" fill="#F3EBD0" stroke="#2A2A3A" stroke-width="1"/><path d="M1392 638.5 Q1388 630.5 1398 624.5 Q1408 630.5 1404 638.5 Z" fill="#F3EBD0" stroke="#2A2A3A" stroke-width="1"/><path d="M1404 632.5 Q1412 628.5 1420 628.5 Q1414 634.5 1404 636.5Z" fill="#C8D4D8" stroke="#2A2A3A" stroke-width="0.8"/><path d="M1392 651.0 Q1388 643.0 1398 637.0 Q1408 643.0 1404 651.0 Z" fill="#F3EBD0" stroke="#2A2A3A" stroke-width="1"/><path d="M1404 645.0 Q1412 641.0 1420 641.0 Q1414 647.0 1404 649.0Z" fill="#C8D4D8" stroke="#2A2A3A" stroke-width="0.8"/><path d="M1392 663.5 Q1388 655.5 1398 649.5 Q1408 655.5 1404 663.5 Z" fill="#F3EBD0" stroke="#2A2A3A" stroke-width="1"/><path d="M1404 657.5 Q1412 653.5 1420 653.5 Q1414 659.5 1404 661.5Z" fill="#C8D4D8" stroke="#2A2A3A" stroke-width="0.8"/><path d="M1392 676.0 Q1388 668.0 1398 662.0 Q1408 668.0 1404 676.0 Z" fill="#F3EBD0" stroke="#2A2A3A" stroke-width="1"/><path d="M1404 670.0 Q1412 666.0 1420 666.0 Q1414 672.0 1404 674.0Z" fill="#C8D4D8" stroke="#2A2A3A" stroke-width="0.8"/><path d="M1392 688.5 Q1388 680.5 1398 674.5 Q1408 680.5 1404 688.5 Z" fill="#F3EBD0" stroke="#2A2A3A" stroke-width="1"/><path d="M1404 682.5 Q1412 678.5 1420 678.5 Q1414 684.5 1404 686.5Z" fill="#C8D4D8" stroke="#2A2A3A" stroke-width="0.8"/><path d="M1392 701.0 Q1388 693.0 1398 687.0 Q1408 693.0 1404 701.0 Z" fill="#F3EBD0" stroke="#2A2A3A" stroke-width="1"/><path d="M1404 695.0 Q1412 691.0 1420 691.0 Q1414 697.0 1404 699.0Z" fill="#C8D4D8" stroke="#2A2A3A" stroke-width="0.8"/><path d="M1392 713.5 Q1388 705.5 1398 699.5 Q1408 705.5 1404 713.5 Z" fill="#F3EBD0" stroke="#2A2A3A" stroke-width="1"/><path d="M1404 707.5 Q1412 703.5 1420 703.5 Q1414 709.5 1404 711.5Z" fill="#C8D4D8" stroke="#2A2A3A" stroke-width="0.8"/><path d="M1392 726.0 Q1388 718.0 1398 712.0 Q1408 718.0 1404 726.0 Z" fill="#F3EBD0" stroke="#2A2A3A" stroke-width="1"/><path d="M1404 720.0 Q1412 716.0 1420 716.0 Q1414 722.0 1404 724.0Z" fill="#C8D4D8" stroke="#2A2A3A" stroke-width="0.8"/><path d="M1392 738.5 Q1388 730.5 1398 724.5 Q1408 730.5 1404 738.5 Z" fill="#F3EBD0" stroke="#2A2A3A" stroke-width="1"/><path d="M1404 732.5 Q1412 728.5 1420 728.5 Q1414 734.5 1404 736.5Z" fill="#C8D4D8" stroke="#2A2A3A" stroke-width="0.8"/><text x="1444" y="478" font-family="Liberation Sans" font-size="13" fill="#333">1'</text><text x="1444" y="518" font-family="Liberation Sans" font-size="13" fill="#333">2'</text><text x="1444" y="559" font-family="Liberation Sans" font-size="13" fill="#333">3'</text><text x="1444" y="600" font-family="Liberation Sans" font-size="13" fill="#333">4'</text><text x="1444" y="640" font-family="Liberation Sans" font-size="13" fill="#333">5'</text><text x="1444" y="680" font-family="Liberation Sans" font-size="13" fill="#333">6'</text><text x="1444" y="721" font-family="Liberation Sans" font-size="13" fill="#333">7'</text></g></svg><div style="position:absolute;left:44px;top:708px;width:196px;height:109px;background:#fff;border:1px solid #C8C8C8"></div><svg style="position:absolute;left:189px;top:715px;" width="6" height="7" viewBox="0 0 6 7"><rect x="0.5" y="0.8" width="4.2" height="3.4" fill="#111"/><path d="M1.8 4.2 L1.4 6 M2.6 4.2 V6 M3.4 4.2 L3.8 6" stroke="#111" stroke-width="0.5"/></svg><div class="u" style="left:194.5px;top:715.2px;font-size:4.4px;line-height:4.4px;font-weight:bold;color:#222;transform:scaleX(0.78);transform-origin:0 0">MagicSlides</div><div class="u" style="left:116.6px;top:716.50px;font-size:3.9px;line-height:4.5px;color:#3A3A3A;transform:scaleX(0.82);transform-origin:0 0;">End of the Presentation</div><div class="u" style="left:69.6px;top:721.00px;font-size:3.9px;line-height:4.5px;color:#3A3A3A;transform:scaleX(0.82);transform-origin:0 0;">Marketing Team Meeting – Key Takeaways</div><div class="u" style="left:69.6px;top:725.50px;font-size:3.9px;line-height:4.5px;color:#3A3A3A;transform:scaleX(0.82);transform-origin:0 0;">Date: July 15, 2024</div><div class="u" style="left:69.6px;top:734.50px;font-size:3.9px;line-height:4.5px;color:#3A3A3A;transform:scaleX(0.82);transform-origin:0 0;">1. Campaign Performance Review</div><div class="u" style="left:69.6px;top:739.00px;font-size:3.9px;line-height:4.5px;color:#3A3A3A;transform:scaleX(0.82);transform-origin:0 0;">- Q2 Results: 15% increase in social media engagement.</div><div class="u" style="left:69.6px;top:743.50px;font-size:3.9px;line-height:4.5px;color:#3A3A3A;transform:scaleX(0.82);transform-origin:0 0;">- Top Channels: Instagram &amp; LinkedIn with highest ROI.</div><div class="u" style="left:69.6px;top:748.00px;font-size:3.9px;line-height:4.5px;color:#3A3A3A;transform:scaleX(0.82);transform-origin:0 0;">- Customer Feedback**: Positive responses to new video strategy.</div><div class="u" style="left:69.6px;top:757.00px;font-size:3.9px;line-height:4.5px;color:#3A3A3A;transform:scaleX(0.82);transform-origin:0 0;">2. Upcoming Campaigns</div><div class="u" style="left:69.6px;top:761.50px;font-size:3.9px;line-height:4.5px;color:#3A3A3A;transform:scaleX(0.82);transform-origin:0 0;">- Q3 Focus: Targeted email campaign for customer retention.</div><div class="u" style="left:69.6px;top:766.00px;font-size:3.9px;line-height:4.5px;color:#3A3A3A;transform:scaleX(0.82);transform-origin:0 0;">- Content Calendar: Finalized Q3 themes &amp; schedule.</div><div class="u" style="left:69.6px;top:770.50px;font-size:3.9px;line-height:4.5px;color:#3A3A3A;transform:scaleX(0.82);transform-origin:0 0;">- New Partnerships: Collaborating with influencers for key demographics.</div><div class="u" style="left:69.6px;top:779.50px;font-size:3.9px;line-height:4.5px;color:#3A3A3A;transform:scaleX(0.82);transform-origin:0 0;">Action Items:</div><div class="u" style="left:73.6px;top:784.00px;font-size:3.9px;line-height:4.5px;color:#3A3A3A;transform:scaleX(0.82);transform-origin:0 0;">- Email Campaign: Design &amp; schedule for Q3.</div><div class="u" style="left:73.6px;top:788.50px;font-size:3.9px;line-height:4.5px;color:#3A3A3A;transform:scaleX(0.82);transform-origin:0 0;">- Influencer Outreach: Finalize agreements &amp; content briefs.</div><div class="u" style="left:73.6px;top:793.00px;font-size:3.9px;line-height:4.5px;color:#3A3A3A;transform:scaleX(0.82);transform-origin:0 0;">- Website Redesign: Complete mobile optimization &amp; test UI features.</div><div class="u" style="left:73.6px;top:797.50px;font-size:3.9px;line-height:4.5px;color:#3A3A3A;transform:scaleX(0.82);transform-origin:0 0;">- Next Meeting:</div><div class="u" style="left:69.6px;top:802.00px;font-size:3.9px;line-height:4.5px;color:#3A3A3A;transform:scaleX(0.82);transform-origin:0 0;">Date: August 19, 2024</div><div class="u" style="left:69.6px;top:806.50px;font-size:3.9px;line-height:4.5px;color:#3A3A3A;transform:scaleX(0.82);transform-origin:0 0;">Agenda: Q3 Campaign Progress, Mid-Year Performance Review, Customer Engagement Strategies</div><div style="position:absolute;left:44px;top:845px;width:196px;height:109px;background:#fff;border:1px solid #C8C8C8"></div><svg style="position:absolute;left:11px;top:863px;" width="16" height="14" viewBox="0 0 16 14"><path d="M9 0.5 L10.9 4.9 L15.5 5.2 L12 8.2 L13.1 12.8 L9 10.3 L4.9 12.8 L6 8.2 L2.5 5.2 L7.1 4.9 Z" fill="#595959"/><path d="M0.5 5.5 H2 M0.5 8 H2.5 M1 10.5 H3" stroke="#777" stroke-width="0.9"/></svg><svg style="position:absolute;left:189px;top:852px;" width="6" height="7" viewBox="0 0 6 7"><rect x="0.5" y="0.8" width="4.2" height="3.4" fill="#111"/><path d="M1.8 4.2 L1.4 6 M2.6 4.2 V6 M3.4 4.2 L3.8 6" stroke="#111" stroke-width="0.5"/></svg><div class="u" style="left:194.5px;top:852.2px;font-size:4.4px;line-height:4.4px;font-weight:bold;color:#222;transform:scaleX(0.78);transform-origin:0 0">MagicSlides</div><div class="u" style="left:69.6px;top:858.50px;font-size:3.9px;line-height:4.5px;color:#3A3A3A;transform:scaleX(0.82);transform-origin:0 0;">Marketing Team Meeting – Agenda for the month</div><div class="u" style="left:69.6px;top:863.00px;font-size:3.9px;line-height:4.5px;color:#3A3A3A;transform:scaleX(0.82);transform-origin:0 0;">Date: July 15, 2024</div><div class="u" style="left:69.6px;top:872.00px;font-size:3.9px;line-height:4.5px;color:#3A3A3A;transform:scaleX(0.82);transform-origin:0 0;">1. Campaign Performance Review</div><div class="u" style="left:69.6px;top:876.50px;font-size:3.9px;line-height:4.5px;color:#E05A50;transform:scaleX(0.82);transform-origin:0 0;">- Q2 Results: 15% increase in social media engagement.</div><div class="u" style="left:69.6px;top:881.00px;font-size:3.9px;line-height:4.5px;color:#E05A50;transform:scaleX(0.82);transform-origin:0 0;">- Top Channels: Instagram &amp; LinkedIn with highest ROI.</div><div class="u" style="left:69.6px;top:885.50px;font-size:3.9px;line-height:4.5px;color:#E05A50;transform:scaleX(0.82);transform-origin:0 0;">- Customer Feedback**: Positive responses to new video strategy.</div><div class="u" style="left:69.6px;top:894.50px;font-size:3.9px;line-height:4.5px;color:#3A3A3A;transform:scaleX(0.82);transform-origin:0 0;">2. Upcoming Campaigns</div><div class="u" style="left:69.6px;top:899.00px;font-size:3.9px;line-height:4.5px;color:#E05A50;transform:scaleX(0.82);transform-origin:0 0;">- Q3 Focus: Targeted email campaign for customer retention.</div><div class="u" style="left:69.6px;top:903.50px;font-size:3.9px;line-height:4.5px;color:#E05A50;transform:scaleX(0.82);transform-origin:0 0;">- Content Calendar: Finalized Q3 themes &amp; schedule.</div><div class="u" style="left:69.6px;top:908.00px;font-size:3.9px;line-height:4.5px;color:#E05A50;transform:scaleX(0.82);transform-origin:0 0;">- New Partnerships: Collaborating with influencers for key demographics.</div><div class="u" style="left:69.6px;top:917.00px;font-size:3.9px;line-height:4.5px;color:#3A3A3A;transform:scaleX(0.82);transform-origin:0 0;">Action Items:</div><div class="u" style="left:73.6px;top:921.50px;font-size:3.9px;line-height:4.5px;color:#E05A50;transform:scaleX(0.82);transform-origin:0 0;">- Email Campaign: Design &amp; schedule for Q3.</div><div class="u" style="left:73.6px;top:926.00px;font-size:3.9px;line-height:4.5px;color:#E05A50;transform:scaleX(0.82);transform-origin:0 0;">- Influencer Outreach: Finalize agreements &amp; content briefs.</div><div class="u" style="left:73.6px;top:930.50px;font-size:3.9px;line-height:4.5px;color:#E05A50;transform:scaleX(0.82);transform-origin:0 0;">- Website Redesign: Complete mobile optimization &amp; test UI features.</div><div class="u" style="left:73.6px;top:935.00px;font-size:3.9px;line-height:4.5px;color:#E05A50;transform:scaleX(0.82);transform-origin:0 0;">- Next Meeting:</div><div class="u" style="left:69.6px;top:939.50px;font-size:3.9px;line-height:4.5px;color:#3A3A3A;transform:scaleX(0.82);transform-origin:0 0;">Date: August 19, 2024</div><div class="u" style="left:69.6px;top:944.00px;font-size:3.9px;line-height:4.5px;color:#E05A50;transform:scaleX(0.82);transform-origin:0 0;">Agenda: Q3 Campaign Progress, Mid-Year Performance Review, Customer Engagement Strategies</div><svg style="position:absolute;left:44px;top:845px;" width="198" height="111" viewBox="0 0 198 111"><path d="M147 53 Q146 47 152 47 Q155 43 160 45 Q165 42 169 46 Q175 46 175 52 Q178 57 173 60 Q171 65 165 63 Q160 67 155 63 Q148 64 148 59 Q144 57 147 53Z" fill="#4472C4" stroke="#2F528F" stroke-width="0.6"/><path d="M29 80.5 H53" stroke="#2F55B0" stroke-width="0.6"/></svg><div class="t" style="left:15.50px;top:293.26px;font-size:18px;line-height:18px;color:#444;font-weight:normal;">5</div><div class="t" style="left:15.50px;top:430.76px;font-size:18px;line-height:18px;color:#444;font-weight:normal;">6</div><div class="t" style="left:15.50px;top:567.26px;font-size:18px;line-height:18px;color:#C43E1C;font-weight:normal;">7</div><div class="t" style="left:15.50px;top:704.76px;font-size:18px;line-height:18px;color:#444;font-weight:normal;">8</div><div class="t" style="left:15.50px;top:841.76px;font-size:18px;line-height:18px;color:#444;font-weight:normal;">9</div><div style="position:absolute;left:267px;top:217px;width:19px;height:281px;background:#F2F2F2;"></div><div style="position:absolute;left:267px;top:198px;width:17px;height:17px;background:#fff;border:1px solid #A0A0A0"></div><div style="position:absolute;left:267px;top:498px;width:17px;height:472px;background:#fff;border:1px solid #8E8E8E"></div><div style="position:absolute;left:267px;top:972px;width:17px;height:17px;background:#fff;border:1px solid #A0A0A0"></div><svg style="position:absolute;left:267px;top:198px;" width="19" height="19" viewBox="0 0 19 19"><path d="M5 11 L9.5 6 L14 11 Z" fill="#1E1E1E"/></svg><svg style="position:absolute;left:267px;top:972px;" width="19" height="19" viewBox="0 0 19 19"><path d="M5 8 L9.5 13 L14 8 Z" fill="#1E1E1E"/></svg><div style="position:absolute;left:290px;top:198px;width:1px;height:792px;background:#C6C6C6;"></div><div style="position:absolute;left:415px;top:208px;width:1360px;height:765px;background:#fff;border:1px solid #C6C6C6"></div><div style="position:absolute;left:1900px;top:217px;width:19px;height:686px;background:#F2F2F2;"></div><div style="position:absolute;left:1900px;top:198px;width:17px;height:17px;background:#fff;border:1px solid #A0A0A0"></div><div style="position:absolute;left:1900px;top:675px;width:17px;height:74px;background:#fff;border:1px solid #8E8E8E"></div><div style="position:absolute;left:1900px;top:903px;width:17px;height:17px;background:#fff;border:1px solid #A0A0A0"></div><svg style="position:absolute;left:1900px;top:198px;" width="19" height="19" viewBox="0 0 19 19"><path d="M5 11 L9.5 6 L14 11 Z" fill="#1E1E1E"/></svg><svg style="position:absolute;left:1900px;top:903px;" width="19" height="19" viewBox="0 0 19 19"><path d="M5 8 L9.5 13 L14 8 Z" fill="#1E1E1E"/></svg><svg style="position:absolute;left:1900px;top:924px;" width="19" height="40" viewBox="0 0 19 40"><path d="M9.4 1.8 L15.2 8.6 H12.2 L15.2 12.6 V17 H3.6 V12.6 L6.6 8.6 H3.6 Z" fill="#6E6E6E" stroke="#6E6E6E" stroke-width="0.6" stroke-linejoin="round"/><path d="M3.6 23 H15.2 V27.4 L12.2 31.4 H15.2 L9.4 38.2 L3.6 31.4 H6.6 L3.6 27.4 Z" fill="#6E6E6E" stroke="#6E6E6E" stroke-width="0.6" stroke-linejoin="round"/></svg><div style="position:absolute;left:293px;top:990px;width:1626px;height:1px;background:#C8C8C8;"></div><div style="position:absolute;left:0px;top:993px;width:1919px;height:1px;background:#D2D2D2;"></div><div style="position:absolute;left:0px;top:994px;width:1919px;height:22px;background:#F3F3F3;"></div><div class="t" style="left:15.00px;top:1001.00px;font-size:13px;line-height:13px;color:#444444;font-weight:normal;transform:scaleX(1.0100);transform-origin:0 0;">Slide 7 of 9</div><div class="t" style="left:144.00px;top:1001.00px;font-size:13px;line-height:13px;color:#444444;font-weight:normal;transform:scaleX(0.9722);transform-origin:0 0;">English (India)</div><div class="t" style="left:268.00px;top:1001.00px;font-size:13px;line-height:13px;color:#262626;font-weight:bold;transform:scaleX(0.9765);transform-origin:0 0;">Accessibility: Investigate</div><div class="t" style="left:1308.00px;top:1001.00px;font-size:13px;line-height:13px;color:#444444;font-weight:normal;transform:scaleX(1.0098);transform-origin:0 0;">Notes</div><div class="t" style="left:1389.50px;top:1001.00px;font-size:13px;line-height:13px;color:#444444;font-weight:normal;transform:scaleX(0.9704);transform-origin:0 0;">Comments</div><div style="position:absolute;left:1475px;top:994px;width:50px;height:22px;background:#C8C8C8;"></div><div class="t" style="left:1854.00px;top:1001.00px;font-size:13px;line-height:13px;color:#444444;font-weight:normal;transform:scaleX(0.9220);transform-origin:0 0;">85%</div><svg style="position:absolute;left:0px;top:990px;" width="1919" height="26" viewBox="0 990 1919 26"><path d="M105.5 1000.5 H112 Q114 1001 114 1003 V1013.5 Q113 1012 111 1012 H105.5 Z" fill="none" stroke="#666" stroke-width="1"/><path d="M114 1003 Q114 1001 116 1000.5 H117" fill="none" stroke="#666" stroke-width="1"/><path d="M116.5 1006 L118.5 1008.5 L122.5 1002" fill="none" stroke="#666" stroke-width="1.2"/><path d="M249 1003 A6.5 6.5 0 0 0 252 1014" fill="none" stroke="#555" stroke-width="1.2" stroke-dasharray="2 1.2"/><path d="M253.5 999.5 V1008 M251 1005.5 L253.5 1008 L256 1005.5" fill="none" stroke="#444" stroke-width="1.1"/><path d="M256 1006.5 H261 M259 1004.5 L261 1006.5 L259 1008.5" fill="none" stroke="#444" stroke-width="1.1"/><path d="M257 1010 L264 1016 M264 1009.5 L257.5 1016" stroke="#333" stroke-width="1.8"/><path d="M1291.5 1002 L1295 998.5 L1298.5 1002 Z" fill="#555"/><path d="M1288.5 1004.5 H1302 M1288.5 1007.5 H1302 M1288.5 1010.5 H1302 M1288.5 1013.5 H1296" stroke="#555" stroke-width="1"/><path d="M1369 1000 Q1368 1000 1368 1001.5 V1009.5 Q1368 1011 1369.5 1011 H1372 L1372.5 1014.5 L1376 1011 H1385 Q1386 1011 1386 1009.5 V1001.5 Q1386 1000 1384.5 1000 Z" fill="#555"/><rect x="1491.5" y="1000.5" width="16" height="13" fill="none" stroke="#666" stroke-width="1"/><path d="M1494.5 1000.5 V1013.5 M1494.5 1010.5 H1507.5" stroke="#666" stroke-width="1"/><rect x="1497.5" y="1003.5" width="7" height="4" fill="none" stroke="#666" stroke-width="1"/><rect x="1541.5" y="1000.5" width="6" height="5" fill="none" stroke="#666" stroke-width="1"/><rect x="1550.5" y="1000.5" width="6" height="5" fill="none" stroke="#666" stroke-width="1"/><rect x="1541.5" y="1008.5" width="6" height="5" fill="none" stroke="#666" stroke-width="1"/><rect x="1550.5" y="1008.5" width="6" height="5" fill="none" stroke="#666" stroke-width="1"/><path d="M1591.5 1001 H1599.5 V1013 H1591.5 Z M1599.5 1001 H1607.5 V1013 H1599.5 Z" fill="none" stroke="#666" stroke-width="1"/><path d="M1593 1004 H1598 M1593 1006.5 H1598 M1593 1009 H1598 M1601 1004 H1606 M1601 1006.5 H1606 M1601 1009 H1606" stroke="#777" stroke-width="0.8"/><path d="M1641 1000.5 H1658" stroke="#666" stroke-width="1.2"/><rect x="1642.5" y="1000.5" width="14" height="8" fill="none" stroke="#666" stroke-width="1"/><path d="M1649.5 1008.5 V1013 M1646 1013.5 H1653" stroke="#666" stroke-width="1"/><path d="M1682 1007.5 H1691" stroke="#444" stroke-width="1.1"/><path d="M1698 1007.5 H1823" stroke="#444" stroke-width="1.1"/><path d="M1760.5 1004 V1011" stroke="#444" stroke-width="1"/><rect x="1748" y="1000" width="6" height="14" fill="#444"/><path d="M1829 1007 H1838.5 M1833.75 1002.5 V1012" stroke="#444" stroke-width="1.1"/><rect x="1898.5" y="1000.5" width="12" height="12" fill="none" stroke="#666" stroke-width="1"/><path d="M1904.5 1002 V1005 M1904.5 1008 V1011 M1900 1006.5 H1903 M1906 1006.5 H1909" stroke="#666" stroke-width="0.9"/></svg><svg style="position:absolute;left:1400px;top:250px;" width="60" height="60" viewBox="1400 250 60 60"><rect x="1419.3" y="267" width="31.7" height="22.7" rx="1.8" fill="#000"/><rect x="1423.5" y="278.4" width="6.3" height="8" fill="#fff"/><rect x="1431.9" y="274.2" width="6.4" height="12.2" fill="#fff"/><rect x="1441" y="271" width="6" height="15.4" fill="#fff"/><path d="M1431.5 289 L1428.5 298.3 M1435.2 289 V298.3 M1438.8 289 L1442 298.3" stroke="#000" stroke-width="1.9"/></svg><div class="t" style="left:1462.30px;top:270.68px;font-size:24px;line-height:24px;color:#111;font-weight:bold;transform:scaleX(0.9948);transform-origin:0 0;">MagicSlides</div><div class="t" style="left:1319.60px;top:344.93px;font-size:23px;line-height:23px;color:#000;font-weight:normal;">2</div><svg style="position:absolute;left:0px;top:0px;pointer-events:none;" width="1919" height="1016" viewBox="0 0 1919 1016"><defs><filter id="blur6" x="-50%" y="-50%" width="200%" height="200%"><feGaussianBlur stdDeviation="6"/></filter><filter id="blur3" x="-50%" y="-50%" width="200%" height="200%"><feGaussianBlur stdDeviation="3"/></filter><filter id="blur10" x="-50%" y="-50%" width="200%" height="200%"><feGaussianBlur stdDeviation="10"/></filter><clipPath id="picclip"><rect x="731" y="451" width="731" height="282"/></clipPath></defs><g clip-path="url(#picclip)"><rect x="731" y="451" width="731" height="282" fill="#FCFCFC"/><g filter="url(#blur6)" opacity="0.75"><polygon points="795,565.872 1440,454.932 1440,466.932 795,579.872" fill="#B8B0F4"/><rect x="862" y="570" width="240" height="50" rx="25" transform="rotate(-9.3 982 595)" fill="#A09CF2"/><rect x="1114" y="516" width="190" height="86" rx="14" fill="#9EEFF2"/><rect x="972" y="622" width="240" height="30" rx="8" fill="#F8B27A"/><ellipse cx="920" cy="648" rx="48" ry="12" fill="#B5AEF2"/><ellipse cx="1252" cy="637" rx="42" ry="13" fill="#B5AEF2"/><ellipse cx="925" cy="705" rx="28" ry="14" fill="#F5B5E8"/><ellipse cx="1252" cy="705" rx="28" ry="14" fill="#F5B5E8"/><rect x="1385" y="606" width="38" height="130" rx="12" fill="#B0AAF2"/><rect x="1338" y="690" width="28" height="50" rx="8" fill="#F5A8E0"/><ellipse cx="1310" cy="735" rx="18" ry="14" fill="#B5AEF2"/></g><circle cx="1379" cy="556" r="60" fill="#CACACA" filter="url(#blur10)" opacity="0.9"/><polygon points="731,451 1445,451 1445,452.1 771,562.0 771,546 731,552.5" fill="#9A9A9A"/><polygon points="771,540.0 1296,450 1445,450 1445,452.1 771,564.0" fill="#D9A31A" filter="url(#blur3)" opacity="0.8"/><polygon points="771,543.0 1296,451 1445,451 1445,452.1 771,568.0" fill="#E0A400"/><rect x="773" y="567.0" width="22" height="166.0" fill="#9A9A9A"/><rect x="773" y="701" width="36" height="33" fill="#6AA84F"/><rect x="970" y="654" width="241" height="80" fill="#9A9A9A"/><rect x="1437" y="451" width="26" height="282" fill="#DADADA"/><path d="M732.7 451 V733" stroke="#000" stroke-opacity="0.12" stroke-width="1.7"/><path d="M753.0 451 V733" stroke="#000" stroke-opacity="0.33" stroke-width="2"/><path d="M773.3 451 V733" stroke="#000" stroke-opacity="0.12" stroke-width="1.7"/><path d="M793.5 451 V733" stroke="#000" stroke-opacity="0.33" stroke-width="2"/><path d="M813.8 451 V733" stroke="#000" stroke-opacity="0.12" stroke-width="1.7"/><path d="M834.1 451 V733" stroke="#000" stroke-opacity="0.33" stroke-width="2"/><path d="M854.3 451 V733" stroke="#000" stroke-opacity="0.12" stroke-width="1.7"/><path d="M874.6 451 V733" stroke="#000" stroke-opacity="0.33" stroke-width="2"/><path d="M894.9 451 V733" stroke="#000" stroke-opacity="0.12" stroke-width="1.7"/><path d="M915.2 451 V733" stroke="#000" stroke-opacity="0.33" stroke-width="2"/><path d="M935.4 451 V733" stroke="#000" stroke-opacity="0.12" stroke-width="1.7"/><path d="M955.7 451 V733" stroke="#000" stroke-opacity="0.33" stroke-width="2"/><path d="M976.0 451 V733" stroke="#000" stroke-opacity="0.12" stroke-width="1.7"/><path d="M996.2 451 V733" stroke="#000" stroke-opacity="0.33" stroke-width="2"/><path d="M1016.5 451 V733" stroke="#000" stroke-opacity="0.12" stroke-width="1.7"/><path d="M1036.8 451 V733" stroke="#000" stroke-opacity="0.33" stroke-width="2"/><path d="M1057.0 451 V733" stroke="#000" stroke-opacity="0.12" stroke-width="1.7"/><path d="M1077.3 451 V733" stroke="#000" stroke-opacity="0.33" stroke-width="2"/><path d="M1097.6 451 V733" stroke="#000" stroke-opacity="0.12" stroke-width="1.7"/><path d="M1117.9 451 V733" stroke="#000" stroke-opacity="0.33" stroke-width="2"/><path d="M1138.1 451 V733" stroke="#000" stroke-opacity="0.12" stroke-width="1.7"/><path d="M1158.4 451 V733" stroke="#000" stroke-opacity="0.33" stroke-width="2"/><path d="M1178.7 451 V733" stroke="#000" stroke-opacity="0.12" stroke-width="1.7"/><path d="M1198.9 451 V733" stroke="#000" stroke-opacity="0.33" stroke-width="2"/><path d="M1219.2 451 V733" stroke="#000" stroke-opacity="0.12" stroke-width="1.7"/><path d="M1239.5 451 V733" stroke="#000" stroke-opacity="0.33" stroke-width="2"/><path d="M1259.7 451 V733" stroke="#000" stroke-opacity="0.12" stroke-width="1.7"/><path d="M1280.0 451 V733" stroke="#000" stroke-opacity="0.33" stroke-width="2"/><path d="M1300.3 451 V733" stroke="#000" stroke-opacity="0.12" stroke-width="1.7"/><path d="M1320.6 451 V733" stroke="#000" stroke-opacity="0.33" stroke-width="2"/><path d="M1340.8 451 V733" stroke="#000" stroke-opacity="0.12" stroke-width="1.7"/><path d="M1361.1 451 V733" stroke="#000" stroke-opacity="0.33" stroke-width="2"/><path d="M1381.4 451 V733" stroke="#000" stroke-opacity="0.12" stroke-width="1.7"/><path d="M1401.6 451 V733" stroke="#000" stroke-opacity="0.33" stroke-width="2"/><path d="M1421.9 451 V733" stroke="#000" stroke-opacity="0.12" stroke-width="1.7"/><path d="M731 454.4 H1446" stroke="#000" stroke-opacity="0.12" stroke-width="1.7"/><path d="M731 474.7 H1450" stroke="#000" stroke-opacity="0.33" stroke-width="2"/><path d="M731 495.0 H1446" stroke="#000" stroke-opacity="0.12" stroke-width="1.7"/><path d="M731 515.2 H1450" stroke="#000" stroke-opacity="0.33" stroke-width="2"/><path d="M731 535.5 H1446" stroke="#000" stroke-opacity="0.12" stroke-width="1.7"/><path d="M731 555.8 H1450" stroke="#000" stroke-opacity="0.33" stroke-width="2"/><path d="M731 576.0 H1446" stroke="#000" stroke-opacity="0.12" stroke-width="1.7"/><path d="M731 596.3 H1450" stroke="#000" stroke-opacity="0.33" stroke-width="2"/><path d="M731 616.6 H1446" stroke="#000" stroke-opacity="0.12" stroke-width="1.7"/><path d="M731 636.9 H1450" stroke="#000" stroke-opacity="0.33" stroke-width="2"/><path d="M731 657.1 H1446" stroke="#000" stroke-opacity="0.12" stroke-width="1.7"/><path d="M731 677.4 H1450" stroke="#000" stroke-opacity="0.33" stroke-width="2"/><path d="M731 697.7 H1446" stroke="#000" stroke-opacity="0.12" stroke-width="1.7"/><path d="M731 717.9 H1450" stroke="#000" stroke-opacity="0.33" stroke-width="2"/><path d="M1431 604 V733 M1313.5 628 V733" stroke="#777" stroke-width="1"/><path d="M733 578.5 L742 568.5 L744 580.5 Z" fill="#1F6A3A" stroke="#0B2A14" stroke-width="0.6"/><path d="M733 598.9 L742 588.9 L744 600.9 Z" fill="#1F6A3A" stroke="#0B2A14" stroke-width="0.6"/><path d="M733 619.3 L742 609.3 L744 621.3 Z" fill="#1F6A3A" stroke="#0B2A14" stroke-width="0.6"/><path d="M733 639.7 L742 629.7 L744 641.7 Z" fill="#1F6A3A" stroke="#0B2A14" stroke-width="0.6"/><path d="M733 660.1 L742 650.1 L744 662.1 Z" fill="#1F6A3A" stroke="#0B2A14" stroke-width="0.6"/><path d="M733 680.5 L742 670.5 L744 682.5 Z" fill="#1F6A3A" stroke="#0B2A14" stroke-width="0.6"/><path d="M733 700.9 L742 690.9 L744 702.9 Z" fill="#1F6A3A" stroke="#0B2A14" stroke-width="0.6"/><path d="M733 721.3 L742 711.3 L744 723.3 Z" fill="#1F6A3A" stroke="#0B2A14" stroke-width="0.6"/><path d="M733 741.7 L742 731.7 L744 743.7 Z" fill="#1F6A3A" stroke="#0B2A14" stroke-width="0.6"/><ellipse cx="762.0" cy="570.5" rx="3.6" ry="2.2" transform="rotate(0,762.0,570.5)" fill="#F2B71B" stroke="#A87400" stroke-width="0.5"/><ellipse cx="761.1" cy="574.0" rx="3.6" ry="2.2" transform="rotate(30,761.1,574.0)" fill="#F2B71B" stroke="#A87400" stroke-width="0.5"/><ellipse cx="758.5" cy="576.6" rx="3.6" ry="2.2" transform="rotate(60,758.5,576.6)" fill="#F2B71B" stroke="#A87400" stroke-width="0.5"/><ellipse cx="755.0" cy="577.5" rx="3.6" ry="2.2" transform="rotate(90,755.0,577.5)" fill="#F2B71B" stroke="#A87400" stroke-width="0.5"/><ellipse cx="751.5" cy="576.6" rx="3.6" ry="2.2" transform="rotate(120,751.5,576.6)" fill="#F2B71B" stroke="#A87400" stroke-width="0.5"/><ellipse cx="748.9" cy="574.0" rx="3.6" ry="2.2" transform="rotate(150,748.9,574.0)" fill="#F2B71B" stroke="#A87400" stroke-width="0.5"/><ellipse cx="748.0" cy="570.5" rx="3.6" ry="2.2" transform="rotate(180,748.0,570.5)" fill="#F2B71B" stroke="#A87400" stroke-width="0.5"/><ellipse cx="748.9" cy="567.0" rx="3.6" ry="2.2" transform="rotate(210,748.9,567.0)" fill="#F2B71B" stroke="#A87400" stroke-width="0.5"/><ellipse cx="751.5" cy="564.4" rx="3.6" ry="2.2" transform="rotate(240,751.5,564.4)" fill="#F2B71B" stroke="#A87400" stroke-width="0.5"/><ellipse cx="755.0" cy="563.5" rx="3.6" ry="2.2" transform="rotate(270,755.0,563.5)" fill="#F2B71B" stroke="#A87400" stroke-width="0.5"/><ellipse cx="758.5" cy="564.4" rx="3.6" ry="2.2" transform="rotate(300,758.5,564.4)" fill="#F2B71B" stroke="#A87400" stroke-width="0.5"/><ellipse cx="761.1" cy="567.0" rx="3.6" ry="2.2" transform="rotate(330,761.1,567.0)" fill="#F2B71B" stroke="#A87400" stroke-width="0.5"/><circle cx="755" cy="570.5" r="4.8" fill="#7A4A10"/><ellipse cx="762.0" cy="590.9" rx="3.6" ry="2.2" transform="rotate(0,762.0,590.9)" fill="#F2B71B" stroke="#A87400" stroke-width="0.5"/><ellipse cx="761.1" cy="594.4" rx="3.6" ry="2.2" transform="rotate(30,761.1,594.4)" fill="#F2B71B" stroke="#A87400" stroke-width="0.5"/><ellipse cx="758.5" cy="597.0" rx="3.6" ry="2.2" transform="rotate(60,758.5,597.0)" fill="#F2B71B" stroke="#A87400" stroke-width="0.5"/><ellipse cx="755.0" cy="597.9" rx="3.6" ry="2.2" transform="rotate(90,755.0,597.9)" fill="#F2B71B" stroke="#A87400" stroke-width="0.5"/><ellipse cx="751.5" cy="597.0" rx="3.6" ry="2.2" transform="rotate(120,751.5,597.0)" fill="#F2B71B" stroke="#A87400" stroke-width="0.5"/><ellipse cx="748.9" cy="594.4" rx="3.6" ry="2.2" transform="rotate(150,748.9,594.4)" fill="#F2B71B" stroke="#A87400" stroke-width="0.5"/><ellipse cx="748.0" cy="590.9" rx="3.6" ry="2.2" transform="rotate(180,748.0,590.9)" fill="#F2B71B" stroke="#A87400" stroke-width="0.5"/><ellipse cx="748.9" cy="587.4" rx="3.6" ry="2.2" transform="rotate(210,748.9,587.4)" fill="#F2B71B" stroke="#A87400" stroke-width="0.5"/><ellipse cx="751.5" cy="584.8" rx="3.6" ry="2.2" transform="rotate(240,751.5,584.8)" fill="#F2B71B" stroke="#A87400" stroke-width="0.5"/><ellipse cx="755.0" cy="583.9" rx="3.6" ry="2.2" transform="rotate(270,755.0,583.9)" fill="#F2B71B" stroke="#A87400" stroke-width="0.5"/><ellipse cx="758.5" cy="584.8" rx="3.6" ry="2.2" transform="rotate(300,758.5,584.8)" fill="#F2B71B" stroke="#A87400" stroke-width="0.5"/><ellipse cx="761.1" cy="587.4" rx="3.6" ry="2.2" transform="rotate(330,761.1,587.4)" fill="#F2B71B" stroke="#A87400" stroke-width="0.5"/><circle cx="755" cy="590.9" r="4.8" fill="#7A4A10"/><ellipse cx="762.0" cy="611.3" rx="3.6" ry="2.2" transform="rotate(0,762.0,611.3)" fill="#F2B71B" stroke="#A87400" stroke-width="0.5"/><ellipse cx="761.1" cy="614.8" rx="3.6" ry="2.2" transform="rotate(30,761.1,614.8)" fill="#F2B71B" stroke="#A87400" stroke-width="0.5"/><ellipse cx="758.5" cy="617.4" rx="3.6" ry="2.2" transform="rotate(60,758.5,617.4)" fill="#F2B71B" stroke="#A87400" stroke-width="0.5"/><ellipse cx="755.0" cy="618.3" rx="3.6" ry="2.2" transform="rotate(90,755.0,618.3)" fill="#F2B71B" stroke="#A87400" stroke-width="0.5"/><ellipse cx="751.5" cy="617.4" rx="3.6" ry="2.2" transform="rotate(120,751.5,617.4)" fill="#F2B71B" stroke="#A87400" stroke-width="0.5"/><ellipse cx="748.9" cy="614.8" rx="3.6" ry="2.2" transform="rotate(150,748.9,614.8)" fill="#F2B71B" stroke="#A87400" stroke-width="0.5"/><ellipse cx="748.0" cy="611.3" rx="3.6" ry="2.2" transform="rotate(180,748.0,611.3)" fill="#F2B71B" stroke="#A87400" stroke-width="0.5"/><ellipse cx="748.9" cy="607.8" rx="3.6" ry="2.2" transform="rotate(210,748.9,607.8)" fill="#F2B71B" stroke="#A87400" stroke-width="0.5"/><ellipse cx="751.5" cy="605.2" rx="3.6" ry="2.2" transform="rotate(240,751.5,605.2)" fill="#F2B71B" stroke="#A87400" stroke-width="0.5"/><ellipse cx="755.0" cy="604.3" rx="3.6" ry="2.2" transform="rotate(270,755.0,604.3)" fill="#F2B71B" stroke="#A87400" stroke-width="0.5"/><ellipse cx="758.5" cy="605.2" rx="3.6" ry="2.2" transform="rotate(300,758.5,605.2)" fill="#F2B71B" stroke="#A87400" stroke-width="0.5"/><ellipse cx="761.1" cy="607.8" rx="3.6" ry="2.2" transform="rotate(330,761.1,607.8)" fill="#F2B71B" stroke="#A87400" stroke-width="0.5"/><circle cx="755" cy="611.3" r="4.8" fill="#7A4A10"/><ellipse cx="762.0" cy="631.7" rx="3.6" ry="2.2" transform="rotate(0,762.0,631.7)" fill="#F2B71B" stroke="#A87400" stroke-width="0.5"/><ellipse cx="761.1" cy="635.2" rx="3.6" ry="2.2" transform="rotate(30,761.1,635.2)" fill="#F2B71B" stroke="#A87400" stroke-width="0.5"/><ellipse cx="758.5" cy="637.8" rx="3.6" ry="2.2" transform="rotate(60,758.5,637.8)" fill="#F2B71B" stroke="#A87400" stroke-width="0.5"/><ellipse cx="755.0" cy="638.7" rx="3.6" ry="2.2" transform="rotate(90,755.0,638.7)" fill="#F2B71B" stroke="#A87400" stroke-width="0.5"/><ellipse cx="751.5" cy="637.8" rx="3.6" ry="2.2" transform="rotate(120,751.5,637.8)" fill="#F2B71B" stroke="#A87400" stroke-width="0.5"/><ellipse cx="748.9" cy="635.2" rx="3.6" ry="2.2" transform="rotate(150,748.9,635.2)" fill="#F2B71B" stroke="#A87400" stroke-width="0.5"/><ellipse cx="748.0" cy="631.7" rx="3.6" ry="2.2" transform="rotate(180,748.0,631.7)" fill="#F2B71B" stroke="#A87400" stroke-width="0.5"/><ellipse cx="748.9" cy="628.2" rx="3.6" ry="2.2" transform="rotate(210,748.9,628.2)" fill="#F2B71B" stroke="#A87400" stroke-width="0.5"/><ellipse cx="751.5" cy="625.6" rx="3.6" ry="2.2" transform="rotate(240,751.5,625.6)" fill="#F2B71B" stroke="#A87400" stroke-width="0.5"/><ellipse cx="755.0" cy="624.7" rx="3.6" ry="2.2" transform="rotate(270,755.0,624.7)" fill="#F2B71B" stroke="#A87400" stroke-width="0.5"/><ellipse cx="758.5" cy="625.6" rx="3.6" ry="2.2" transform="rotate(300,758.5,625.6)" fill="#F2B71B" stroke="#A87400" stroke-width="0.5"/><ellipse cx="761.1" cy="628.2" rx="3.6" ry="2.2" transform="rotate(330,761.1,628.2)" fill="#F2B71B" stroke="#A87400" stroke-width="0.5"/><circle cx="755" cy="631.7" r="4.8" fill="#7A4A10"/><ellipse cx="762.0" cy="652.1" rx="3.6" ry="2.2" transform="rotate(0,762.0,652.1)" fill="#F2B71B" stroke="#A87400" stroke-width="0.5"/><ellipse cx="761.1" cy="655.6" rx="3.6" ry="2.2" transform="rotate(30,761.1,655.6)" fill="#F2B71B" stroke="#A87400" stroke-width="0.5"/><ellipse cx="758.5" cy="658.2" rx="3.6" ry="2.2" transform="rotate(60,758.5,658.2)" fill="#F2B71B" stroke="#A87400" stroke-width="0.5"/><ellipse cx="755.0" cy="659.1" rx="3.6" ry="2.2" transform="rotate(90,755.0,659.1)" fill="#F2B71B" stroke="#A87400" stroke-width="0.5"/><ellipse cx="751.5" cy="658.2" rx="3.6" ry="2.2" transform="rotate(120,751.5,658.2)" fill="#F2B71B" stroke="#A87400" stroke-width="0.5"/><ellipse cx="748.9" cy="655.6" rx="3.6" ry="2.2" transform="rotate(150,748.9,655.6)" fill="#F2B71B" stroke="#A87400" stroke-width="0.5"/><ellipse cx="748.0" cy="652.1" rx="3.6" ry="2.2" transform="rotate(180,748.0,652.1)" fill="#F2B71B" stroke="#A87400" stroke-width="0.5"/><ellipse cx="748.9" cy="648.6" rx="3.6" ry="2.2" transform="rotate(210,748.9,648.6)" fill="#F2B71B" stroke="#A87400" stroke-width="0.5"/><ellipse cx="751.5" cy="646.0" rx="3.6" ry="2.2" transform="rotate(240,751.5,646.0)" fill="#F2B71B" stroke="#A87400" stroke-width="0.5"/><ellipse cx="755.0" cy="645.1" rx="3.6" ry="2.2" transform="rotate(270,755.0,645.1)" fill="#F2B71B" stroke="#A87400" stroke-width="0.5"/><ellipse cx="758.5" cy="646.0" rx="3.6" ry="2.2" transform="rotate(300,758.5,646.0)" fill="#F2B71B" stroke="#A87400" stroke-width="0.5"/><ellipse cx="761.1" cy="648.6" rx="3.6" ry="2.2" transform="rotate(330,761.1,648.6)" fill="#F2B71B" stroke="#A87400" stroke-width="0.5"/><circle cx="755" cy="652.1" r="4.8" fill="#7A4A10"/><ellipse cx="762.0" cy="672.5" rx="3.6" ry="2.2" transform="rotate(0,762.0,672.5)" fill="#F2B71B" stroke="#A87400" stroke-width="0.5"/><ellipse cx="761.1" cy="676.0" rx="3.6" ry="2.2" transform="rotate(30,761.1,676.0)" fill="#F2B71B" stroke="#A87400" stroke-width="0.5"/><ellipse cx="758.5" cy="678.6" rx="3.6" ry="2.2" transform="rotate(60,758.5,678.6)" fill="#F2B71B" stroke="#A87400" stroke-width="0.5"/><ellipse cx="755.0" cy="679.5" rx="3.6" ry="2.2" transform="rotate(90,755.0,679.5)" fill="#F2B71B" stroke="#A87400" stroke-width="0.5"/><ellipse cx="751.5" cy="678.6" rx="3.6" ry="2.2" transform="rotate(120,751.5,678.6)" fill="#F2B71B" stroke="#A87400" stroke-width="0.5"/><ellipse cx="748.9" cy="676.0" rx="3.6" ry="2.2" transform="rotate(150,748.9,676.0)" fill="#F2B71B" stroke="#A87400" stroke-width="0.5"/><ellipse cx="748.0" cy="672.5" rx="3.6" ry="2.2" transform="rotate(180,748.0,672.5)" fill="#F2B71B" stroke="#A87400" stroke-width="0.5"/><ellipse cx="748.9" cy="669.0" rx="3.6" ry="2.2" transform="rotate(210,748.9,669.0)" fill="#F2B71B" stroke="#A87400" stroke-width="0.5"/><ellipse cx="751.5" cy="666.4" rx="3.6" ry="2.2" transform="rotate(240,751.5,666.4)" fill="#F2B71B" stroke="#A87400" stroke-width="0.5"/><ellipse cx="755.0" cy="665.5" rx="3.6" ry="2.2" transform="rotate(270,755.0,665.5)" fill="#F2B71B" stroke="#A87400" stroke-width="0.5"/><ellipse cx="758.5" cy="666.4" rx="3.6" ry="2.2" transform="rotate(300,758.5,666.4)" fill="#F2B71B" stroke="#A87400" stroke-width="0.5"/><ellipse cx="761.1" cy="669.0" rx="3.6" ry="2.2" transform="rotate(330,761.1,669.0)" fill="#F2B71B" stroke="#A87400" stroke-width="0.5"/><circle cx="755" cy="672.5" r="4.8" fill="#7A4A10"/><ellipse cx="762.0" cy="692.9" rx="3.6" ry="2.2" transform="rotate(0,762.0,692.9)" fill="#F2B71B" stroke="#A87400" stroke-width="0.5"/><ellipse cx="761.1" cy="696.4" rx="3.6" ry="2.2" transform="rotate(30,761.1,696.4)" fill="#F2B71B" stroke="#A87400" stroke-width="0.5"/><ellipse cx="758.5" cy="699.0" rx="3.6" ry="2.2" transform="rotate(60,758.5,699.0)" fill="#F2B71B" stroke="#A87400" stroke-width="0.5"/><ellipse cx="755.0" cy="699.9" rx="3.6" ry="2.2" transform="rotate(90,755.0,699.9)" fill="#F2B71B" stroke="#A87400" stroke-width="0.5"/><ellipse cx="751.5" cy="699.0" rx="3.6" ry="2.2" transform="rotate(120,751.5,699.0)" fill="#F2B71B" stroke="#A87400" stroke-width="0.5"/><ellipse cx="748.9" cy="696.4" rx="3.6" ry="2.2" transform="rotate(150,748.9,696.4)" fill="#F2B71B" stroke="#A87400" stroke-width="0.5"/><ellipse cx="748.0" cy="692.9" rx="3.6" ry="2.2" transform="rotate(180,748.0,692.9)" fill="#F2B71B" stroke="#A87400" stroke-width="0.5"/><ellipse cx="748.9" cy="689.4" rx="3.6" ry="2.2" transform="rotate(210,748.9,689.4)" fill="#F2B71B" stroke="#A87400" stroke-width="0.5"/><ellipse cx="751.5" cy="686.8" rx="3.6" ry="2.2" transform="rotate(240,751.5,686.8)" fill="#F2B71B" stroke="#A87400" stroke-width="0.5"/><ellipse cx="755.0" cy="685.9" rx="3.6" ry="2.2" transform="rotate(270,755.0,685.9)" fill="#F2B71B" stroke="#A87400" stroke-width="0.5"/><ellipse cx="758.5" cy="686.8" rx="3.6" ry="2.2" transform="rotate(300,758.5,686.8)" fill="#F2B71B" stroke="#A87400" stroke-width="0.5"/><ellipse cx="761.1" cy="689.4" rx="3.6" ry="2.2" transform="rotate(330,761.1,689.4)" fill="#F2B71B" stroke="#A87400" stroke-width="0.5"/><circle cx="755" cy="692.9" r="4.8" fill="#7A4A10"/><ellipse cx="762.0" cy="713.3" rx="3.6" ry="2.2" transform="rotate(0,762.0,713.3)" fill="#F2B71B" stroke="#A87400" stroke-width="0.5"/><ellipse cx="761.1" cy="716.8" rx="3.6" ry="2.2" transform="rotate(30,761.1,716.8)" fill="#F2B71B" stroke="#A87400" stroke-width="0.5"/><ellipse cx="758.5" cy="719.4" rx="3.6" ry="2.2" transform="rotate(60,758.5,719.4)" fill="#F2B71B" stroke="#A87400" stroke-width="0.5"/><ellipse cx="755.0" cy="720.3" rx="3.6" ry="2.2" transform="rotate(90,755.0,720.3)" fill="#F2B71B" stroke="#A87400" stroke-width="0.5"/><ellipse cx="751.5" cy="719.4" rx="3.6" ry="2.2" transform="rotate(120,751.5,719.4)" fill="#F2B71B" stroke="#A87400" stroke-width="0.5"/><ellipse cx="748.9" cy="716.8" rx="3.6" ry="2.2" transform="rotate(150,748.9,716.8)" fill="#F2B71B" stroke="#A87400" stroke-width="0.5"/><ellipse cx="748.0" cy="713.3" rx="3.6" ry="2.2" transform="rotate(180,748.0,713.3)" fill="#F2B71B" stroke="#A87400" stroke-width="0.5"/><ellipse cx="748.9" cy="709.8" rx="3.6" ry="2.2" transform="rotate(210,748.9,709.8)" fill="#F2B71B" stroke="#A87400" stroke-width="0.5"/><ellipse cx="751.5" cy="707.2" rx="3.6" ry="2.2" transform="rotate(240,751.5,707.2)" fill="#F2B71B" stroke="#A87400" stroke-width="0.5"/><ellipse cx="755.0" cy="706.3" rx="3.6" ry="2.2" transform="rotate(270,755.0,706.3)" fill="#F2B71B" stroke="#A87400" stroke-width="0.5"/><ellipse cx="758.5" cy="707.2" rx="3.6" ry="2.2" transform="rotate(300,758.5,707.2)" fill="#F2B71B" stroke="#A87400" stroke-width="0.5"/><ellipse cx="761.1" cy="709.8" rx="3.6" ry="2.2" transform="rotate(330,761.1,709.8)" fill="#F2B71B" stroke="#A87400" stroke-width="0.5"/><circle cx="755" cy="713.3" r="4.8" fill="#7A4A10"/><ellipse cx="762.0" cy="733.7" rx="3.6" ry="2.2" transform="rotate(0,762.0,733.7)" fill="#F2B71B" stroke="#A87400" stroke-width="0.5"/><ellipse cx="761.1" cy="737.2" rx="3.6" ry="2.2" transform="rotate(30,761.1,737.2)" fill="#F2B71B" stroke="#A87400" stroke-width="0.5"/><ellipse cx="758.5" cy="739.8" rx="3.6" ry="2.2" transform="rotate(60,758.5,739.8)" fill="#F2B71B" stroke="#A87400" stroke-width="0.5"/><ellipse cx="755.0" cy="740.7" rx="3.6" ry="2.2" transform="rotate(90,755.0,740.7)" fill="#F2B71B" stroke="#A87400" stroke-width="0.5"/><ellipse cx="751.5" cy="739.8" rx="3.6" ry="2.2" transform="rotate(120,751.5,739.8)" fill="#F2B71B" stroke="#A87400" stroke-width="0.5"/><ellipse cx="748.9" cy="737.2" rx="3.6" ry="2.2" transform="rotate(150,748.9,737.2)" fill="#F2B71B" stroke="#A87400" stroke-width="0.5"/><ellipse cx="748.0" cy="733.7" rx="3.6" ry="2.2" transform="rotate(180,748.0,733.7)" fill="#F2B71B" stroke="#A87400" stroke-width="0.5"/><ellipse cx="748.9" cy="730.2" rx="3.6" ry="2.2" transform="rotate(210,748.9,730.2)" fill="#F2B71B" stroke="#A87400" stroke-width="0.5"/><ellipse cx="751.5" cy="727.6" rx="3.6" ry="2.2" transform="rotate(240,751.5,727.6)" fill="#F2B71B" stroke="#A87400" stroke-width="0.5"/><ellipse cx="755.0" cy="726.7" rx="3.6" ry="2.2" transform="rotate(270,755.0,726.7)" fill="#F2B71B" stroke="#A87400" stroke-width="0.5"/><ellipse cx="758.5" cy="727.6" rx="3.6" ry="2.2" transform="rotate(300,758.5,727.6)" fill="#F2B71B" stroke="#A87400" stroke-width="0.5"/><ellipse cx="761.1" cy="730.2" rx="3.6" ry="2.2" transform="rotate(330,761.1,730.2)" fill="#F2B71B" stroke="#A87400" stroke-width="0.5"/><circle cx="755" cy="733.7" r="4.8" fill="#7A4A10"/><g transform="translate(810.0,576.8) rotate(20)"><path d="M0 -11.0 Q4.2 -7.2 7.6 -0.4 A7.6 7.6 0 1 1 -7.6 -0.4 Q-4.2 -7.2 0 -11.0Z" fill="#F0B47C" stroke="#3E2A1E" stroke-width="1.59"/><path d="M-2.6 -12.9 L0 -9.8 L2.6 -13.2" stroke="#4A5060" stroke-width="1.46" fill="none"/></g><g transform="translate(823.3,574.5) rotate(20)"><path d="M0 -11.0 Q4.2 -7.2 7.6 -0.4 A7.6 7.6 0 1 1 -7.6 -0.4 Q-4.2 -7.2 0 -11.0Z" fill="#F0B47C" stroke="#3E2A1E" stroke-width="1.59"/><path d="M-2.6 -12.9 L0 -9.8 L2.6 -13.2" stroke="#4A5060" stroke-width="1.46" fill="none"/></g><g transform="translate(836.7,572.2) rotate(20)"><path d="M0 -11.0 Q4.2 -7.2 7.6 -0.4 A7.6 7.6 0 1 1 -7.6 -0.4 Q-4.2 -7.2 0 -11.0Z" fill="#F0B47C" stroke="#3E2A1E" stroke-width="1.59"/><path d="M-2.6 -12.9 L0 -9.8 L2.6 -13.2" stroke="#4A5060" stroke-width="1.46" fill="none"/></g><g transform="translate(850.0,569.9) rotate(20)"><path d="M0 -11.0 Q4.2 -7.2 7.6 -0.4 A7.6 7.6 0 1 1 -7.6 -0.4 Q-4.2 -7.2 0 -11.0Z" fill="#F0B47C" stroke="#3E2A1E" stroke-width="1.59"/><path d="M-2.6 -12.9 L0 -9.8 L2.6 -13.2" stroke="#4A5060" stroke-width="1.46" fill="none"/></g><g transform="translate(863.3,567.6) rotate(20)"><path d="M0 -11.0 Q4.2 -7.2 7.6 -0.4 A7.6 7.6 0 1 1 -7.6 -0.4 Q-4.2 -7.2 0 -11.0Z" fill="#F0B47C" stroke="#3E2A1E" stroke-width="1.59"/><path d="M-2.6 -12.9 L0 -9.8 L2.6 -13.2" stroke="#4A5060" stroke-width="1.46" fill="none"/></g><g transform="translate(876.6,565.3) rotate(20)"><path d="M0 -11.0 Q4.2 -7.2 7.6 -0.4 A7.6 7.6 0 1 1 -7.6 -0.4 Q-4.2 -7.2 0 -11.0Z" fill="#F0B47C" stroke="#3E2A1E" stroke-width="1.59"/><path d="M-2.6 -12.9 L0 -9.8 L2.6 -13.2" stroke="#4A5060" stroke-width="1.46" fill="none"/></g><g transform="translate(890.0,563.0) rotate(20)"><path d="M0 -11.0 Q4.2 -7.2 7.6 -0.4 A7.6 7.6 0 1 1 -7.6 -0.4 Q-4.2 -7.2 0 -11.0Z" fill="#F0B47C" stroke="#3E2A1E" stroke-width="1.59"/><path d="M-2.6 -12.9 L0 -9.8 L2.6 -13.2" stroke="#4A5060" stroke-width="1.46" fill="none"/></g><g transform="translate(903.3,560.7) rotate(20)"><path d="M0 -11.0 Q4.2 -7.2 7.6 -0.4 A7.6 7.6 0 1 1 -7.6 -0.4 Q-4.2 -7.2 0 -11.0Z" fill="#F0B47C" stroke="#3E2A1E" stroke-width="1.59"/><path d="M-2.6 -12.9 L0 -9.8 L2.6 -13.2" stroke="#4A5060" stroke-width="1.46" fill="none"/></g><g transform="translate(916.6,558.4) rotate(20)"><path d="M0 -11.0 Q4.2 -7.2 7.6 -0.4 A7.6 7.6 0 1 1 -7.6 -0.4 Q-4.2 -7.2 0 -11.0Z" fill="#F0B47C" stroke="#3E2A1E" stroke-width="1.59"/><path d="M-2.6 -12.9 L0 -9.8 L2.6 -13.2" stroke="#4A5060" stroke-width="1.46" fill="none"/></g><g transform="translate(930.0,556.2) rotate(20)"><path d="M0 -11.0 Q4.2 -7.2 7.6 -0.4 A7.6 7.6 0 1 1 -7.6 -0.4 Q-4.2 -7.2 0 -11.0Z" fill="#F0B47C" stroke="#3E2A1E" stroke-width="1.59"/><path d="M-2.6 -12.9 L0 -9.8 L2.6 -13.2" stroke="#4A5060" stroke-width="1.46" fill="none"/></g><g transform="translate(943.3,553.9) rotate(20)"><path d="M0 -11.0 Q4.2 -7.2 7.6 -0.4 A7.6 7.6 0 1 1 -7.6 -0.4 Q-4.2 -7.2 0 -11.0Z" fill="#F0B47C" stroke="#3E2A1E" stroke-width="1.59"/><path d="M-2.6 -12.9 L0 -9.8 L2.6 -13.2" stroke="#4A5060" stroke-width="1.46" fill="none"/></g><g transform="translate(956.6,551.6) rotate(20)"><path d="M0 -11.0 Q4.2 -7.2 7.6 -0.4 A7.6 7.6 0 1 1 -7.6 -0.4 Q-4.2 -7.2 0 -11.0Z" fill="#F0B47C" stroke="#3E2A1E" stroke-width="1.59"/><path d="M-2.6 -12.9 L0 -9.8 L2.6 -13.2" stroke="#4A5060" stroke-width="1.46" fill="none"/></g><g transform="translate(970.0,549.3) rotate(20)"><path d="M0 -11.0 Q4.2 -7.2 7.6 -0.4 A7.6 7.6 0 1 1 -7.6 -0.4 Q-4.2 -7.2 0 -11.0Z" fill="#F0B47C" stroke="#3E2A1E" stroke-width="1.59"/><path d="M-2.6 -12.9 L0 -9.8 L2.6 -13.2" stroke="#4A5060" stroke-width="1.46" fill="none"/></g><g transform="translate(983.3,547.0) rotate(20)"><path d="M0 -11.0 Q4.2 -7.2 7.6 -0.4 A7.6 7.6 0 1 1 -7.6 -0.4 Q-4.2 -7.2 0 -11.0Z" fill="#F0B47C" stroke="#3E2A1E" stroke-width="1.59"/><path d="M-2.6 -12.9 L0 -9.8 L2.6 -13.2" stroke="#4A5060" stroke-width="1.46" fill="none"/></g><g transform="translate(996.6,544.7) rotate(20)"><path d="M0 -11.0 Q4.2 -7.2 7.6 -0.4 A7.6 7.6 0 1 1 -7.6 -0.4 Q-4.2 -7.2 0 -11.0Z" fill="#F0B47C" stroke="#3E2A1E" stroke-width="1.59"/><path d="M-2.6 -12.9 L0 -9.8 L2.6 -13.2" stroke="#4A5060" stroke-width="1.46" fill="none"/></g><g transform="translate(1010.0,542.4) rotate(20)"><path d="M0 -11.0 Q4.2 -7.2 7.6 -0.4 A7.6 7.6 0 1 1 -7.6 -0.4 Q-4.2 -7.2 0 -11.0Z" fill="#F0B47C" stroke="#3E2A1E" stroke-width="1.59"/><path d="M-2.6 -12.9 L0 -9.8 L2.6 -13.2" stroke="#4A5060" stroke-width="1.46" fill="none"/></g><g transform="translate(1023.3,540.1) rotate(20)"><path d="M0 -11.0 Q4.2 -7.2 7.6 -0.4 A7.6 7.6 0 1 1 -7.6 -0.4 Q-4.2 -7.2 0 -11.0Z" fill="#F0B47C" stroke="#3E2A1E" stroke-width="1.59"/><path d="M-2.6 -12.9 L0 -9.8 L2.6 -13.2" stroke="#4A5060" stroke-width="1.46" fill="none"/></g><g transform="translate(1036.6,537.8) rotate(20)"><path d="M0 -11.0 Q4.2 -7.2 7.6 -0.4 A7.6 7.6 0 1 1 -7.6 -0.4 Q-4.2 -7.2 0 -11.0Z" fill="#F0B47C" stroke="#3E2A1E" stroke-width="1.59"/><path d="M-2.6 -12.9 L0 -9.8 L2.6 -13.2" stroke="#4A5060" stroke-width="1.46" fill="none"/></g><g transform="translate(1049.9,535.5) rotate(20)"><path d="M0 -11.0 Q4.2 -7.2 7.6 -0.4 A7.6 7.6 0 1 1 -7.6 -0.4 Q-4.2 -7.2 0 -11.0Z" fill="#F0B47C" stroke="#3E2A1E" stroke-width="1.59"/><path d="M-2.6 -12.9 L0 -9.8 L2.6 -13.2" stroke="#4A5060" stroke-width="1.46" fill="none"/></g><g transform="translate(1063.3,533.2) rotate(20)"><path d="M0 -11.0 Q4.2 -7.2 7.6 -0.4 A7.6 7.6 0 1 1 -7.6 -0.4 Q-4.2 -7.2 0 -11.0Z" fill="#F0B47C" stroke="#3E2A1E" stroke-width="1.59"/><path d="M-2.6 -12.9 L0 -9.8 L2.6 -13.2" stroke="#4A5060" stroke-width="1.46" fill="none"/></g><g transform="translate(1076.6,530.9) rotate(20)"><path d="M0 -11.0 Q4.2 -7.2 7.6 -0.4 A7.6 7.6 0 1 1 -7.6 -0.4 Q-4.2 -7.2 0 -11.0Z" fill="#F0B47C" stroke="#3E2A1E" stroke-width="1.59"/><path d="M-2.6 -12.9 L0 -9.8 L2.6 -13.2" stroke="#4A5060" stroke-width="1.46" fill="none"/></g><g transform="translate(1089.9,528.6) rotate(20)"><path d="M0 -11.0 Q4.2 -7.2 7.6 -0.4 A7.6 7.6 0 1 1 -7.6 -0.4 Q-4.2 -7.2 0 -11.0Z" fill="#F0B47C" stroke="#3E2A1E" stroke-width="1.59"/><path d="M-2.6 -12.9 L0 -9.8 L2.6 -13.2" stroke="#4A5060" stroke-width="1.46" fill="none"/></g><g transform="translate(1103.3,526.4) rotate(20)"><path d="M0 -11.0 Q4.2 -7.2 7.6 -0.4 A7.6 7.6 0 1 1 -7.6 -0.4 Q-4.2 -7.2 0 -11.0Z" fill="#F0B47C" stroke="#3E2A1E" stroke-width="1.59"/><path d="M-2.6 -12.9 L0 -9.8 L2.6 -13.2" stroke="#4A5060" stroke-width="1.46" fill="none"/></g><g transform="translate(1116.6,524.1) rotate(20)"><path d="M0 -11.0 Q4.2 -7.2 7.6 -0.4 A7.6 7.6 0 1 1 -7.6 -0.4 Q-4.2 -7.2 0 -11.0Z" fill="#F0B47C" stroke="#3E2A1E" stroke-width="1.59"/><path d="M-2.6 -12.9 L0 -9.8 L2.6 -13.2" stroke="#4A5060" stroke-width="1.46" fill="none"/></g><g transform="translate(1129.9,521.8) rotate(20)"><path d="M0 -11.0 Q4.2 -7.2 7.6 -0.4 A7.6 7.6 0 1 1 -7.6 -0.4 Q-4.2 -7.2 0 -11.0Z" fill="#F0B47C" stroke="#3E2A1E" stroke-width="1.59"/><path d="M-2.6 -12.9 L0 -9.8 L2.6 -13.2" stroke="#4A5060" stroke-width="1.46" fill="none"/></g><g transform="translate(1143.2,519.5) rotate(20)"><path d="M0 -11.0 Q4.2 -7.2 7.6 -0.4 A7.6 7.6 0 1 1 -7.6 -0.4 Q-4.2 -7.2 0 -11.0Z" fill="#F0B47C" stroke="#3E2A1E" stroke-width="1.59"/><path d="M-2.6 -12.9 L0 -9.8 L2.6 -13.2" stroke="#4A5060" stroke-width="1.46" fill="none"/></g><g transform="translate(1156.6,517.2) rotate(20)"><path d="M0 -11.0 Q4.2 -7.2 7.6 -0.4 A7.6 7.6 0 1 1 -7.6 -0.4 Q-4.2 -7.2 0 -11.0Z" fill="#F0B47C" stroke="#3E2A1E" stroke-width="1.59"/><path d="M-2.6 -12.9 L0 -9.8 L2.6 -13.2" stroke="#4A5060" stroke-width="1.46" fill="none"/></g><g transform="translate(1169.9,514.9) rotate(20)"><path d="M0 -11.0 Q4.2 -7.2 7.6 -0.4 A7.6 7.6 0 1 1 -7.6 -0.4 Q-4.2 -7.2 0 -11.0Z" fill="#F0B47C" stroke="#3E2A1E" stroke-width="1.59"/><path d="M-2.6 -12.9 L0 -9.8 L2.6 -13.2" stroke="#4A5060" stroke-width="1.46" fill="none"/></g><g transform="translate(1183.2,512.6) rotate(20)"><path d="M0 -11.0 Q4.2 -7.2 7.6 -0.4 A7.6 7.6 0 1 1 -7.6 -0.4 Q-4.2 -7.2 0 -11.0Z" fill="#F0B47C" stroke="#3E2A1E" stroke-width="1.59"/><path d="M-2.6 -12.9 L0 -9.8 L2.6 -13.2" stroke="#4A5060" stroke-width="1.46" fill="none"/></g><g transform="translate(1196.6,510.3) rotate(20)"><path d="M0 -11.0 Q4.2 -7.2 7.6 -0.4 A7.6 7.6 0 1 1 -7.6 -0.4 Q-4.2 -7.2 0 -11.0Z" fill="#F0B47C" stroke="#3E2A1E" stroke-width="1.59"/><path d="M-2.6 -12.9 L0 -9.8 L2.6 -13.2" stroke="#4A5060" stroke-width="1.46" fill="none"/></g><g transform="translate(1209.9,508.0) rotate(20)"><path d="M0 -11.0 Q4.2 -7.2 7.6 -0.4 A7.6 7.6 0 1 1 -7.6 -0.4 Q-4.2 -7.2 0 -11.0Z" fill="#F0B47C" stroke="#3E2A1E" stroke-width="1.59"/><path d="M-2.6 -12.9 L0 -9.8 L2.6 -13.2" stroke="#4A5060" stroke-width="1.46" fill="none"/></g><g transform="translate(1223.2,505.7) rotate(20)"><path d="M0 -11.0 Q4.2 -7.2 7.6 -0.4 A7.6 7.6 0 1 1 -7.6 -0.4 Q-4.2 -7.2 0 -11.0Z" fill="#F0B47C" stroke="#3E2A1E" stroke-width="1.59"/><path d="M-2.6 -12.9 L0 -9.8 L2.6 -13.2" stroke="#4A5060" stroke-width="1.46" fill="none"/></g><g transform="translate(1236.6,503.4) rotate(20)"><path d="M0 -11.0 Q4.2 -7.2 7.6 -0.4 A7.6 7.6 0 1 1 -7.6 -0.4 Q-4.2 -7.2 0 -11.0Z" fill="#F0B47C" stroke="#3E2A1E" stroke-width="1.59"/><path d="M-2.6 -12.9 L0 -9.8 L2.6 -13.2" stroke="#4A5060" stroke-width="1.46" fill="none"/></g><g transform="translate(1249.9,501.1) rotate(20)"><path d="M0 -11.0 Q4.2 -7.2 7.6 -0.4 A7.6 7.6 0 1 1 -7.6 -0.4 Q-4.2 -7.2 0 -11.0Z" fill="#F0B47C" stroke="#3E2A1E" stroke-width="1.59"/><path d="M-2.6 -12.9 L0 -9.8 L2.6 -13.2" stroke="#4A5060" stroke-width="1.46" fill="none"/></g><g transform="translate(1263.2,498.8) rotate(20)"><path d="M0 -11.0 Q4.2 -7.2 7.6 -0.4 A7.6 7.6 0 1 1 -7.6 -0.4 Q-4.2 -7.2 0 -11.0Z" fill="#F0B47C" stroke="#3E2A1E" stroke-width="1.59"/><path d="M-2.6 -12.9 L0 -9.8 L2.6 -13.2" stroke="#4A5060" stroke-width="1.46" fill="none"/></g><g transform="translate(1276.5,496.5) rotate(20)"><path d="M0 -11.0 Q4.2 -7.2 7.6 -0.4 A7.6 7.6 0 1 1 -7.6 -0.4 Q-4.2 -7.2 0 -11.0Z" fill="#F0B47C" stroke="#3E2A1E" stroke-width="1.59"/><path d="M-2.6 -12.9 L0 -9.8 L2.6 -13.2" stroke="#4A5060" stroke-width="1.46" fill="none"/></g><g transform="translate(1289.9,494.3) rotate(20)"><path d="M0 -11.0 Q4.2 -7.2 7.6 -0.4 A7.6 7.6 0 1 1 -7.6 -0.4 Q-4.2 -7.2 0 -11.0Z" fill="#F0B47C" stroke="#3E2A1E" stroke-width="1.59"/><path d="M-2.6 -12.9 L0 -9.8 L2.6 -13.2" stroke="#4A5060" stroke-width="1.46" fill="none"/></g><g transform="translate(1303.2,492.0) rotate(20)"><path d="M0 -11.0 Q4.2 -7.2 7.6 -0.4 A7.6 7.6 0 1 1 -7.6 -0.4 Q-4.2 -7.2 0 -11.0Z" fill="#F0B47C" stroke="#3E2A1E" stroke-width="1.59"/><path d="M-2.6 -12.9 L0 -9.8 L2.6 -13.2" stroke="#4A5060" stroke-width="1.46" fill="none"/></g><g transform="translate(1316.5,489.7) rotate(20)"><path d="M0 -11.0 Q4.2 -7.2 7.6 -0.4 A7.6 7.6 0 1 1 -7.6 -0.4 Q-4.2 -7.2 0 -11.0Z" fill="#F0B47C" stroke="#3E2A1E" stroke-width="1.59"/><path d="M-2.6 -12.9 L0 -9.8 L2.6 -13.2" stroke="#4A5060" stroke-width="1.46" fill="none"/></g><g transform="translate(1329.9,487.4) rotate(20)"><path d="M0 -11.0 Q4.2 -7.2 7.6 -0.4 A7.6 7.6 0 1 1 -7.6 -0.4 Q-4.2 -7.2 0 -11.0Z" fill="#F0B47C" stroke="#3E2A1E" stroke-width="1.59"/><path d="M-2.6 -12.9 L0 -9.8 L2.6 -13.2" stroke="#4A5060" stroke-width="1.46" fill="none"/></g><g transform="translate(1343.2,485.1) rotate(20)"><path d="M0 -11.0 Q4.2 -7.2 7.6 -0.4 A7.6 7.6 0 1 1 -7.6 -0.4 Q-4.2 -7.2 0 -11.0Z" fill="#F0B47C" stroke="#3E2A1E" stroke-width="1.59"/><path d="M-2.6 -12.9 L0 -9.8 L2.6 -13.2" stroke="#4A5060" stroke-width="1.46" fill="none"/></g><g transform="translate(1356.5,482.8) rotate(20)"><path d="M0 -11.0 Q4.2 -7.2 7.6 -0.4 A7.6 7.6 0 1 1 -7.6 -0.4 Q-4.2 -7.2 0 -11.0Z" fill="#F0B47C" stroke="#3E2A1E" stroke-width="1.59"/><path d="M-2.6 -12.9 L0 -9.8 L2.6 -13.2" stroke="#4A5060" stroke-width="1.46" fill="none"/></g><g transform="translate(1369.9,480.5) rotate(20)"><path d="M0 -11.0 Q4.2 -7.2 7.6 -0.4 A7.6 7.6 0 1 1 -7.6 -0.4 Q-4.2 -7.2 0 -11.0Z" fill="#F0B47C" stroke="#3E2A1E" stroke-width="1.59"/><path d="M-2.6 -12.9 L0 -9.8 L2.6 -13.2" stroke="#4A5060" stroke-width="1.46" fill="none"/></g><g transform="translate(1383.2,478.2) rotate(20)"><path d="M0 -11.0 Q4.2 -7.2 7.6 -0.4 A7.6 7.6 0 1 1 -7.6 -0.4 Q-4.2 -7.2 0 -11.0Z" fill="#F0B47C" stroke="#3E2A1E" stroke-width="1.59"/><path d="M-2.6 -12.9 L0 -9.8 L2.6 -13.2" stroke="#4A5060" stroke-width="1.46" fill="none"/></g><g transform="translate(1396.5,475.9) rotate(20)"><path d="M0 -11.0 Q4.2 -7.2 7.6 -0.4 A7.6 7.6 0 1 1 -7.6 -0.4 Q-4.2 -7.2 0 -11.0Z" fill="#F0B47C" stroke="#3E2A1E" stroke-width="1.59"/><path d="M-2.6 -12.9 L0 -9.8 L2.6 -13.2" stroke="#4A5060" stroke-width="1.46" fill="none"/></g><g transform="translate(1409.8,473.6) rotate(20)"><path d="M0 -11.0 Q4.2 -7.2 7.6 -0.4 A7.6 7.6 0 1 1 -7.6 -0.4 Q-4.2 -7.2 0 -11.0Z" fill="#F0B47C" stroke="#3E2A1E" stroke-width="1.59"/><path d="M-2.6 -12.9 L0 -9.8 L2.6 -13.2" stroke="#4A5060" stroke-width="1.46" fill="none"/></g><g transform="translate(1423.2,471.3) rotate(20)"><path d="M0 -11.0 Q4.2 -7.2 7.6 -0.4 A7.6 7.6 0 1 1 -7.6 -0.4 Q-4.2 -7.2 0 -11.0Z" fill="#F0B47C" stroke="#3E2A1E" stroke-width="1.59"/><path d="M-2.6 -12.9 L0 -9.8 L2.6 -13.2" stroke="#4A5060" stroke-width="1.46" fill="none"/></g><path d="M878.0 605.0 L877.0 629.0 Q881.0 633.0 885.0 629.0 L884.0 605.0 Z" fill="#F8FCF6" stroke="#2B3A2B" stroke-width="1"/><path d="M880.0 608.0 V626.0" stroke="#8CC08A" stroke-width="1.3"/><path d="M877.0 628.0 Q881.0 635.0 885.0 628.0 L884.5 633.5 Q881.0 636.5 877.5 633.5Z" fill="#333"/><path d="M878.0 607.0 L873.5 595.0 L878.0 598.0 L880.0 591.0 L883.0 598.0 L888.0 594.0 L884.0 607.0 Z" fill="#2F5A2F" stroke="#102010" stroke-width="0.9"/><path d="M880.0 606.0 L880.0 597.0 M882.0 606.0 L884.0 598.0" stroke="#DDEEDD" stroke-width="0.8"/><path d="M898.4 601.7 L897.4 625.7 Q901.4 629.7 905.4 625.7 L904.4 601.7 Z" fill="#F8FCF6" stroke="#2B3A2B" stroke-width="1"/><path d="M900.4 604.7 V622.7" stroke="#8CC08A" stroke-width="1.3"/><path d="M897.4 624.7 Q901.4 631.7 905.4 624.7 L904.9 630.2 Q901.4 633.2 897.9 630.2Z" fill="#333"/><path d="M898.4 603.7 L893.9 591.7 L898.4 594.7 L900.4 587.7 L903.4 594.7 L908.4 590.7 L904.4 603.7 Z" fill="#2F5A2F" stroke="#102010" stroke-width="0.9"/><path d="M900.4 602.7 L900.4 593.7 M902.4 602.7 L904.4 594.7" stroke="#DDEEDD" stroke-width="0.8"/><path d="M918.8 598.4 L917.8 622.4 Q921.8 626.4 925.8 622.4 L924.8 598.4 Z" fill="#F8FCF6" stroke="#2B3A2B" stroke-width="1"/><path d="M920.8 601.4 V619.4" stroke="#8CC08A" stroke-width="1.3"/><path d="M917.8 621.4 Q921.8 628.4 925.8 621.4 L925.3 626.9 Q921.8 629.9 918.3 626.9Z" fill="#333"/><path d="M918.8 600.4 L914.3 588.4 L918.8 591.4 L920.8 584.4 L923.8 591.4 L928.8 587.4 L924.8 600.4 Z" fill="#2F5A2F" stroke="#102010" stroke-width="0.9"/><path d="M920.8 599.4 L920.8 590.4 M922.8 599.4 L924.8 591.4" stroke="#DDEEDD" stroke-width="0.8"/><path d="M939.2 595.1 L938.2 619.1 Q942.2 623.1 946.2 619.1 L945.2 595.1 Z" fill="#F8FCF6" stroke="#2B3A2B" stroke-width="1"/><path d="M941.2 598.1 V616.1" stroke="#8CC08A" stroke-width="1.3"/><path d="M938.2 618.1 Q942.2 625.1 946.2 618.1 L945.7 623.6 Q942.2 626.6 938.7 623.6Z" fill="#333"/><path d="M939.2 597.1 L934.7 585.1 L939.2 588.1 L941.2 581.1 L944.2 588.1 L949.2 584.1 L945.2 597.1 Z" fill="#2F5A2F" stroke="#102010" stroke-width="0.9"/><path d="M941.2 596.1 L941.2 587.1 M943.2 596.1 L945.2 588.1" stroke="#DDEEDD" stroke-width="0.8"/><path d="M959.6 591.8 L958.6 615.8 Q962.6 619.8 966.6 615.8 L965.6 591.8 Z" fill="#F8FCF6" stroke="#2B3A2B" stroke-width="1"/><path d="M961.6 594.8 V612.8" stroke="#8CC08A" stroke-width="1.3"/><path d="M958.6 614.8 Q962.6 621.8 966.6 614.8 L966.1 620.3 Q962.6 623.3 959.1 620.3Z" fill="#333"/><path d="M959.6 593.8 L955.1 581.8 L959.6 584.8 L961.6 577.8 L964.6 584.8 L969.6 580.8 L965.6 593.8 Z" fill="#2F5A2F" stroke="#102010" stroke-width="0.9"/><path d="M961.6 592.8 L961.6 583.8 M963.6 592.8 L965.6 584.8" stroke="#DDEEDD" stroke-width="0.8"/><path d="M980.0 588.5 L979.0 612.5 Q983.0 616.5 987.0 612.5 L986.0 588.5 Z" fill="#F8FCF6" stroke="#2B3A2B" stroke-width="1"/><path d="M982.0 591.5 V609.5" stroke="#8CC08A" stroke-width="1.3"/><path d="M979.0 611.5 Q983.0 618.5 987.0 611.5 L986.5 617.0 Q983.0 620.0 979.5 617.0Z" fill="#333"/><path d="M980.0 590.5 L975.5 578.5 L980.0 581.5 L982.0 574.5 L985.0 581.5 L990.0 577.5 L986.0 590.5 Z" fill="#2F5A2F" stroke="#102010" stroke-width="0.9"/><path d="M982.0 589.5 L982.0 580.5 M984.0 589.5 L986.0 581.5" stroke="#DDEEDD" stroke-width="0.8"/><path d="M1000.4 585.2 L999.4 609.2 Q1003.4 613.2 1007.4 609.2 L1006.4 585.2 Z" fill="#F8FCF6" stroke="#2B3A2B" stroke-width="1"/><path d="M1002.4 588.2 V606.2" stroke="#8CC08A" stroke-width="1.3"/><path d="M999.4 608.2 Q1003.4 615.2 1007.4 608.2 L1006.9 613.7 Q1003.4 616.7 999.9 613.7Z" fill="#333"/><path d="M1000.4 587.2 L995.9 575.2 L1000.4 578.2 L1002.4 571.2 L1005.4 578.2 L1010.4 574.2 L1006.4 587.2 Z" fill="#2F5A2F" stroke="#102010" stroke-width="0.9"/><path d="M1002.4 586.2 L1002.4 577.2 M1004.4 586.2 L1006.4 578.2" stroke="#DDEEDD" stroke-width="0.8"/><path d="M1020.8 581.9 L1019.8 605.9 Q1023.8 609.9 1027.8 605.9 L1026.8 581.9 Z" fill="#F8FCF6" stroke="#2B3A2B" stroke-width="1"/><path d="M1022.8 584.9 V602.9" stroke="#8CC08A" stroke-width="1.3"/><path d="M1019.8 604.9 Q1023.8 611.9 1027.8 604.9 L1027.3 610.4 Q1023.8 613.4 1020.3 610.4Z" fill="#333"/><path d="M1020.8 583.9 L1016.3 571.9 L1020.8 574.9 L1022.8 567.9 L1025.8 574.9 L1030.8 570.9 L1026.8 583.9 Z" fill="#2F5A2F" stroke="#102010" stroke-width="0.9"/><path d="M1022.8 582.9 L1022.8 573.9 M1024.8 582.9 L1026.8 574.9" stroke="#DDEEDD" stroke-width="0.8"/><path d="M1041.2 578.6 L1040.2 602.6 Q1044.2 606.6 1048.2 602.6 L1047.2 578.6 Z" fill="#F8FCF6" stroke="#2B3A2B" stroke-width="1"/><path d="M1043.2 581.6 V599.6" stroke="#8CC08A" stroke-width="1.3"/><path d="M1040.2 601.6 Q1044.2 608.6 1048.2 601.6 L1047.7 607.1 Q1044.2 610.1 1040.7 607.1Z" fill="#333"/><path d="M1041.2 580.6 L1036.7 568.6 L1041.2 571.6 L1043.2 564.6 L1046.2 571.6 L1051.2 567.6 L1047.2 580.6 Z" fill="#2F5A2F" stroke="#102010" stroke-width="0.9"/><path d="M1043.2 579.6 L1043.2 570.6 M1045.2 579.6 L1047.2 571.6" stroke="#DDEEDD" stroke-width="0.8"/><path d="M1061.6 575.3 L1060.6 599.3 Q1064.6 603.3 1068.6 599.3 L1067.6 575.3 Z" fill="#F8FCF6" stroke="#2B3A2B" stroke-width="1"/><path d="M1063.6 578.3 V596.3" stroke="#8CC08A" stroke-width="1.3"/><path d="M1060.6 598.3 Q1064.6 605.3 1068.6 598.3 L1068.1 603.8 Q1064.6 606.8 1061.1 603.8Z" fill="#333"/><path d="M1061.6 577.3 L1057.1 565.3 L1061.6 568.3 L1063.6 561.3 L1066.6 568.3 L1071.6 564.3 L1067.6 577.3 Z" fill="#2F5A2F" stroke="#102010" stroke-width="0.9"/><path d="M1063.6 576.3 L1063.6 567.3 M1065.6 576.3 L1067.6 568.3" stroke="#DDEEDD" stroke-width="0.8"/><path d="M1082.0 572.0 L1081.0 596.0 Q1085.0 600.0 1089.0 596.0 L1088.0 572.0 Z" fill="#F8FCF6" stroke="#2B3A2B" stroke-width="1"/><path d="M1084.0 575.0 V593.0" stroke="#8CC08A" stroke-width="1.3"/><path d="M1081.0 595.0 Q1085.0 602.0 1089.0 595.0 L1088.5 600.5 Q1085.0 603.5 1081.5 600.5Z" fill="#333"/><path d="M1082.0 574.0 L1077.5 562.0 L1082.0 565.0 L1084.0 558.0 L1087.0 565.0 L1092.0 561.0 L1088.0 574.0 Z" fill="#2F5A2F" stroke="#102010" stroke-width="0.9"/><path d="M1084.0 573.0 L1084.0 564.0 M1086.0 573.0 L1088.0 565.0" stroke="#DDEEDD" stroke-width="0.8"/><g transform="translate(887.0,651.0) rotate(0)"><path d="M0 -9.7 Q4.4 -7.7 8.1 -0.4 A8.1 8.1 0 1 1 -8.1 -0.4 Q-4.4 -7.7 0 -9.7Z" fill="#F0B47C" stroke="#3E2A1E" stroke-width="1.69"/><path d="M-2.8 -11.7 L0 -8.5 L2.8 -12.1" stroke="#4A5060" stroke-width="1.56" fill="none"/></g><g transform="translate(904.3,651.0) rotate(0)"><path d="M0 -9.7 Q4.4 -7.7 8.1 -0.4 A8.1 8.1 0 1 1 -8.1 -0.4 Q-4.4 -7.7 0 -9.7Z" fill="#F0B47C" stroke="#3E2A1E" stroke-width="1.69"/><path d="M-2.8 -11.7 L0 -8.5 L2.8 -12.1" stroke="#4A5060" stroke-width="1.56" fill="none"/></g><g transform="translate(921.6,651.0) rotate(0)"><path d="M0 -9.7 Q4.4 -7.7 8.1 -0.4 A8.1 8.1 0 1 1 -8.1 -0.4 Q-4.4 -7.7 0 -9.7Z" fill="#F0B47C" stroke="#3E2A1E" stroke-width="1.69"/><path d="M-2.8 -11.7 L0 -8.5 L2.8 -12.1" stroke="#4A5060" stroke-width="1.56" fill="none"/></g><g transform="translate(938.9,651.0) rotate(0)"><path d="M0 -9.7 Q4.4 -7.7 8.1 -0.4 A8.1 8.1 0 1 1 -8.1 -0.4 Q-4.4 -7.7 0 -9.7Z" fill="#F0B47C" stroke="#3E2A1E" stroke-width="1.69"/><path d="M-2.8 -11.7 L0 -8.5 L2.8 -12.1" stroke="#4A5060" stroke-width="1.56" fill="none"/></g><g transform="translate(956.2,651.0) rotate(0)"><path d="M0 -9.7 Q4.4 -7.7 8.1 -0.4 A8.1 8.1 0 1 1 -8.1 -0.4 Q-4.4 -7.7 0 -9.7Z" fill="#F0B47C" stroke="#3E2A1E" stroke-width="1.69"/><path d="M-2.8 -11.7 L0 -8.5 L2.8 -12.1" stroke="#4A5060" stroke-width="1.56" fill="none"/></g><g transform="translate(1227.0,638.0) rotate(0)"><path d="M0 -9.7 Q4.4 -7.7 8.1 -0.4 A8.1 8.1 0 1 1 -8.1 -0.4 Q-4.4 -7.7 0 -9.7Z" fill="#F0B47C" stroke="#3E2A1E" stroke-width="1.69"/><path d="M-2.8 -11.7 L0 -8.5 L2.8 -12.1" stroke="#4A5060" stroke-width="1.56" fill="none"/></g><g transform="translate(1244.3,638.0) rotate(0)"><path d="M0 -9.7 Q4.4 -7.7 8.1 -0.4 A8.1 8.1 0 1 1 -8.1 -0.4 Q-4.4 -7.7 0 -9.7Z" fill="#F0B47C" stroke="#3E2A1E" stroke-width="1.69"/><path d="M-2.8 -11.7 L0 -8.5 L2.8 -12.1" stroke="#4A5060" stroke-width="1.56" fill="none"/></g><g transform="translate(1261.6,638.0) rotate(0)"><path d="M0 -9.7 Q4.4 -7.7 8.1 -0.4 A8.1 8.1 0 1 1 -8.1 -0.4 Q-4.4 -7.7 0 -9.7Z" fill="#F0B47C" stroke="#3E2A1E" stroke-width="1.69"/><path d="M-2.8 -11.7 L0 -8.5 L2.8 -12.1" stroke="#4A5060" stroke-width="1.56" fill="none"/></g><g transform="translate(1278.9,638.0) rotate(0)"><path d="M0 -9.7 Q4.4 -7.7 8.1 -0.4 A8.1 8.1 0 1 1 -8.1 -0.4 Q-4.4 -7.7 0 -9.7Z" fill="#F0B47C" stroke="#3E2A1E" stroke-width="1.69"/><path d="M-2.8 -11.7 L0 -8.5 L2.8 -12.1" stroke="#4A5060" stroke-width="1.56" fill="none"/></g><g transform="translate(1310.0,728.0) rotate(0)"><path d="M0 -9.9 Q3.8 -6.5 6.8 -0.3 A6.8 6.8 0 1 1 -6.8 -0.3 Q-3.8 -6.5 0 -9.9Z" fill="#F0B47C" stroke="#3E2A1E" stroke-width="1.43"/><path d="M-2.4 -11.6 L0 -8.9 L2.4 -11.9" stroke="#4A5060" stroke-width="1.32" fill="none"/></g><path d="M979.0 632 Q983.0 628.5 987.0 632 Q986.5 643 983.8 653 L982.2 653 Q979.5 643 979.0 632 Z" fill="#F08A3A" stroke="#4A2810" stroke-width="0.9"/><path d="M981.0 637 H983.5 M982.5 642 H985.0" stroke="#8A4A20" stroke-width="0.7"/><path d="M983.0 631 L979.5 624 M983.0 631 L983.5 622.5 M983.0 631 L986.5 624.5" stroke="#1E5A22" stroke-width="1.8"/><path d="M992.5 632 Q996.5 628.5 1000.5 632 Q1000.0 643 997.3 653 L995.7 653 Q993.0 643 992.5 632 Z" fill="#F08A3A" stroke="#4A2810" stroke-width="0.9"/><path d="M994.5 637 H997.0 M996.0 642 H998.5" stroke="#8A4A20" stroke-width="0.7"/><path d="M996.5 631 L993.0 624 M996.5 631 L997.0 622.5 M996.5 631 L1000.0 624.5" stroke="#1E5A22" stroke-width="1.8"/><path d="M1006.0 632 Q1010.0 628.5 1014.0 632 Q1013.5 643 1010.8 653 L1009.2 653 Q1006.5 643 1006.0 632 Z" fill="#F08A3A" stroke="#4A2810" stroke-width="0.9"/><path d="M1008.0 637 H1010.5 M1009.5 642 H1012.0" stroke="#8A4A20" stroke-width="0.7"/><path d="M1010.0 631 L1006.5 624 M1010.0 631 L1010.5 622.5 M1010.0 631 L1013.5 624.5" stroke="#1E5A22" stroke-width="1.8"/><path d="M1019.5 632 Q1023.5 628.5 1027.5 632 Q1027.0 643 1024.3 653 L1022.7 653 Q1020.0 643 1019.5 632 Z" fill="#F08A3A" stroke="#4A2810" stroke-width="0.9"/><path d="M1021.5 637 H1024.0 M1023.0 642 H1025.5" stroke="#8A4A20" stroke-width="0.7"/><path d="M1023.5 631 L1020.0 624 M1023.5 631 L1024.0 622.5 M1023.5 631 L1027.0 624.5" stroke="#1E5A22" stroke-width="1.8"/><path d="M1033.0 632 Q1037.0 628.5 1041.0 632 Q1040.5 643 1037.8 653 L1036.2 653 Q1033.5 643 1033.0 632 Z" fill="#F08A3A" stroke="#4A2810" stroke-width="0.9"/><path d="M1035.0 637 H1037.5 M1036.5 642 H1039.0" stroke="#8A4A20" stroke-width="0.7"/><path d="M1037.0 631 L1033.5 624 M1037.0 631 L1037.5 622.5 M1037.0 631 L1040.5 624.5" stroke="#1E5A22" stroke-width="1.8"/><path d="M1046.5 632 Q1050.5 628.5 1054.5 632 Q1054.0 643 1051.3 653 L1049.7 653 Q1047.0 643 1046.5 632 Z" fill="#F08A3A" stroke="#4A2810" stroke-width="0.9"/><path d="M1048.5 637 H1051.0 M1050.0 642 H1052.5" stroke="#8A4A20" stroke-width="0.7"/><path d="M1050.5 631 L1047.0 624 M1050.5 631 L1051.0 622.5 M1050.5 631 L1054.0 624.5" stroke="#1E5A22" stroke-width="1.8"/><path d="M1060.0 632 Q1064.0 628.5 1068.0 632 Q1067.5 643 1064.8 653 L1063.2 653 Q1060.5 643 1060.0 632 Z" fill="#F08A3A" stroke="#4A2810" stroke-width="0.9"/><path d="M1062.0 637 H1064.5 M1063.5 642 H1066.0" stroke="#8A4A20" stroke-width="0.7"/><path d="M1064.0 631 L1060.5 624 M1064.0 631 L1064.5 622.5 M1064.0 631 L1067.5 624.5" stroke="#1E5A22" stroke-width="1.8"/><path d="M1073.5 632 Q1077.5 628.5 1081.5 632 Q1081.0 643 1078.3 653 L1076.7 653 Q1074.0 643 1073.5 632 Z" fill="#F08A3A" stroke="#4A2810" stroke-width="0.9"/><path d="M1075.5 637 H1078.0 M1077.0 642 H1079.5" stroke="#8A4A20" stroke-width="0.7"/><path d="M1077.5 631 L1074.0 624 M1077.5 631 L1078.0 622.5 M1077.5 631 L1081.0 624.5" stroke="#1E5A22" stroke-width="1.8"/><path d="M1087.0 632 Q1091.0 628.5 1095.0 632 Q1094.5 643 1091.8 653 L1090.2 653 Q1087.5 643 1087.0 632 Z" fill="#F08A3A" stroke="#4A2810" stroke-width="0.9"/><path d="M1089.0 637 H1091.5 M1090.5 642 H1093.0" stroke="#8A4A20" stroke-width="0.7"/><path d="M1091.0 631 L1087.5 624 M1091.0 631 L1091.5 622.5 M1091.0 631 L1094.5 624.5" stroke="#1E5A22" stroke-width="1.8"/><path d="M1100.5 632 Q1104.5 628.5 1108.5 632 Q1108.0 643 1105.3 653 L1103.7 653 Q1101.0 643 1100.5 632 Z" fill="#F08A3A" stroke="#4A2810" stroke-width="0.9"/><path d="M1102.5 637 H1105.0 M1104.0 642 H1106.5" stroke="#8A4A20" stroke-width="0.7"/><path d="M1104.5 631 L1101.0 624 M1104.5 631 L1105.0 622.5 M1104.5 631 L1108.0 624.5" stroke="#1E5A22" stroke-width="1.8"/><path d="M1114.0 632 Q1118.0 628.5 1122.0 632 Q1121.5 643 1118.8 653 L1117.2 653 Q1114.5 643 1114.0 632 Z" fill="#F08A3A" stroke="#4A2810" stroke-width="0.9"/><path d="M1116.0 637 H1118.5 M1117.5 642 H1120.0" stroke="#8A4A20" stroke-width="0.7"/><path d="M1118.0 631 L1114.5 624 M1118.0 631 L1118.5 622.5 M1118.0 631 L1121.5 624.5" stroke="#1E5A22" stroke-width="1.8"/><path d="M1127.5 632 Q1131.5 628.5 1135.5 632 Q1135.0 643 1132.3 653 L1130.7 653 Q1128.0 643 1127.5 632 Z" fill="#F08A3A" stroke="#4A2810" stroke-width="0.9"/><path d="M1129.5 637 H1132.0 M1131.0 642 H1133.5" stroke="#8A4A20" stroke-width="0.7"/><path d="M1131.5 631 L1128.0 624 M1131.5 631 L1132.0 622.5 M1131.5 631 L1135.0 624.5" stroke="#1E5A22" stroke-width="1.8"/><path d="M1141.0 632 Q1145.0 628.5 1149.0 632 Q1148.5 643 1145.8 653 L1144.2 653 Q1141.5 643 1141.0 632 Z" fill="#F08A3A" stroke="#4A2810" stroke-width="0.9"/><path d="M1143.0 637 H1145.5 M1144.5 642 H1147.0" stroke="#8A4A20" stroke-width="0.7"/><path d="M1145.0 631 L1141.5 624 M1145.0 631 L1145.5 622.5 M1145.0 631 L1148.5 624.5" stroke="#1E5A22" stroke-width="1.8"/><path d="M1154.5 632 Q1158.5 628.5 1162.5 632 Q1162.0 643 1159.3 653 L1157.7 653 Q1155.0 643 1154.5 632 Z" fill="#F08A3A" stroke="#4A2810" stroke-width="0.9"/><path d="M1156.5 637 H1159.0 M1158.0 642 H1160.5" stroke="#8A4A20" stroke-width="0.7"/><path d="M1158.5 631 L1155.0 624 M1158.5 631 L1159.0 622.5 M1158.5 631 L1162.0 624.5" stroke="#1E5A22" stroke-width="1.8"/><path d="M1168.0 632 Q1172.0 628.5 1176.0 632 Q1175.5 643 1172.8 653 L1171.2 653 Q1168.5 643 1168.0 632 Z" fill="#F08A3A" stroke="#4A2810" stroke-width="0.9"/><path d="M1170.0 637 H1172.5 M1171.5 642 H1174.0" stroke="#8A4A20" stroke-width="0.7"/><path d="M1172.0 631 L1168.5 624 M1172.0 631 L1172.5 622.5 M1172.0 631 L1175.5 624.5" stroke="#1E5A22" stroke-width="1.8"/><path d="M1181.5 632 Q1185.5 628.5 1189.5 632 Q1189.0 643 1186.3 653 L1184.7 653 Q1182.0 643 1181.5 632 Z" fill="#F08A3A" stroke="#4A2810" stroke-width="0.9"/><path d="M1183.5 637 H1186.0 M1185.0 642 H1187.5" stroke="#8A4A20" stroke-width="0.7"/><path d="M1185.5 631 L1182.0 624 M1185.5 631 L1186.0 622.5 M1185.5 631 L1189.0 624.5" stroke="#1E5A22" stroke-width="1.8"/><path d="M1195.0 632 Q1199.0 628.5 1203.0 632 Q1202.5 643 1199.8 653 L1198.2 653 Q1195.5 643 1195.0 632 Z" fill="#F08A3A" stroke="#4A2810" stroke-width="0.9"/><path d="M1197.0 637 H1199.5 M1198.5 642 H1201.0" stroke="#8A4A20" stroke-width="0.7"/><path d="M1199.0 631 L1195.5 624 M1199.0 631 L1199.5 622.5 M1199.0 631 L1202.5 624.5" stroke="#1E5A22" stroke-width="1.8"/><path d="M1131.8 568.0 Q1126.8 554.0 1132.8 546.0" stroke="#173E2C" stroke-width="3.2" fill="none" transform="rotate(35 1131.8 568.0)"/><path d="M1131.8 568.0 Q1126.8 554.0 1132.8 546.0" stroke="#3E8A66" stroke-width="1.8" fill="none" transform="rotate(35 1131.8 568.0)"/><path d="M1134.2 568.0 Q1129.2 554.0 1135.2 542.0" stroke="#173E2C" stroke-width="3.2" fill="none" transform="rotate(18 1134.2 568.0)"/><path d="M1134.2 568.0 Q1129.2 554.0 1135.2 542.0" stroke="#3E8A66" stroke-width="1.8" fill="none" transform="rotate(18 1134.2 568.0)"/><path d="M1136.6 568.0 Q1131.6 554.0 1137.6 541.0" stroke="#173E2C" stroke-width="3.2" fill="none" transform="rotate(4 1136.6 568.0)"/><path d="M1136.6 568.0 Q1131.6 554.0 1137.6 541.0" stroke="#3E8A66" stroke-width="1.8" fill="none" transform="rotate(4 1136.6 568.0)"/><path d="M1139.0 568.0 Q1134.0 554.0 1140.0 544.0" stroke="#173E2C" stroke-width="3.2" fill="none" transform="rotate(-10 1139.0 568.0)"/><path d="M1139.0 568.0 Q1134.0 554.0 1140.0 544.0" stroke="#3E8A66" stroke-width="1.8" fill="none" transform="rotate(-10 1139.0 568.0)"/><path d="M1140.8 568.0 Q1135.8 554.0 1141.8 548.0" stroke="#173E2C" stroke-width="3.2" fill="none" transform="rotate(-25 1140.8 568.0)"/><path d="M1140.8 568.0 Q1135.8 554.0 1141.8 548.0" stroke="#3E8A66" stroke-width="1.8" fill="none" transform="rotate(-25 1140.8 568.0)"/><path d="M1153.3 565.2 Q1148.3 551.2 1154.3 543.2" stroke="#173E2C" stroke-width="3.2" fill="none" transform="rotate(35 1153.3 565.2)"/><path d="M1153.3 565.2 Q1148.3 551.2 1154.3 543.2" stroke="#3E8A66" stroke-width="1.8" fill="none" transform="rotate(35 1153.3 565.2)"/><path d="M1155.7 565.2 Q1150.7 551.2 1156.7 539.2" stroke="#173E2C" stroke-width="3.2" fill="none" transform="rotate(18 1155.7 565.2)"/><path d="M1155.7 565.2 Q1150.7 551.2 1156.7 539.2" stroke="#3E8A66" stroke-width="1.8" fill="none" transform="rotate(18 1155.7 565.2)"/><path d="M1158.1 565.2 Q1153.1 551.2 1159.1 538.2" stroke="#173E2C" stroke-width="3.2" fill="none" transform="rotate(4 1158.1 565.2)"/><path d="M1158.1 565.2 Q1153.1 551.2 1159.1 538.2" stroke="#3E8A66" stroke-width="1.8" fill="none" transform="rotate(4 1158.1 565.2)"/><path d="M1160.5 565.2 Q1155.5 551.2 1161.5 541.2" stroke="#173E2C" stroke-width="3.2" fill="none" transform="rotate(-10 1160.5 565.2)"/><path d="M1160.5 565.2 Q1155.5 551.2 1161.5 541.2" stroke="#3E8A66" stroke-width="1.8" fill="none" transform="rotate(-10 1160.5 565.2)"/><path d="M1162.3 565.2 Q1157.3 551.2 1163.3 545.2" stroke="#173E2C" stroke-width="3.2" fill="none" transform="rotate(-25 1162.3 565.2)"/><path d="M1162.3 565.2 Q1157.3 551.2 1163.3 545.2" stroke="#3E8A66" stroke-width="1.8" fill="none" transform="rotate(-25 1162.3 565.2)"/><path d="M1174.8 562.4 Q1169.8 548.4 1175.8 540.4" stroke="#173E2C" stroke-width="3.2" fill="none" transform="rotate(35 1174.8 562.4)"/><path d="M1174.8 562.4 Q1169.8 548.4 1175.8 540.4" stroke="#3E8A66" stroke-width="1.8" fill="none" transform="rotate(35 1174.8 562.4)"/><path d="M1177.2 562.4 Q1172.2 548.4 1178.2 536.4" stroke="#173E2C" stroke-width="3.2" fill="none" transform="rotate(18 1177.2 562.4)"/><path d="M1177.2 562.4 Q1172.2 548.4 1178.2 536.4" stroke="#3E8A66" stroke-width="1.8" fill="none" transform="rotate(18 1177.2 562.4)"/><path d="M1179.6 562.4 Q1174.6 548.4 1180.6 535.4" stroke="#173E2C" stroke-width="3.2" fill="none" transform="rotate(4 1179.6 562.4)"/><path d="M1179.6 562.4 Q1174.6 548.4 1180.6 535.4" stroke="#3E8A66" stroke-width="1.8" fill="none" transform="rotate(4 1179.6 562.4)"/><path d="M1182.0 562.4 Q1177.0 548.4 1183.0 538.4" stroke="#173E2C" stroke-width="3.2" fill="none" transform="rotate(-10 1182.0 562.4)"/><path d="M1182.0 562.4 Q1177.0 548.4 1183.0 538.4" stroke="#3E8A66" stroke-width="1.8" fill="none" transform="rotate(-10 1182.0 562.4)"/><path d="M1183.8 562.4 Q1178.8 548.4 1184.8 542.4" stroke="#173E2C" stroke-width="3.2" fill="none" transform="rotate(-25 1183.8 562.4)"/><path d="M1183.8 562.4 Q1178.8 548.4 1184.8 542.4" stroke="#3E8A66" stroke-width="1.8" fill="none" transform="rotate(-25 1183.8 562.4)"/><path d="M1196.3 559.6 Q1191.3 545.6 1197.3 537.6" stroke="#173E2C" stroke-width="3.2" fill="none" transform="rotate(35 1196.3 559.6)"/><path d="M1196.3 559.6 Q1191.3 545.6 1197.3 537.6" stroke="#3E8A66" stroke-width="1.8" fill="none" transform="rotate(35 1196.3 559.6)"/><path d="M1198.7 559.6 Q1193.7 545.6 1199.7 533.6" stroke="#173E2C" stroke-width="3.2" fill="none" transform="rotate(18 1198.7 559.6)"/><path d="M1198.7 559.6 Q1193.7 545.6 1199.7 533.6" stroke="#3E8A66" stroke-width="1.8" fill="none" transform="rotate(18 1198.7 559.6)"/><path d="M1201.1 559.6 Q1196.1 545.6 1202.1 532.6" stroke="#173E2C" stroke-width="3.2" fill="none" transform="rotate(4 1201.1 559.6)"/><path d="M1201.1 559.6 Q1196.1 545.6 1202.1 532.6" stroke="#3E8A66" stroke-width="1.8" fill="none" transform="rotate(4 1201.1 559.6)"/><path d="M1203.5 559.6 Q1198.5 545.6 1204.5 535.6" stroke="#173E2C" stroke-width="3.2" fill="none" transform="rotate(-10 1203.5 559.6)"/><path d="M1203.5 559.6 Q1198.5 545.6 1204.5 535.6" stroke="#3E8A66" stroke-width="1.8" fill="none" transform="rotate(-10 1203.5 559.6)"/><path d="M1205.3 559.6 Q1200.3 545.6 1206.3 539.6" stroke="#173E2C" stroke-width="3.2" fill="none" transform="rotate(-25 1205.3 559.6)"/><path d="M1205.3 559.6 Q1200.3 545.6 1206.3 539.6" stroke="#3E8A66" stroke-width="1.8" fill="none" transform="rotate(-25 1205.3 559.6)"/><path d="M1217.8 556.8 Q1212.8 542.8 1218.8 534.8" stroke="#173E2C" stroke-width="3.2" fill="none" transform="rotate(35 1217.8 556.8)"/><path d="M1217.8 556.8 Q1212.8 542.8 1218.8 534.8" stroke="#3E8A66" stroke-width="1.8" fill="none" transform="rotate(35 1217.8 556.8)"/><path d="M1220.2 556.8 Q1215.2 542.8 1221.2 530.8" stroke="#173E2C" stroke-width="3.2" fill="none" transform="rotate(18 1220.2 556.8)"/><path d="M1220.2 556.8 Q1215.2 542.8 1221.2 530.8" stroke="#3E8A66" stroke-width="1.8" fill="none" transform="rotate(18 1220.2 556.8)"/><path d="M1222.6 556.8 Q1217.6 542.8 1223.6 529.8" stroke="#173E2C" stroke-width="3.2" fill="none" transform="rotate(4 1222.6 556.8)"/><path d="M1222.6 556.8 Q1217.6 542.8 1223.6 529.8" stroke="#3E8A66" stroke-width="1.8" fill="none" transform="rotate(4 1222.6 556.8)"/><path d="M1225.0 556.8 Q1220.0 542.8 1226.0 532.8" stroke="#173E2C" stroke-width="3.2" fill="none" transform="rotate(-10 1225.0 556.8)"/><path d="M1225.0 556.8 Q1220.0 542.8 1226.0 532.8" stroke="#3E8A66" stroke-width="1.8" fill="none" transform="rotate(-10 1225.0 556.8)"/><path d="M1226.8 556.8 Q1221.8 542.8 1227.8 536.8" stroke="#173E2C" stroke-width="3.2" fill="none" transform="rotate(-25 1226.8 556.8)"/><path d="M1226.8 556.8 Q1221.8 542.8 1227.8 536.8" stroke="#3E8A66" stroke-width="1.8" fill="none" transform="rotate(-25 1226.8 556.8)"/><path d="M1239.3 554.0 Q1234.3 540.0 1240.3 532.0" stroke="#173E2C" stroke-width="3.2" fill="none" transform="rotate(35 1239.3 554.0)"/><path d="M1239.3 554.0 Q1234.3 540.0 1240.3 532.0" stroke="#3E8A66" stroke-width="1.8" fill="none" transform="rotate(35 1239.3 554.0)"/><path d="M1241.7 554.0 Q1236.7 540.0 1242.7 528.0" stroke="#173E2C" stroke-width="3.2" fill="none" transform="rotate(18 1241.7 554.0)"/><path d="M1241.7 554.0 Q1236.7 540.0 1242.7 528.0" stroke="#3E8A66" stroke-width="1.8" fill="none" transform="rotate(18 1241.7 554.0)"/><path d="M1244.1 554.0 Q1239.1 540.0 1245.1 527.0" stroke="#173E2C" stroke-width="3.2" fill="none" transform="rotate(4 1244.1 554.0)"/><path d="M1244.1 554.0 Q1239.1 540.0 1245.1 527.0" stroke="#3E8A66" stroke-width="1.8" fill="none" transform="rotate(4 1244.1 554.0)"/><path d="M1246.5 554.0 Q1241.5 540.0 1247.5 530.0" stroke="#173E2C" stroke-width="3.2" fill="none" transform="rotate(-10 1246.5 554.0)"/><path d="M1246.5 554.0 Q1241.5 540.0 1247.5 530.0" stroke="#3E8A66" stroke-width="1.8" fill="none" transform="rotate(-10 1246.5 554.0)"/><path d="M1248.3 554.0 Q1243.3 540.0 1249.3 534.0" stroke="#173E2C" stroke-width="3.2" fill="none" transform="rotate(-25 1248.3 554.0)"/><path d="M1248.3 554.0 Q1243.3 540.0 1249.3 534.0" stroke="#3E8A66" stroke-width="1.8" fill="none" transform="rotate(-25 1248.3 554.0)"/><path d="M1260.8 551.2 Q1255.8 537.2 1261.8 529.2" stroke="#173E2C" stroke-width="3.2" fill="none" transform="rotate(35 1260.8 551.2)"/><path d="M1260.8 551.2 Q1255.8 537.2 1261.8 529.2" stroke="#3E8A66" stroke-width="1.8" fill="none" transform="rotate(35 1260.8 551.2)"/><path d="M1263.2 551.2 Q1258.2 537.2 1264.2 525.2" stroke="#173E2C" stroke-width="3.2" fill="none" transform="rotate(18 1263.2 551.2)"/><path d="M1263.2 551.2 Q1258.2 537.2 1264.2 525.2" stroke="#3E8A66" stroke-width="1.8" fill="none" transform="rotate(18 1263.2 551.2)"/><path d="M1265.6 551.2 Q1260.6 537.2 1266.6 524.2" stroke="#173E2C" stroke-width="3.2" fill="none" transform="rotate(4 1265.6 551.2)"/><path d="M1265.6 551.2 Q1260.6 537.2 1266.6 524.2" stroke="#3E8A66" stroke-width="1.8" fill="none" transform="rotate(4 1265.6 551.2)"/><path d="M1268.0 551.2 Q1263.0 537.2 1269.0 527.2" stroke="#173E2C" stroke-width="3.2" fill="none" transform="rotate(-10 1268.0 551.2)"/><path d="M1268.0 551.2 Q1263.0 537.2 1269.0 527.2" stroke="#3E8A66" stroke-width="1.8" fill="none" transform="rotate(-10 1268.0 551.2)"/><path d="M1269.8 551.2 Q1264.8 537.2 1270.8 531.2" stroke="#173E2C" stroke-width="3.2" fill="none" transform="rotate(-25 1269.8 551.2)"/><path d="M1269.8 551.2 Q1264.8 537.2 1270.8 531.2" stroke="#3E8A66" stroke-width="1.8" fill="none" transform="rotate(-25 1269.8 551.2)"/><path d="M1282.3 548.4 Q1277.3 534.4 1283.3 526.4" stroke="#173E2C" stroke-width="3.2" fill="none" transform="rotate(35 1282.3 548.4)"/><path d="M1282.3 548.4 Q1277.3 534.4 1283.3 526.4" stroke="#3E8A66" stroke-width="1.8" fill="none" transform="rotate(35 1282.3 548.4)"/><path d="M1284.7 548.4 Q1279.7 534.4 1285.7 522.4" stroke="#173E2C" stroke-width="3.2" fill="none" transform="rotate(18 1284.7 548.4)"/><path d="M1284.7 548.4 Q1279.7 534.4 1285.7 522.4" stroke="#3E8A66" stroke-width="1.8" fill="none" transform="rotate(18 1284.7 548.4)"/><path d="M1287.1 548.4 Q1282.1 534.4 1288.1 521.4" stroke="#173E2C" stroke-width="3.2" fill="none" transform="rotate(4 1287.1 548.4)"/><path d="M1287.1 548.4 Q1282.1 534.4 1288.1 521.4" stroke="#3E8A66" stroke-width="1.8" fill="none" transform="rotate(4 1287.1 548.4)"/><path d="M1289.5 548.4 Q1284.5 534.4 1290.5 524.4" stroke="#173E2C" stroke-width="3.2" fill="none" transform="rotate(-10 1289.5 548.4)"/><path d="M1289.5 548.4 Q1284.5 534.4 1290.5 524.4" stroke="#3E8A66" stroke-width="1.8" fill="none" transform="rotate(-10 1289.5 548.4)"/><path d="M1291.3 548.4 Q1286.3 534.4 1292.3 528.4" stroke="#173E2C" stroke-width="3.2" fill="none" transform="rotate(-25 1291.3 548.4)"/><path d="M1291.3 548.4 Q1286.3 534.4 1292.3 528.4" stroke="#3E8A66" stroke-width="1.8" fill="none" transform="rotate(-25 1291.3 548.4)"/><path d="M1131.8 604.0 Q1126.8 590.0 1132.8 582.0" stroke="#173E2C" stroke-width="3.2" fill="none" transform="rotate(35 1131.8 604.0)"/><path d="M1131.8 604.0 Q1126.8 590.0 1132.8 582.0" stroke="#3E8A66" stroke-width="1.8" fill="none" transform="rotate(35 1131.8 604.0)"/><path d="M1134.2 604.0 Q1129.2 590.0 1135.2 578.0" stroke="#173E2C" stroke-width="3.2" fill="none" transform="rotate(18 1134.2 604.0)"/><path d="M1134.2 604.0 Q1129.2 590.0 1135.2 578.0" stroke="#3E8A66" stroke-width="1.8" fill="none" transform="rotate(18 1134.2 604.0)"/><path d="M1136.6 604.0 Q1131.6 590.0 1137.6 577.0" stroke="#173E2C" stroke-width="3.2" fill="none" transform="rotate(4 1136.6 604.0)"/><path d="M1136.6 604.0 Q1131.6 590.0 1137.6 577.0" stroke="#3E8A66" stroke-width="1.8" fill="none" transform="rotate(4 1136.6 604.0)"/><path d="M1139.0 604.0 Q1134.0 590.0 1140.0 580.0" stroke="#173E2C" stroke-width="3.2" fill="none" transform="rotate(-10 1139.0 604.0)"/><path d="M1139.0 604.0 Q1134.0 590.0 1140.0 580.0" stroke="#3E8A66" stroke-width="1.8" fill="none" transform="rotate(-10 1139.0 604.0)"/><path d="M1140.8 604.0 Q1135.8 590.0 1141.8 584.0" stroke="#173E2C" stroke-width="3.2" fill="none" transform="rotate(-25 1140.8 604.0)"/><path d="M1140.8 604.0 Q1135.8 590.0 1141.8 584.0" stroke="#3E8A66" stroke-width="1.8" fill="none" transform="rotate(-25 1140.8 604.0)"/><path d="M1153.3 601.2 Q1148.3 587.2 1154.3 579.2" stroke="#173E2C" stroke-width="3.2" fill="none" transform="rotate(35 1153.3 601.2)"/><path d="M1153.3 601.2 Q1148.3 587.2 1154.3 579.2" stroke="#3E8A66" stroke-width="1.8" fill="none" transform="rotate(35 1153.3 601.2)"/><path d="M1155.7 601.2 Q1150.7 587.2 1156.7 575.2" stroke="#173E2C" stroke-width="3.2" fill="none" transform="rotate(18 1155.7 601.2)"/><path d="M1155.7 601.2 Q1150.7 587.2 1156.7 575.2" stroke="#3E8A66" stroke-width="1.8" fill="none" transform="rotate(18 1155.7 601.2)"/><path d="M1158.1 601.2 Q1153.1 587.2 1159.1 574.2" stroke="#173E2C" stroke-width="3.2" fill="none" transform="rotate(4 1158.1 601.2)"/><path d="M1158.1 601.2 Q1153.1 587.2 1159.1 574.2" stroke="#3E8A66" stroke-width="1.8" fill="none" transform="rotate(4 1158.1 601.2)"/><path d="M1160.5 601.2 Q1155.5 587.2 1161.5 577.2" stroke="#173E2C" stroke-width="3.2" fill="none" transform="rotate(-10 1160.5 601.2)"/><path d="M1160.5 601.2 Q1155.5 587.2 1161.5 577.2" stroke="#3E8A66" stroke-width="1.8" fill="none" transform="rotate(-10 1160.5 601.2)"/><path d="M1162.3 601.2 Q1157.3 587.2 1163.3 581.2" stroke="#173E2C" stroke-width="3.2" fill="none" transform="rotate(-25 1162.3 601.2)"/><path d="M1162.3 601.2 Q1157.3 587.2 1163.3 581.2" stroke="#3E8A66" stroke-width="1.8" fill="none" transform="rotate(-25 1162.3 601.2)"/><path d="M1174.8 598.4 Q1169.8 584.4 1175.8 576.4" stroke="#173E2C" stroke-width="3.2" fill="none" transform="rotate(35 1174.8 598.4)"/><path d="M1174.8 598.4 Q1169.8 584.4 1175.8 576.4" stroke="#3E8A66" stroke-width="1.8" fill="none" transform="rotate(35 1174.8 598.4)"/><path d="M1177.2 598.4 Q1172.2 584.4 1178.2 572.4" stroke="#173E2C" stroke-width="3.2" fill="none" transform="rotate(18 1177.2 598.4)"/><path d="M1177.2 598.4 Q1172.2 584.4 1178.2 572.4" stroke="#3E8A66" stroke-width="1.8" fill="none" transform="rotate(18 1177.2 598.4)"/><path d="M1179.6 598.4 Q1174.6 584.4 1180.6 571.4" stroke="#173E2C" stroke-width="3.2" fill="none" transform="rotate(4 1179.6 598.4)"/><path d="M1179.6 598.4 Q1174.6 584.4 1180.6 571.4" stroke="#3E8A66" stroke-width="1.8" fill="none" transform="rotate(4 1179.6 598.4)"/><path d="M1182.0 598.4 Q1177.0 584.4 1183.0 574.4" stroke="#173E2C" stroke-width="3.2" fill="none" transform="rotate(-10 1182.0 598.4)"/><path d="M1182.0 598.4 Q1177.0 584.4 1183.0 574.4" stroke="#3E8A66" stroke-width="1.8" fill="none" transform="rotate(-10 1182.0 598.4)"/><path d="M1183.8 598.4 Q1178.8 584.4 1184.8 578.4" stroke="#173E2C" stroke-width="3.2" fill="none" transform="rotate(-25 1183.8 598.4)"/><path d="M1183.8 598.4 Q1178.8 584.4 1184.8 578.4" stroke="#3E8A66" stroke-width="1.8" fill="none" transform="rotate(-25 1183.8 598.4)"/><path d="M1196.3 595.6 Q1191.3 581.6 1197.3 573.6" stroke="#173E2C" stroke-width="3.2" fill="none" transform="rotate(35 1196.3 595.6)"/><path d="M1196.3 595.6 Q1191.3 581.6 1197.3 573.6" stroke="#3E8A66" stroke-width="1.8" fill="none" transform="rotate(35 1196.3 595.6)"/><path d="M1198.7 595.6 Q1193.7 581.6 1199.7 569.6" stroke="#173E2C" stroke-width="3.2" fill="none" transform="rotate(18 1198.7 595.6)"/><path d="M1198.7 595.6 Q1193.7 581.6 1199.7 569.6" stroke="#3E8A66" stroke-width="1.8" fill="none" transform="rotate(18 1198.7 595.6)"/><path d="M1201.1 595.6 Q1196.1 581.6 1202.1 568.6" stroke="#173E2C" stroke-width="3.2" fill="none" transform="rotate(4 1201.1 595.6)"/><path d="M1201.1 595.6 Q1196.1 581.6 1202.1 568.6" stroke="#3E8A66" stroke-width="1.8" fill="none" transform="rotate(4 1201.1 595.6)"/><path d="M1203.5 595.6 Q1198.5 581.6 1204.5 571.6" stroke="#173E2C" stroke-width="3.2" fill="none" transform="rotate(-10 1203.5 595.6)"/><path d="M1203.5 595.6 Q1198.5 581.6 1204.5 571.6" stroke="#3E8A66" stroke-width="1.8" fill="none" transform="rotate(-10 1203.5 595.6)"/><path d="M1205.3 595.6 Q1200.3 581.6 1206.3 575.6" stroke="#173E2C" stroke-width="3.2" fill="none" transform="rotate(-25 1205.3 595.6)"/><path d="M1205.3 595.6 Q1200.3 581.6 1206.3 575.6" stroke="#3E8A66" stroke-width="1.8" fill="none" transform="rotate(-25 1205.3 595.6)"/><path d="M1217.8 592.8 Q1212.8 578.8 1218.8 570.8" stroke="#173E2C" stroke-width="3.2" fill="none" transform="rotate(35 1217.8 592.8)"/><path d="M1217.8 592.8 Q1212.8 578.8 1218.8 570.8" stroke="#3E8A66" stroke-width="1.8" fill="none" transform="rotate(35 1217.8 592.8)"/><path d="M1220.2 592.8 Q1215.2 578.8 1221.2 566.8" stroke="#173E2C" stroke-width="3.2" fill="none" transform="rotate(18 1220.2 592.8)"/><path d="M1220.2 592.8 Q1215.2 578.8 1221.2 566.8" stroke="#3E8A66" stroke-width="1.8" fill="none" transform="rotate(18 1220.2 592.8)"/><path d="M1222.6 592.8 Q1217.6 578.8 1223.6 565.8" stroke="#173E2C" stroke-width="3.2" fill="none" transform="rotate(4 1222.6 592.8)"/><path d="M1222.6 592.8 Q1217.6 578.8 1223.6 565.8" stroke="#3E8A66" stroke-width="1.8" fill="none" transform="rotate(4 1222.6 592.8)"/><path d="M1225.0 592.8 Q1220.0 578.8 1226.0 568.8" stroke="#173E2C" stroke-width="3.2" fill="none" transform="rotate(-10 1225.0 592.8)"/><path d="M1225.0 592.8 Q1220.0 578.8 1226.0 568.8" stroke="#3E8A66" stroke-width="1.8" fill="none" transform="rotate(-10 1225.0 592.8)"/><path d="M1226.8 592.8 Q1221.8 578.8 1227.8 572.8" stroke="#173E2C" stroke-width="3.2" fill="none" transform="rotate(-25 1226.8 592.8)"/><path d="M1226.8 592.8 Q1221.8 578.8 1227.8 572.8" stroke="#3E8A66" stroke-width="1.8" fill="none" transform="rotate(-25 1226.8 592.8)"/><path d="M1239.3 590.0 Q1234.3 576.0 1240.3 568.0" stroke="#173E2C" stroke-width="3.2" fill="none" transform="rotate(35 1239.3 590.0)"/><path d="M1239.3 590.0 Q1234.3 576.0 1240.3 568.0" stroke="#3E8A66" stroke-width="1.8" fill="none" transform="rotate(35 1239.3 590.0)"/><path d="M1241.7 590.0 Q1236.7 576.0 1242.7 564.0" stroke="#173E2C" stroke-width="3.2" fill="none" transform="rotate(18 1241.7 590.0)"/><path d="M1241.7 590.0 Q1236.7 576.0 1242.7 564.0" stroke="#3E8A66" stroke-width="1.8" fill="none" transform="rotate(18 1241.7 590.0)"/><path d="M1244.1 590.0 Q1239.1 576.0 1245.1 563.0" stroke="#173E2C" stroke-width="3.2" fill="none" transform="rotate(4 1244.1 590.0)"/><path d="M1244.1 590.0 Q1239.1 576.0 1245.1 563.0" stroke="#3E8A66" stroke-width="1.8" fill="none" transform="rotate(4 1244.1 590.0)"/><path d="M1246.5 590.0 Q1241.5 576.0 1247.5 566.0" stroke="#173E2C" stroke-width="3.2" fill="none" transform="rotate(-10 1246.5 590.0)"/><path d="M1246.5 590.0 Q1241.5 576.0 1247.5 566.0" stroke="#3E8A66" stroke-width="1.8" fill="none" transform="rotate(-10 1246.5 590.0)"/><path d="M1248.3 590.0 Q1243.3 576.0 1249.3 570.0" stroke="#173E2C" stroke-width="3.2" fill="none" transform="rotate(-25 1248.3 590.0)"/><path d="M1248.3 590.0 Q1243.3 576.0 1249.3 570.0" stroke="#3E8A66" stroke-width="1.8" fill="none" transform="rotate(-25 1248.3 590.0)"/><path d="M1260.8 587.2 Q1255.8 573.2 1261.8 565.2" stroke="#173E2C" stroke-width="3.2" fill="none" transform="rotate(35 1260.8 587.2)"/><path d="M1260.8 587.2 Q1255.8 573.2 1261.8 565.2" stroke="#3E8A66" stroke-width="1.8" fill="none" transform="rotate(35 1260.8 587.2)"/><path d="M1263.2 587.2 Q1258.2 573.2 1264.2 561.2" stroke="#173E2C" stroke-width="3.2" fill="none" transform="rotate(18 1263.2 587.2)"/><path d="M1263.2 587.2 Q1258.2 573.2 1264.2 561.2" stroke="#3E8A66" stroke-width="1.8" fill="none" transform="rotate(18 1263.2 587.2)"/><path d="M1265.6 587.2 Q1260.6 573.2 1266.6 560.2" stroke="#173E2C" stroke-width="3.2" fill="none" transform="rotate(4 1265.6 587.2)"/><path d="M1265.6 587.2 Q1260.6 573.2 1266.6 560.2" stroke="#3E8A66" stroke-width="1.8" fill="none" transform="rotate(4 1265.6 587.2)"/><path d="M1268.0 587.2 Q1263.0 573.2 1269.0 563.2" stroke="#173E2C" stroke-width="3.2" fill="none" transform="rotate(-10 1268.0 587.2)"/><path d="M1268.0 587.2 Q1263.0 573.2 1269.0 563.2" stroke="#3E8A66" stroke-width="1.8" fill="none" transform="rotate(-10 1268.0 587.2)"/><path d="M1269.8 587.2 Q1264.8 573.2 1270.8 567.2" stroke="#173E2C" stroke-width="3.2" fill="none" transform="rotate(-25 1269.8 587.2)"/><path d="M1269.8 587.2 Q1264.8 573.2 1270.8 567.2" stroke="#3E8A66" stroke-width="1.8" fill="none" transform="rotate(-25 1269.8 587.2)"/><path d="M1282.3 584.4 Q1277.3 570.4 1283.3 562.4" stroke="#173E2C" stroke-width="3.2" fill="none" transform="rotate(35 1282.3 584.4)"/><path d="M1282.3 584.4 Q1277.3 570.4 1283.3 562.4" stroke="#3E8A66" stroke-width="1.8" fill="none" transform="rotate(35 1282.3 584.4)"/><path d="M1284.7 584.4 Q1279.7 570.4 1285.7 558.4" stroke="#173E2C" stroke-width="3.2" fill="none" transform="rotate(18 1284.7 584.4)"/><path d="M1284.7 584.4 Q1279.7 570.4 1285.7 558.4" stroke="#3E8A66" stroke-width="1.8" fill="none" transform="rotate(18 1284.7 584.4)"/><path d="M1287.1 584.4 Q1282.1 570.4 1288.1 557.4" stroke="#173E2C" stroke-width="3.2" fill="none" transform="rotate(4 1287.1 584.4)"/><path d="M1287.1 584.4 Q1282.1 570.4 1288.1 557.4" stroke="#3E8A66" stroke-width="1.8" fill="none" transform="rotate(4 1287.1 584.4)"/><path d="M1289.5 584.4 Q1284.5 570.4 1290.5 560.4" stroke="#173E2C" stroke-width="3.2" fill="none" transform="rotate(-10 1289.5 584.4)"/><path d="M1289.5 584.4 Q1284.5 570.4 1290.5 560.4" stroke="#3E8A66" stroke-width="1.8" fill="none" transform="rotate(-10 1289.5 584.4)"/><path d="M1291.3 584.4 Q1286.3 570.4 1292.3 564.4" stroke="#173E2C" stroke-width="3.2" fill="none" transform="rotate(-25 1291.3 584.4)"/><path d="M1291.3 584.4 Q1286.3 570.4 1292.3 564.4" stroke="#3E8A66" stroke-width="1.8" fill="none" transform="rotate(-25 1291.3 584.4)"/><path d="M1352 538 Q1380 548 1410 562 Q1416 566 1412 569 Q1405 571 1380 560 Q1354 550 1348 544 Q1347 538 1352 538Z" fill="#D98070" stroke="#5A2A20" stroke-width="1.1"/><path d="M1366 530 Q1390 545 1408 555 Q1412 558 1409 561 Q1404 562 1392 553 Q1372 540 1364 534 Q1363 530 1366 530Z" fill="#D98070" stroke="#5A2A20" stroke-width="1.1"/><path d="M919 719 Q915 704 905 692" stroke="#C8C8A0" stroke-width="2.6" fill="none"/><path d="M921 719 Q922 702 921 684" stroke="#E8E0B0" stroke-width="2.2" fill="none"/><path d="M922 718 Q929 704 941 692" stroke="#8B2A40" stroke-width="2.6" fill="none"/><path d="M892 686 L894 681 L897 680 L900 676 L904 678 L908 677 L910 682 L914 686 L913 691 L916 696 L910 699 L905 697 L900 699 L897 694 L893 692 Z" fill="#4CB848" stroke="#0A3A0C" stroke-width="1.2" stroke-linejoin="round"/><path d="M913 696 L897 682 M902 687 L900 681 M906 691 L910 684 M905 690 L896 690" stroke="#D8F0C8" stroke-width="0.9"/><path d="M911 682 L913 676 L917 675 L920 671 L924 674 L928 676 L928 682 L930 687 L925 692 L924 699 L919 700 L914 694 Z" fill="#5CC848" stroke="#0A3A0C" stroke-width="1.2" stroke-linejoin="round"/><path d="M921 699 L920 675 M920 684 L915 679 M920 688 L926 682" stroke="#E0F4D0" stroke-width="0.9"/><path d="M928 680 L933 675 L939 676 L943 673 L949 676 L953 681 L957 685 L954 691 L955 696 L948 699 L941 698 L935 701 L930 696 L931 689 Z" fill="#2E9A2E" stroke="#0A3A0C" stroke-width="1.2" stroke-linejoin="round"/><path d="M931 696 Q941 686 951 681" stroke="#7A4A2A" stroke-width="2" fill="none" opacity="0.8"/><path d="M1245 721 Q1241 706 1231 694" stroke="#C8C8A0" stroke-width="2.6" fill="none"/><path d="M1247 721 Q1248 704 1247 686" stroke="#E8E0B0" stroke-width="2.2" fill="none"/><path d="M1248 720 Q1255 706 1267 694" stroke="#8B2A40" stroke-width="2.6" fill="none"/><path d="M1218 688 L1220 683 L1223 682 L1226 678 L1230 680 L1234 679 L1236 684 L1240 688 L1239 693 L1242 698 L1236 701 L1231 699 L1226 701 L1223 696 L1219 694 Z" fill="#4CB848" stroke="#0A3A0C" stroke-width="1.2" stroke-linejoin="round"/><path d="M1239 698 L1223 684 M1228 689 L1226 683 M1232 693 L1236 686 M1231 692 L1222 692" stroke="#D8F0C8" stroke-width="0.9"/><path d="M1237 684 L1239 678 L1243 677 L1246 673 L1250 676 L1254 678 L1254 684 L1256 689 L1251 694 L1250 701 L1245 702 L1240 696 Z" fill="#5CC848" stroke="#0A3A0C" stroke-width="1.2" stroke-linejoin="round"/><path d="M1247 701 L1246 677 M1246 686 L1241 681 M1246 690 L1252 684" stroke="#E0F4D0" stroke-width="0.9"/><path d="M1254 682 L1259 677 L1265 678 L1269 675 L1275 678 L1279 683 L1283 687 L1280 693 L1281 698 L1274 701 L1267 700 L1261 703 L1256 698 L1257 691 Z" fill="#2E9A2E" stroke="#0A3A0C" stroke-width="1.2" stroke-linejoin="round"/><path d="M1257 698 Q1267 688 1277 683" stroke="#7A4A2A" stroke-width="2" fill="none" opacity="0.8"/><circle cx="1352" cy="700" r="5.5" fill="#B0203A" stroke="#3A0A14" stroke-width="0.8"/><path d="M1345 697 L1350 702 M1359 697 L1354 702" stroke="#6A8A80" stroke-width="2"/><circle cx="1352" cy="711" r="5.5" fill="#B0203A" stroke="#3A0A14" stroke-width="0.8"/><path d="M1345 708 L1350 713 M1359 708 L1354 713" stroke="#6A8A80" stroke-width="2"/><circle cx="1352" cy="722" r="5.5" fill="#B0203A" stroke="#3A0A14" stroke-width="0.8"/><path d="M1345 719 L1350 724 M1359 719 L1354 724" stroke="#6A8A80" stroke-width="2"/><circle cx="1352" cy="733" r="5.5" fill="#B0203A" stroke="#3A0A14" stroke-width="0.8"/><path d="M1345 730 L1350 735 M1359 730 L1354 735" stroke="#6A8A80" stroke-width="2"/><path d="M1344 692 L1350 696 L1346 688 Z M1360 692 L1354 696 L1358 688Z" fill="#7A9A90" stroke="#333" stroke-width="0.6"/><path d="M1392 626.0 Q1388 618.0 1398 612.0 Q1408 618.0 1404 626.0 Z" fill="#F3EBD0" stroke="#2A2A3A" stroke-width="1"/><path d="M1392 638.5 Q1388 630.5 1398 624.5 Q1408 630.5 1404 638.5 Z" fill="#F3EBD0" stroke="#2A2A3A" stroke-width="1"/><path d="M1404 632.5 Q1412 628.5 1420 628.5 Q1414 634.5 1404 636.5Z" fill="#C8D4D8" stroke="#2A2A3A" stroke-width="0.8"/><path d="M1392 651.0 Q1388 643.0 1398 637.0 Q1408 643.0 1404 651.0 Z" fill="#F3EBD0" stroke="#2A2A3A" stroke-width="1"/><path d="M1404 645.0 Q1412 641.0 1420 641.0 Q1414 647.0 1404 649.0Z" fill="#C8D4D8" stroke="#2A2A3A" stroke-width="0.8"/><path d="M1392 663.5 Q1388 655.5 1398 649.5 Q1408 655.5 1404 663.5 Z" fill="#F3EBD0" stroke="#2A2A3A" stroke-width="1"/><path d="M1404 657.5 Q1412 653.5 1420 653.5 Q1414 659.5 1404 661.5Z" fill="#C8D4D8" stroke="#2A2A3A" stroke-width="0.8"/><path d="M1392 676.0 Q1388 668.0 1398 662.0 Q1408 668.0 1404 676.0 Z" fill="#F3EBD0" stroke="#2A2A3A" stroke-width="1"/><path d="M1404 670.0 Q1412 666.0 1420 666.0 Q1414 672.0 1404 674.0Z" fill="#C8D4D8" stroke="#2A2A3A" stroke-width="0.8"/><path d="M1392 688.5 Q1388 680.5 1398 674.5 Q1408 680.5 1404 688.5 Z" fill="#F3EBD0" stroke="#2A2A3A" stroke-width="1"/><path d="M1404 682.5 Q1412 678.5 1420 678.5 Q1414 684.5 1404 686.5Z" fill="#C8D4D8" stroke="#2A2A3A" stroke-width="0.8"/><path d="M1392 701.0 Q1388 693.0 1398 687.0 Q1408 693.0 1404 701.0 Z" fill="#F3EBD0" stroke="#2A2A3A" stroke-width="1"/><path d="M1404 695.0 Q1412 691.0 1420 691.0 Q1414 697.0 1404 699.0Z" fill="#C8D4D8" stroke="#2A2A3A" stroke-width="0.8"/><path d="M1392 713.5 Q1388 705.5 1398 699.5 Q1408 705.5 1404 713.5 Z" fill="#F3EBD0" stroke="#2A2A3A" stroke-width="1"/><path d="M1404 707.5 Q1412 703.5 1420 703.5 Q1414 709.5 1404 711.5Z" fill="#C8D4D8" stroke="#2A2A3A" stroke-width="0.8"/><path d="M1392 726.0 Q1388 718.0 1398 712.0 Q1408 718.0 1404 726.0 Z" fill="#F3EBD0" stroke="#2A2A3A" stroke-width="1"/><path d="M1404 720.0 Q1412 716.0 1420 716.0 Q1414 722.0 1404 724.0Z" fill="#C8D4D8" stroke="#2A2A3A" stroke-width="0.8"/><path d="M1392 738.5 Q1388 730.5 1398 724.5 Q1408 730.5 1404 738.5 Z" fill="#F3EBD0" stroke="#2A2A3A" stroke-width="1"/><path d="M1404 732.5 Q1412 728.5 1420 728.5 Q1414 734.5 1404 736.5Z" fill="#C8D4D8" stroke="#2A2A3A" stroke-width="0.8"/><text x="1444" y="478" font-family="Liberation Sans" font-size="13" fill="#333">1'</text><text x="1444" y="518" font-family="Liberation Sans" font-size="13" fill="#333">2'</text><text x="1444" y="559" font-family="Liberation Sans" font-size="13" fill="#333">3'</text><text x="1444" y="600" font-family="Liberation Sans" font-size="13" fill="#333">4'</text><text x="1444" y="640" font-family="Liberation Sans" font-size="13" fill="#333">5'</text><text x="1444" y="680" font-family="Liberation Sans" font-size="13" fill="#333">6'</text><text x="1444" y="721" font-family="Liberation Sans" font-size="13" fill="#333">7'</text></g></svg><svg style="position:absolute;left:700px;top:380px;" width="800" height="380" viewBox="700 380 800 380"><rect x="730.5" y="450.5" width="731" height="282" fill="none" stroke="#666" stroke-width="1.2"/><path d="M1096 420 V444" stroke="#666" stroke-width="1.2"/><circle cx="731" cy="451" r="6" fill="#fff" stroke="#666" stroke-width="2"/><circle cx="1096" cy="451" r="6" fill="#fff" stroke="#666" stroke-width="2"/><circle cx="1462" cy="451" r="6" fill="#fff" stroke="#666" stroke-width="2"/><circle cx="731" cy="592" r="6" fill="#fff" stroke="#666" stroke-width="2"/><circle cx="1462" cy="592" r="6" fill="#fff" stroke="#666" stroke-width="2"/><circle cx="731" cy="733" r="6" fill="#fff" stroke="#666" stroke-width="2"/><circle cx="1096" cy="733" r="6" fill="#fff" stroke="#666" stroke-width="2"/><circle cx="1462" cy="733" r="6" fill="#fff" stroke="#666" stroke-width="2"/><path d="M1105.8 407 A9.5 9.5 0 1 0 1101.75 414.78" fill="none" stroke="#666" stroke-width="6.2"/><path d="M1105.8 407 A9.5 9.5 0 1 0 1101.75 414.78" fill="none" stroke="#fff" stroke-width="2.2"/><path d="M1096.8 406 H1115.2 L1105.8 414.3 Z" fill="#fff" stroke="#666" stroke-width="2" stroke-linejoin="miter"/></svg></body></html>
